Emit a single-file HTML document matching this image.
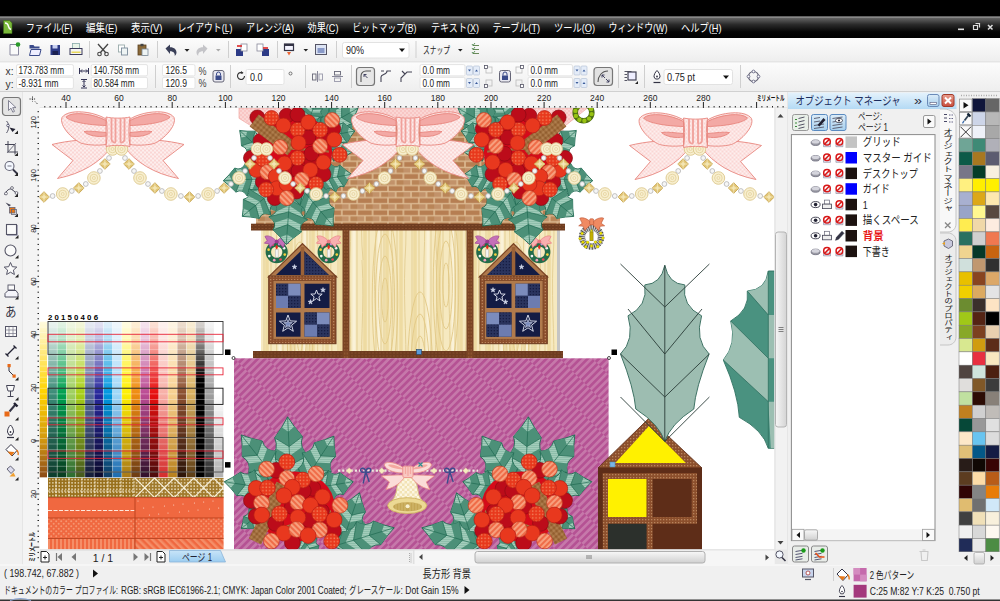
<!DOCTYPE html>
<html lang="ja">
<head>
<meta charset="utf-8">
<title>CorelDRAW - オブジェクト マネージャ</title>
<style>
html,body{margin:0;padding:0;background:#f0f0f0;overflow:hidden}
body{width:1000px;height:601px;position:relative;font-family:"Liberation Sans", "Noto Sans CJK JP", sans-serif}
svg{position:absolute;left:0;top:0;display:block}
text{font-family:"Liberation Sans", "Noto Sans CJK JP", sans-serif;white-space:pre}
</style>
</head>
<body>
<svg width="1000" height="601" viewBox="0 0 1000 601">
<defs>
<linearGradient id="gMenu" x1="0" y1="0" x2="0" y2="1"><stop offset="0" stop-color="#6a6a6a"/><stop offset="0.35" stop-color="#2a2a2a"/><stop offset="0.7" stop-color="#050505"/><stop offset="1" stop-color="#000"/></linearGradient>
<linearGradient id="gBar" x1="0" y1="0" x2="0" y2="1"><stop offset="0" stop-color="#fcfcfc"/><stop offset="1" stop-color="#eeeeee"/></linearGradient>
<linearGradient id="gHdr" x1="0" y1="0" x2="0" y2="1"><stop offset="0" stop-color="#e4f2fc"/><stop offset="1" stop-color="#b4daf4"/></linearGradient>
<linearGradient id="gTab" x1="0" y1="0" x2="0" y2="1"><stop offset="0" stop-color="#c8e4f8"/><stop offset="1" stop-color="#9ccdf0"/></linearGradient>
<linearGradient id="gThumbV" x1="0" y1="0" x2="1" y2="0"><stop offset="0" stop-color="#f6f6f6"/><stop offset="1" stop-color="#d4d4d4"/></linearGradient>
<linearGradient id="gThumbH" x1="0" y1="0" x2="0" y2="1"><stop offset="0" stop-color="#f8f8f8"/><stop offset="1" stop-color="#d0d0d0"/></linearGradient>
<linearGradient id="gBtnBlue" x1="0" y1="0" x2="0" y2="1"><stop offset="0" stop-color="#dcecf8"/><stop offset="1" stop-color="#a8d0ee"/></linearGradient>
<linearGradient id="gBtnRed" x1="0" y1="0" x2="0" y2="1"><stop offset="0" stop-color="#eaa090"/><stop offset="1" stop-color="#c84c3c"/></linearGradient>
<pattern id="pDots" width="4" height="4" patternUnits="userSpaceOnUse"><rect width="4" height="4" fill="#fad6d4"/><circle cx="1" cy="1" r="1.100" fill="#fef3f2"/><circle cx="3" cy="3" r="1.100" fill="#fef3f2"/></pattern>
<pattern id="pDots2" width="4" height="4" patternUnits="userSpaceOnUse"><rect width="4" height="4" fill="#f8c6c4"/><circle cx="1" cy="1" r="1" fill="#fbdcda"/><circle cx="3" cy="3" r="1" fill="#fbdcda"/></pattern>
<pattern id="pBell" width="5" height="5" patternUnits="userSpaceOnUse" x="2" y="1"><rect width="5" height="5" fill="#f2e3b4"/><rect width="2.500" height="2.500" fill="#fcf6e2"/><rect x="2.500" y="2.500" width="2.500" height="2.500" fill="#fcf6e2"/></pattern>
<pattern id="pLeafL" width="3" height="2" patternUnits="userSpaceOnUse"><rect width="3" height="2" fill="#8ebfab"/><rect width="3" height="0.900" fill="#a6cfbd"/></pattern>
<pattern id="pMag" width="46" height="5.300" patternUnits="userSpaceOnUse" patternTransform="translate(236 360) rotate(-45)"><rect width="46" height="5.300" fill="#b55294"/><rect x="0" y="0" width="23" height="2.650" fill="#c678aa"/><rect x="23" y="2.650" width="23" height="2.650" fill="#c678aa"/></pattern>
<pattern id="pBrick" width="15.400" height="12.100" patternUnits="userSpaceOnUse" x="3" y="4"><rect width="15.400" height="12.100" fill="#dcba92"/><rect x="0.800" y="0.700" width="13.800" height="4.700" fill="#b67e52"/><rect x="-6.900" y="6.750" width="13.800" height="4.700" fill="#c2926a"/><rect x="8.500" y="6.750" width="13.800" height="4.700" fill="#b98558"/></pattern>
<pattern id="pWood" width="74" height="130" patternUnits="userSpaceOnUse" x="261"><rect width="74" height="130" fill="#f6e9c0"/><path d="M6 0V130M30 0V130M52 0V130M66 0V130" stroke="#eedba2" stroke-width="3.500"/><path d="M19 0V130M44 0V130" stroke="#faf2d8" stroke-width="3"/><path d="M3 0V130M10 0V130M15 0C14 40 17 80 15 130M22 0V130M27 0C30 50 24 90 28 130M34 0V130M40 0C38 30 43 70 40 130M46 0V130M49 0V130M57 0C60 40 54 100 58 130M62 0V130M70 0C68 50 73 90 70 130" stroke="#e2cc90" stroke-width="0.900" fill="none"/></pattern>
<pattern id="pBrown" width="3.200" height="3.200" patternUnits="userSpaceOnUse" x="48" y="478"><rect width="3.200" height="3.200" fill="#98701c"/><rect x="1" y="1" width="1.300" height="1.300" fill="#fbf3dc"/></pattern>
<pattern id="pBrown2" width="3.200" height="3.200" patternUnits="userSpaceOnUse" x="135" y="478"><rect width="3.200" height="3.200" fill="#a07a2c"/><rect x="1" y="1" width="1.300" height="1.300" fill="#fbf3dc"/></pattern>
<pattern id="pFrame" width="3" height="3" patternUnits="userSpaceOnUse"><rect width="3" height="3" fill="#8c4f2c"/><rect x="0" y="0" width="1.3" height="1.3" fill="#b8845c"/></pattern>
<pattern id="pLeaf" width="3" height="3" patternUnits="userSpaceOnUse" patternTransform="rotate(20)"><rect width="3" height="3" fill="#5fa28e"/><rect width="3" height="1" fill="#79b3a1"/></pattern>
<pattern id="pBerryS" width="4" height="4" patternUnits="userSpaceOnUse" patternTransform="rotate(45)"><rect width="4" height="4" fill="#ef6c48"/><rect width="4" height="2" fill="#f7a07e"/></pattern>
<pattern id="pBerryD" width="3.4" height="3.4" patternUnits="userSpaceOnUse"><rect width="3.4" height="3.4" fill="#e8381c"/><rect x="0.400" y="0.400" width="1.400" height="1.400" fill="#f2805a"/></pattern>
<pattern id="pCinn" width="4" height="4" patternUnits="userSpaceOnUse" patternTransform="rotate(40)"><rect width="4" height="4" fill="#8a5628"/><path d="M0 2L2 0L4 2L2 4z" fill="#c09060"/></pattern>
<pattern id="pOrDot" width="5" height="5" patternUnits="userSpaceOnUse"><rect width="5" height="5" fill="#f06840"/><circle cx="1.2" cy="1.2" r="1" fill="#f59470"/><circle cx="3.7" cy="3.7" r="1" fill="#f59470"/></pattern>
<pattern id="pOrV" width="4" height="4" patternUnits="userSpaceOnUse"><rect width="4" height="4" fill="#f06840"/><rect width="2" height="4" fill="#f58e68"/></pattern>
<pattern id="pOrD" width="5" height="5" patternUnits="userSpaceOnUse" patternTransform="rotate(-45)"><rect width="5" height="5" fill="#f06840"/><rect width="2.5" height="5" fill="#f58e68"/></pattern>
<pattern id="pNavy" width="3" height="3" patternUnits="userSpaceOnUse"><rect width="3" height="3" fill="#2a345e"/><rect width="1.3" height="1.3" fill="#161d42"/></pattern>
<clipPath id="cCanvas"><rect x="39.5" y="108" width="735" height="441.5"/></clipPath>
</defs>
<g id="chrome">
<rect x="0.00" y="0.00" width="1000.00" height="601.00" fill="#f0f0f0" />
<rect x="0.00" y="0.00" width="1000.00" height="17.00" fill="#000" />
<rect x="0.00" y="16.30" width="1000.00" height="1.00" fill="#8a8a8a" />
<rect x="0.00" y="17.30" width="1000.00" height="20.70" fill="url(#gMenu)" />
<rect x="0.00" y="38.00" width="1000.00" height="23.50" fill="url(#gBar)" />
<rect x="0.00" y="61.50" width="1000.00" height="1.00" fill="#dcdcdc" />
<rect x="0.00" y="62.50" width="1000.00" height="28.50" fill="url(#gBar)" />
<rect x="0.00" y="91.00" width="1000.00" height="1.00" fill="#d0d0d0" />
<path d="M3.5 20.5h6l2.5 2.5v10.5h-8.5z" fill="#7ab83a" stroke="#3e6e18" stroke-width="0.6"/><path d="M5 23c1.5 0 3 1 3.5 3.5c.3 1.5 1.2 2.5 2.5 3" stroke="#fff" stroke-width="1.4" fill="none"/>
<g id="menubar">
<text x="26.0" y="31.5" font-size="11" fill="#fff" textLength="46.5" lengthAdjust="spacingAndGlyphs" >ファイル(F)</text>
<rect x="63.00" y="33.00" width="5.00" height="0.80" fill="#ddd" />
<text x="86.0" y="31.5" font-size="11" fill="#fff" textLength="31.5" lengthAdjust="spacingAndGlyphs" >編集(E)</text>
<rect x="108.00" y="33.00" width="5.00" height="0.80" fill="#ddd" />
<text x="131.0" y="31.5" font-size="11" fill="#fff" textLength="31.5" lengthAdjust="spacingAndGlyphs" >表示(V)</text>
<rect x="153.00" y="33.00" width="5.00" height="0.80" fill="#ddd" />
<text x="177.5" y="31.5" font-size="11" fill="#fff" textLength="55.0" lengthAdjust="spacingAndGlyphs" >レイアウト(L)</text>
<rect x="223.00" y="33.00" width="5.00" height="0.80" fill="#ddd" />
<text x="246.0" y="31.5" font-size="11" fill="#fff" textLength="48.0" lengthAdjust="spacingAndGlyphs" >アレンジ(A)</text>
<rect x="284.50" y="33.00" width="5.00" height="0.80" fill="#ddd" />
<text x="307.5" y="31.5" font-size="11" fill="#fff" textLength="31.0" lengthAdjust="spacingAndGlyphs" >効果(C)</text>
<rect x="329.00" y="33.00" width="5.00" height="0.80" fill="#ddd" />
<text x="352.5" y="31.5" font-size="11" fill="#fff" textLength="64.0" lengthAdjust="spacingAndGlyphs" >ビットマップ(B)</text>
<rect x="407.00" y="33.00" width="5.00" height="0.80" fill="#ddd" />
<text x="431.0" y="31.5" font-size="11" fill="#fff" textLength="48.0" lengthAdjust="spacingAndGlyphs" >テキスト(X)</text>
<rect x="469.50" y="33.00" width="5.00" height="0.80" fill="#ddd" />
<text x="492.5" y="31.5" font-size="11" fill="#fff" textLength="47.5" lengthAdjust="spacingAndGlyphs" >テーブル(T)</text>
<rect x="530.50" y="33.00" width="5.00" height="0.80" fill="#ddd" />
<text x="554.0" y="31.5" font-size="11" fill="#fff" textLength="41.0" lengthAdjust="spacingAndGlyphs" >ツール(O)</text>
<rect x="585.50" y="33.00" width="5.00" height="0.80" fill="#ddd" />
<text x="608.5" y="31.5" font-size="11" fill="#fff" textLength="59.0" lengthAdjust="spacingAndGlyphs" >ウィンドウ(W)</text>
<rect x="658.00" y="33.00" width="5.00" height="0.80" fill="#ddd" />
<text x="681.0" y="31.5" font-size="11" fill="#fff" textLength="40.5" lengthAdjust="spacingAndGlyphs" >ヘルプ(H)</text>
<rect x="712.00" y="33.00" width="5.00" height="0.80" fill="#ddd" />
</g>
<rect x="958.00" y="28.50" width="6.00" height="1.60" fill="#ddd" />
<path d="M973.5 25.5h4v4h-4z M975.5 23.5h4v4" fill="none" stroke="#ddd" stroke-width="1.2"/>
<path d="M988 25l4.5 4.5M992.5 25l-4.5 4.5" stroke="#ddd" stroke-width="1.5"/>
<g id="toolbar1">
<path d="M10 44.5h6l2.5 2.5v8h-8.5z" fill="#fafafa" stroke="#8a8aa0" stroke-width="1"/><circle cx="18" cy="44.5" r="2.3" fill="#2a9a2a"/>
<path d="M29.5 45h4l1 1.5h5v2h-10z" fill="#3a4a8a"/><path d="M29.5 55.500l1.5-6h10l-1.500 6z" fill="#eef" stroke="#3a4a8a" stroke-width="1"/>
<path d="M50.500 45h9.500v10h-9.500z" fill="#2c3a86"/><rect x="52.500" y="45" width="5" height="3.500" fill="#c8d0f0"/><rect x="52.500" y="51" width="5.500" height="4" fill="#1a2050"/>
<rect x="72.500" y="43.500" width="7" height="5" fill="#e8f4e8" stroke="#8aa" stroke-width="0.8"/><rect x="70" y="48.500" width="12" height="6" fill="#f4f4f4" stroke="#3a3a5a" stroke-width="1"/><rect x="71.500" y="51.500" width="9" height="1.500" fill="#e8d85a"/>
<rect x="89.00" y="41.00" width="1.00" height="17.00" fill="#cfcfcf" />
<path d="M98 44l8 9M108 44l-8 9" stroke="#444" stroke-width="1.3" fill="none"/><circle cx="99.500" cy="54" r="1.800" fill="none" stroke="#444" stroke-width="1.100"/><circle cx="106.500" cy="54" r="1.800" fill="none" stroke="#444" stroke-width="1.100"/>
<rect x="118.500" y="45" width="6" height="7" fill="#fff" stroke="#9aa" stroke-width="0.9"/><rect x="121.500" y="48" width="6" height="7" fill="#eef4f4" stroke="#7a8a9a" stroke-width="0.9"/>
<rect x="138" y="45" width="8" height="10" fill="#8a6a3a" stroke="#5a4020" stroke-width="0.8"/><rect x="140.500" y="43.800" width="3" height="2.400" fill="#444"/><rect x="142" y="49" width="6" height="6.500" fill="#eef4f4" stroke="#7a8a9a" stroke-width="0.8"/>
<rect x="157.00" y="41.00" width="1.00" height="17.00" fill="#cfcfcf" />
<path d="M165.500 48.500l4.500-4v2.700c4.500 0 6.500 2.500 6.500 5.300c0 1.500-.8 2.800-1.800 3.500c.5-2.500-1-4.800-4.700-4.800v2.800z" fill="#3a3f58"/>
<path d="M184.500 49l2.500 2.800l2.500-2.800z" fill="#222"/>
<path d="M207.500 48.500l-4.500-4v2.700c-4.500 0-6.500 2.500-6.500 5.300c0 1.500.8 2.800 1.800 3.500c-.5-2.500 1-4.800 4.700-4.800v2.800z" fill="#c4c4c8"/>
<path d="M216 49l2.300 2.600l2.300-2.600z" fill="#aaa"/>
<rect x="228.00" y="41.00" width="1.00" height="17.00" fill="#cfcfcf" />
<rect x="236" y="49" width="7" height="7" fill="#2c3a86"/><rect x="241" y="44" width="6" height="7" fill="#fff" stroke="#889" stroke-width="0.8"/><path d="M237 46h5" stroke="#d22" stroke-width="1.6"/>
<rect x="262" y="49" width="7" height="7" fill="#2c3a86"/><rect x="257" y="44" width="6" height="7" fill="#fff" stroke="#889" stroke-width="0.8"/><path d="M263 48h5" stroke="#d22" stroke-width="1.6"/>
<rect x="277.00" y="41.00" width="1.00" height="17.00" fill="#cfcfcf" />
<rect x="284.500" y="44" width="9" height="6.500" fill="#f4f4ff" stroke="#334" stroke-width="1.2"/><rect x="284.500" y="44" width="9" height="2" fill="#334"/><path d="M287 52l2 3.500l2-3.500z" fill="#e63"/>
<path d="M303.500 49l2.300 2.600l2.300-2.600z" fill="#222"/>
<rect x="315.500" y="44.500" width="11" height="10" fill="#dde4f4" stroke="#556" stroke-width="1"/><rect x="317.500" y="48" width="7" height="5" fill="#8a9ac8"/>
<rect x="336.00" y="41.00" width="1.00" height="17.00" fill="#cfcfcf" />
<rect x="342.50" y="42.50" width="66.50" height="15.50" fill="#fff" stroke="#e2e2e2" stroke-width="1" rx="2" />
<text x="346.0" y="54.0" font-size="11" fill="#222" textLength="18.0" lengthAdjust="spacingAndGlyphs" >90%</text>
<path d="M399 48.500l3 3.400l3-3.400z" fill="#111"/>
<rect x="415.50" y="41.00" width="1.00" height="17.00" fill="#cfcfcf" />
<text x="423.0" y="54.0" font-size="10.5" fill="#222" textLength="27.0" lengthAdjust="spacingAndGlyphs" >スナップ</text>
<path d="M458 49l2.300 2.600l2.300-2.600z" fill="#222"/>
<path d="M473 45.500h6M473 49.500h6M473 53.500h6" stroke="#6a8a5a" stroke-width="1.2"/><path d="M472 44l1 1.500l2-2.500M472 48l1 1.500l2-2.500M472 52l1 1.500l2-2.500" stroke="#3a7a3a" stroke-width="0.8" fill="none"/>
</g>
<g id="propbar">
<text x="5.5" y="75.0" font-size="11" fill="#333" textLength="8.0" lengthAdjust="spacingAndGlyphs" >x:</text>
<text x="5.5" y="87.5" font-size="11" fill="#333" textLength="8.0" lengthAdjust="spacingAndGlyphs" >y:</text>
<rect x="16.50" y="64.60" width="56.90" height="11.30" fill="#fff" stroke="#e4e4e4" stroke-width="1" rx="1.5" />
<rect x="16.50" y="77.40" width="56.90" height="11.20" fill="#fff" stroke="#e4e4e4" stroke-width="1" rx="1.5" />
<text x="18.5" y="74.3" font-size="11" fill="#222" textLength="45.5" lengthAdjust="spacingAndGlyphs" >173.783 mm</text>
<text x="18.5" y="86.8" font-size="11" fill="#222" textLength="40.0" lengthAdjust="spacingAndGlyphs" >-8.931 mm</text>
<path d="M79.500 68v6M88.500 68v6M80.500 71h7M82 69.500l-1.500 1.500l1.500 1.500M86 69.500l1.500 1.500l-1.500 1.500" stroke="#335" stroke-width="1" fill="none"/>
<path d="M81 79.500h6M81 88h6M84 80.500v6.500M82.500 82l1.500-1.500l1.500 1.500M82.500 85.500l1.500 1.500l1.500-1.500" stroke="#335" stroke-width="1" fill="none"/>
<rect x="91.20" y="64.60" width="56.30" height="11.30" fill="#fff" stroke="#e4e4e4" stroke-width="1" rx="1.5" />
<rect x="91.20" y="77.40" width="56.30" height="11.20" fill="#fff" stroke="#e4e4e4" stroke-width="1" rx="1.5" />
<text x="93.5" y="74.3" font-size="11" fill="#222" textLength="45.5" lengthAdjust="spacingAndGlyphs" >140.758 mm</text>
<text x="93.5" y="86.8" font-size="11" fill="#222" textLength="41.0" lengthAdjust="spacingAndGlyphs" >80.584 mm</text>
<rect x="155.00" y="65.00" width="1.00" height="23.00" fill="#cfcfcf" />
<rect x="162.50" y="64.60" width="32.50" height="11.30" fill="#fff" stroke="#e4e4e4" stroke-width="1" rx="1.5" />
<rect x="162.50" y="77.40" width="32.50" height="11.20" fill="#fff" stroke="#e4e4e4" stroke-width="1" rx="1.5" />
<text x="165.5" y="74.3" font-size="11" fill="#222" textLength="21.5" lengthAdjust="spacingAndGlyphs" >126.5</text>
<text x="165.5" y="86.8" font-size="11" fill="#222" textLength="21.5" lengthAdjust="spacingAndGlyphs" >120.9</text>
<text x="198.5" y="74.8" font-size="11" fill="#444" textLength="8.0" lengthAdjust="spacingAndGlyphs" >%</text>
<text x="198.5" y="87.0" font-size="11" fill="#444" textLength="8.0" lengthAdjust="spacingAndGlyphs" >%</text>
<rect x="213.00" y="70.50" width="11.00" height="11.50" fill="#e8e8f0" stroke="#667" stroke-width="1" rx="2" />
<rect x="215.500" y="75.500" width="6" height="4.500" fill="#3a4a8a"/><path d="M216.500 75.500v-1.500a2 2 0 0 1 4 0v1.500" stroke="#3a4a8a" stroke-width="1" fill="none"/>
<rect x="230.00" y="65.00" width="1.00" height="23.00" fill="#cfcfcf" />
<path d="M244.500 76a3.500 3.500 0 1 1-1.500-2.900" stroke="#333" stroke-width="1.100" fill="none"/><path d="M241 71l2.500 2l-2.800 1z" fill="#333"/>
<rect x="246.00" y="69.50" width="38.00" height="15.00" fill="#fff" stroke="#e4e4e4" stroke-width="1" rx="1.5" />
<text x="250.0" y="81.0" font-size="11" fill="#222" textLength="12.5" lengthAdjust="spacingAndGlyphs" >0.0</text>
<circle cx="290.500" cy="73.500" r="1.500" fill="none" stroke="#555" stroke-width="0.8"/>
<rect x="305.00" y="65.00" width="1.00" height="23.00" fill="#cfcfcf" />
<path d="M317.500 71v11" stroke="#889" stroke-width="1"/><rect x="312.500" y="74" width="3.500" height="6" fill="none" stroke="#667" stroke-width="0.9"/><rect x="319" y="74" width="3.500" height="6" fill="none" stroke="#99a" stroke-width="0.9"/>
<path d="M332 76.500h11" stroke="#889" stroke-width="1"/><rect x="334.500" y="71.500" width="6" height="3.500" fill="none" stroke="#667" stroke-width="0.9"/><rect x="334.500" y="78" width="6" height="3.500" fill="none" stroke="#99a" stroke-width="0.9"/>
<rect x="351.00" y="65.00" width="1.00" height="23.00" fill="#cfcfcf" />
<rect x="356.50" y="67.50" width="18.00" height="18.00" fill="#e6e6e6" stroke="#777" stroke-width="1.2" rx="3" />
<path d="M361 82v-6a5 5 0 0 1 5-5h5" stroke="#555" stroke-width="1.100" fill="none"/><path d="M364 74.500l3.500 3.500M364 74.500h2.500M364 74.500v2.500" stroke="#335" stroke-width="0.9" fill="none"/>
<path d="M381 82v-5c0-3 6-2 6-6h4M381 71h3" stroke="#445" stroke-width="1.100" fill="none"/>
<path d="M401 82v-4l6-6h5M402 71l3 3" stroke="#445" stroke-width="1.100" fill="none"/>
<rect x="420.00" y="64.60" width="45.00" height="11.30" fill="#fff" stroke="#e4e4e4" stroke-width="1" rx="1.5" />
<rect x="420.00" y="77.40" width="45.00" height="11.20" fill="#fff" stroke="#e4e4e4" stroke-width="1" rx="1.5" />
<text x="422.5" y="74.3" font-size="11" fill="#222" textLength="27.5" lengthAdjust="spacingAndGlyphs" >0.0 mm</text>
<text x="422.5" y="86.8" font-size="11" fill="#222" textLength="27.5" lengthAdjust="spacingAndGlyphs" >0.0 mm</text>
<rect x="466.50" y="66.00" width="6.00" height="9.00" fill="#e4ecf8" stroke="#b8c4d8" stroke-width="0.7" rx="1" />
<rect x="473.50" y="66.00" width="6.00" height="9.00" fill="#e4ecf8" stroke="#b8c4d8" stroke-width="0.7" rx="1" />
<path d="M468 69.5l1.500 2l1.500-2z M475 71.5l1.500-2l1.500 2z" fill="#3a5a9a"/>
<rect x="466.50" y="78.50" width="6.00" height="9.00" fill="#e4ecf8" stroke="#b8c4d8" stroke-width="0.7" rx="1" />
<rect x="473.50" y="78.50" width="6.00" height="9.00" fill="#e4ecf8" stroke="#b8c4d8" stroke-width="0.7" rx="1" />
<path d="M468 82.0l1.500 2l1.500-2z M475 84.0l1.500-2l1.500 2z" fill="#3a5a9a"/>
<rect x="486" y="67" width="6" height="6" fill="none" stroke="#bbb" stroke-width="0.8"/><rect x="484.500" y="65.500" width="3" height="3" fill="#fff" stroke="#556" stroke-width="0.8"/>
<rect x="486" y="80" width="6" height="6" fill="none" stroke="#bbb" stroke-width="0.8"/><rect x="484.500" y="84.500" width="3" height="3" fill="#fff" stroke="#556" stroke-width="0.8"/>
<rect x="499.50" y="70.50" width="11.00" height="11.50" fill="#e8e8f0" stroke="#667" stroke-width="1" rx="2" />
<rect x="502" y="75.500" width="6" height="4.500" fill="#3a4a8a"/><path d="M503 75.500v-1.500a2 2 0 0 1 4 0v1.500" stroke="#3a4a8a" stroke-width="1" fill="none"/>
<rect x="516" y="67" width="6" height="6" fill="none" stroke="#bbb" stroke-width="0.8"/><rect x="520.500" y="65.500" width="3" height="3" fill="#fff" stroke="#556" stroke-width="0.8"/>
<rect x="516" y="80" width="6" height="6" fill="none" stroke="#bbb" stroke-width="0.8"/><rect x="520.500" y="84.500" width="3" height="3" fill="#fff" stroke="#556" stroke-width="0.8"/>
<rect x="528.00" y="64.60" width="44.50" height="11.30" fill="#fff" stroke="#e4e4e4" stroke-width="1" rx="1.5" />
<rect x="528.00" y="77.40" width="44.50" height="11.20" fill="#fff" stroke="#e4e4e4" stroke-width="1" rx="1.5" />
<text x="530.5" y="74.3" font-size="11" fill="#222" textLength="27.5" lengthAdjust="spacingAndGlyphs" >0.0 mm</text>
<text x="530.5" y="86.8" font-size="11" fill="#222" textLength="27.5" lengthAdjust="spacingAndGlyphs" >0.0 mm</text>
<rect x="574.00" y="66.00" width="6.00" height="9.00" fill="#e4ecf8" stroke="#b8c4d8" stroke-width="0.7" rx="1" />
<rect x="581.00" y="66.00" width="6.00" height="9.00" fill="#e4ecf8" stroke="#b8c4d8" stroke-width="0.7" rx="1" />
<path d="M575.500 69.5l1.500 2l1.500-2z M582.500 71.5l1.500-2l1.500 2z" fill="#3a5a9a"/>
<rect x="574.00" y="78.50" width="6.00" height="9.00" fill="#e4ecf8" stroke="#b8c4d8" stroke-width="0.7" rx="1" />
<rect x="581.00" y="78.50" width="6.00" height="9.00" fill="#e4ecf8" stroke="#b8c4d8" stroke-width="0.7" rx="1" />
<path d="M575.500 82.0l1.500 2l1.500-2z M582.500 84.0l1.500-2l1.500 2z" fill="#3a5a9a"/>
<rect x="594.00" y="67.50" width="18.50" height="18.00" fill="#e2e2e2" stroke="#777" stroke-width="1.2" rx="3" />
<path d="M598 82c0-6 4-11 10-11" stroke="#555" stroke-width="1.100" fill="none"/><path d="M602 75l3 3M606 79l3 3M602 75h2.500M602 75v2.500M609 82h-2.500M609 82v-2.500" stroke="#335" stroke-width="0.9" fill="none"/>
<rect x="618.00" y="65.00" width="1.00" height="23.00" fill="#cfcfcf" />
<rect x="628" y="72" width="8" height="8" fill="#eef" stroke="#445" stroke-width="1.200"/><path d="M624.500 71.500h7M624.500 74.500h2.500M624.500 77.500h2.500M624.500 80.500h2.500" stroke="#445" stroke-width="0.9"/><path d="M635 84l3-3v3z" fill="#222"/>
<rect x="644.00" y="65.00" width="1.00" height="23.00" fill="#cfcfcf" />
<path d="M657 70.500c-2 2-3 4-3 6.500l1.500 2h3l1.500-2c0-2.500-1-4.500-3-6.500z" fill="#fff" stroke="#334" stroke-width="1"/><circle cx="657" cy="76.500" r="0.900" fill="#334"/><path d="M653.500 82.500h7" stroke="#334" stroke-width="1.200"/>
<rect x="664.00" y="69.50" width="68.50" height="15.00" fill="#fff" stroke="#e2e2e2" stroke-width="1" rx="2" />
<text x="667.0" y="81.0" font-size="11" fill="#222" textLength="28.0" lengthAdjust="spacingAndGlyphs" >0.75 pt</text>
<path d="M723 75.500l3 3.400l3-3.400z" fill="#111"/>
<rect x="740.00" y="65.00" width="1.00" height="23.00" fill="#cfcfcf" />
<circle cx="753.500" cy="76.500" r="5" fill="none" stroke="#667" stroke-width="1.100"/><circle cx="753.500" cy="71.500" r="1.400" fill="#fff" stroke="#446" stroke-width="0.700"/><circle cx="753.500" cy="81.500" r="1.400" fill="#fff" stroke="#446" stroke-width="0.700"/><circle cx="748.500" cy="76.500" r="1.400" fill="#fff" stroke="#446" stroke-width="0.700"/><circle cx="758.500" cy="76.500" r="1.400" fill="#fff" stroke="#446" stroke-width="0.700"/>
</g>
<g id="toolbox">
<rect x="0.00" y="92.00" width="23.00" height="473.00" fill="#f1f1f1" />
<rect x="22.50" y="92.00" width="1.00" height="473.00" fill="#dadada" />
<rect x="2.50" y="97.50" width="18.00" height="18.00" fill="#e4e4e4" stroke="#777" stroke-width="1.2" rx="3" />
<path d="M8.500 100.500v10l2.500-2.300l1.800 4l1.700-.8l-1.800-3.800h3.300z" fill="#f4f4fa" stroke="#778" stroke-width="0.9"/>
<path d="M6.500 121c3 3 3 8 0 12" stroke="#556" stroke-width="1" fill="none"/><circle cx="8" cy="125.500" r="1.300" fill="#fff" stroke="#335" stroke-width="0.700"/><path d="M9.500 127.500l6 1.500l-3 3z" fill="#223"/>
<path d="M14.5 134l3.500-3.500v3.500z" fill="#222"/>
<path d="M8 141v11h10M5 144.500h10v10" stroke="#445" stroke-width="1" fill="none"/><path d="M7 153l9-10" stroke="#556" stroke-width="0.800"/>
<path d="M14.5 156l3.500-3.500v3.500z" fill="#222"/>
<circle cx="9.500" cy="166" r="4.500" fill="#f4f8ff" stroke="#667" stroke-width="1.100"/><path d="M7.500 166h4" stroke="#667" stroke-width="0.900"/><path d="M13 169.500l4.500 4.500" stroke="#334" stroke-width="1.800"/>
<path d="M14.5 176l3.500-3.500v3.500z" fill="#222"/>
<path d="M4.500 194.500c3-6 7-7 9-3.500l4 2.500" stroke="#445" stroke-width="1" fill="none"/><circle cx="6" cy="193.500" r="1.400" fill="#fff" stroke="#445" stroke-width="0.700"/><circle cx="12" cy="188" r="1.400" fill="#fff" stroke="#445" stroke-width="0.700"/><circle cx="16.500" cy="193" r="1.400" fill="#fff" stroke="#445" stroke-width="0.700"/>
<path d="M14.5 197l3.500-3.500v3.500z" fill="#222"/>
<rect x="9.500" y="207.500" width="5.500" height="5.500" fill="#e87818" stroke="#667" stroke-width="0.800"/><rect x="11.500" y="209.500" width="5" height="5" fill="none" stroke="#667" stroke-width="0.800"/><path d="M5.500 202.500l3.500 4l2-1.500z" fill="#445"/>
<path d="M14.5 217l3.500-3.500v3.500z" fill="#222"/>
<rect x="6.500" y="224.500" width="10" height="10" fill="#fafafa" stroke="#556" stroke-width="1.100"/><path d="M7 235.500h10.500v-10.500" stroke="#aab" stroke-width="1" fill="none"/>
<path d="M15 238.5l3.500-3.500v3.500z" fill="#222"/>
<circle cx="10.500" cy="250.500" r="5.500" fill="#fafafa" stroke="#556" stroke-width="1.100"/>
<path d="M15 258.5l3.500-3.500v3.500z" fill="#222"/>
<path d="M10.500 262.500l1.800 4.200l4.500.4l-3.400 3l1 4.400l-3.900-2.300l-3.900 2.300l1-4.400l-3.400-3l4.500-.4z" fill="#fafafa" stroke="#556" stroke-width="1"/>
<path d="M15 277.5l3.500-3.500v3.500z" fill="#222"/>
<path d="M5 293.500l3-3h8l2 3v3.500h-13z" fill="#f4f4fa" stroke="#556" stroke-width="1"/><rect x="8" y="285" width="6.500" height="5" fill="#fafafa" stroke="#556" stroke-width="0.900"/>
<path d="M15 299.5l3.500-3.500v3.500z" fill="#222"/>
<text x="5.0" y="316.0" font-size="13" fill="#334" textLength="11.5" lengthAdjust="spacingAndGlyphs" >あ</text>
<rect x="5.500" y="326.500" width="11" height="10" fill="#fafafa" stroke="#556" stroke-width="1"/><path d="M5.500 330h11M5.500 333.500h11M9 326.500v10M13 326.500v10" stroke="#778" stroke-width="0.700"/>
<path d="M7 355l8-8M5.500 353.500l3 3M13.500 345.500l3 3" stroke="#223" stroke-width="1.300"/>
<path d="M15 359.5l3.500-3.500v3.500z" fill="#222"/>
<path d="M9 366v5l5 5" stroke="#334" stroke-width="1" fill="none"/><rect x="7.500" y="364" width="3.200" height="3.200" fill="#e86a18"/><rect x="12.500" y="374.500" width="3.200" height="3.200" fill="#e86a18"/>
<path d="M15 380.5l3.500-3.500v3.500z" fill="#222"/>
<path d="M6.500 385.500h8l-1.500 5.500h-5zM10.500 391v5M7.500 396.500h6" fill="#fafafa" stroke="#445" stroke-width="1"/>
<path d="M15 400.5l3.500-3.500v3.500z" fill="#222"/>
<path d="M15.500 404.500l-6 7" stroke="#334" stroke-width="2"/><path d="M14 403l3.500 3.500" stroke="#223" stroke-width="2.400"/><rect x="4.500" y="411.500" width="5" height="5" fill="#e86a18"/>
<path d="M15 420.5l3.500-3.500v3.500z" fill="#222"/>
<path d="M10.500 425c-2 2-3 4.500-3 7l1.500 3h3l1.500-3c0-2.500-1-5-3-7z" fill="#fff" stroke="#334" stroke-width="1"/><circle cx="10.500" cy="432" r="0.900" fill="#334"/><path d="M7 437.500h7" stroke="#334" stroke-width="1.200"/>
<path d="M15 440.5l3.500-3.500v3.500z" fill="#222"/>
<path d="M6 449.500l5-5l6 6l-5 5.500z" fill="#fff" stroke="#334" stroke-width="1"/><path d="M7.500 451.500l7 .5l-3 4z" fill="#e87818"/><path d="M16.500 450c1.500 1.500 2 3.500 1.500 5" stroke="#e87818" stroke-width="1.300" fill="none"/>
<path d="M15 460.5l3.500-3.500v3.500z" fill="#222"/>
<path d="M7 469l3.500-3l4 4l-3.500 3.500z" fill="#dde" stroke="#556" stroke-width="0.900"/><path d="M9.500 476.500l4-4l2 4z" fill="#f0a030"/>
<path d="M15 480.5l3.500-3.500v3.500z" fill="#222"/>
</g>
<g id="rulers">
<rect x="23.00" y="92.00" width="764.00" height="16.00" fill="#f4f4f4" />
<rect x="39.50" y="107.60" width="748.00" height="0.80" fill="#d4d4d4" />
<rect x="23.00" y="108.00" width="16.50" height="456.50" fill="#f4f4f4" />
<path d="M29.500 99h6M32.500 96.500v5M35 101.500l2.500 2.500" stroke="#333" stroke-width="1" stroke-dasharray="1.200 1"/>
<path d="M44.8 106V107.5 M50.1 106V107.5 M55.4 106V107.5 M60.7 106V107.5 M66.0 102V108 M71.3 106V107.5 M76.6 106V107.5 M81.9 106V107.5 M87.2 106V107.5 M92.6 106V107.5 M97.9 106V107.5 M103.2 106V107.5 M108.5 106V107.5 M113.8 106V107.5 M119.1 102V108 M124.4 106V107.5 M129.7 106V107.5 M135.1 106V107.5 M140.4 106V107.5 M145.7 106V107.5 M151.0 106V107.5 M156.3 106V107.5 M161.6 106V107.5 M166.9 106V107.5 M172.2 102V108 M177.6 106V107.5 M182.9 106V107.5 M188.2 106V107.5 M193.5 106V107.5 M198.8 106V107.5 M204.1 106V107.5 M209.4 106V107.5 M214.7 106V107.5 M220.0 106V107.5 M225.4 102V108 M230.7 106V107.5 M236.0 106V107.5 M241.3 106V107.5 M246.6 106V107.5 M251.9 106V107.5 M257.2 106V107.5 M262.5 106V107.5 M267.9 106V107.5 M273.2 106V107.5 M278.5 102V108 M283.8 106V107.5 M289.1 106V107.5 M294.4 106V107.5 M299.7 106V107.5 M305.0 106V107.5 M310.4 106V107.5 M315.7 106V107.5 M321.0 106V107.5 M326.3 106V107.5 M331.6 102V108 M336.9 106V107.5 M342.2 106V107.5 M347.5 106V107.5 M352.8 106V107.5 M358.2 106V107.5 M363.5 106V107.5 M368.8 106V107.5 M374.1 106V107.5 M379.4 106V107.5 M384.7 102V108 M390.0 106V107.5 M395.3 106V107.5 M400.7 106V107.5 M406.0 106V107.5 M411.3 106V107.5 M416.6 106V107.5 M421.9 106V107.5 M427.2 106V107.5 M432.5 106V107.5 M437.8 102V108 M443.2 106V107.5 M448.5 106V107.5 M453.8 106V107.5 M459.1 106V107.5 M464.4 106V107.5 M469.7 106V107.5 M475.0 106V107.5 M480.3 106V107.5 M485.6 106V107.5 M491.0 102V108 M496.3 106V107.5 M501.6 106V107.5 M506.9 106V107.5 M512.2 106V107.5 M517.5 106V107.5 M522.8 106V107.5 M528.1 106V107.5 M533.5 106V107.5 M538.8 106V107.5 M544.1 102V108 M549.4 106V107.5 M554.7 106V107.5 M560.0 106V107.5 M565.3 106V107.5 M570.6 106V107.5 M576.0 106V107.5 M581.3 106V107.5 M586.6 106V107.5 M591.9 106V107.5 M597.2 102V108 M602.5 106V107.5 M607.8 106V107.5 M613.1 106V107.5 M618.4 106V107.5 M623.8 106V107.5 M629.1 106V107.5 M634.4 106V107.5 M639.7 106V107.5 M645.0 106V107.5 M650.3 102V108 M655.6 106V107.5 M660.9 106V107.5 M666.3 106V107.5 M671.6 106V107.5 M676.9 106V107.5 M682.2 106V107.5 M687.5 106V107.5 M692.8 106V107.5 M698.1 106V107.5 M703.4 102V108 M708.8 106V107.5 M714.1 106V107.5 M719.4 106V107.5 M724.7 106V107.5 M730.0 106V107.5 M735.3 106V107.5 M740.6 106V107.5 M745.9 106V107.5 M751.2 106V107.5 M756.6 102V108 M761.9 106V107.5 M767.2 106V107.5 M772.5 106V107.5 M777.8 106V107.5 M783.1 106V107.5" stroke="#222" stroke-width="1"/>
<text x="66.0" y="100.5" font-size="8.5" fill="#222" text-anchor="middle" >40</text>
<text x="119.1" y="100.5" font-size="8.5" fill="#222" text-anchor="middle" >60</text>
<text x="172.2" y="100.5" font-size="8.5" fill="#222" text-anchor="middle" >80</text>
<text x="225.4" y="100.5" font-size="8.5" fill="#222" text-anchor="middle" >100</text>
<text x="278.5" y="100.5" font-size="8.5" fill="#222" text-anchor="middle" >120</text>
<text x="331.6" y="100.5" font-size="8.5" fill="#222" text-anchor="middle" >140</text>
<text x="384.7" y="100.5" font-size="8.5" fill="#222" text-anchor="middle" >160</text>
<text x="437.8" y="100.5" font-size="8.5" fill="#222" text-anchor="middle" >180</text>
<text x="491.0" y="100.5" font-size="8.5" fill="#222" text-anchor="middle" >200</text>
<text x="544.1" y="100.5" font-size="8.5" fill="#222" text-anchor="middle" >220</text>
<text x="597.2" y="100.5" font-size="8.5" fill="#222" text-anchor="middle" >240</text>
<text x="650.3" y="100.5" font-size="8.5" fill="#222" text-anchor="middle" >260</text>
<text x="703.4" y="100.5" font-size="8.5" fill="#222" text-anchor="middle" >280</text>
<text x="757.0" y="100.8" font-size="7.5" fill="#111" textLength="27.5" lengthAdjust="spacingAndGlyphs" font-weight="bold" >ミリメートル</text>
<path d="M37.500 111.7H39 M37.500 117.0H39 M33.500 122.3H39.500 M37.500 127.6H39 M37.500 132.9H39 M37.500 138.2H39 M37.500 143.5H39 M37.500 148.8H39 M37.500 154.2H39 M37.500 159.5H39 M37.500 164.8H39 M37.500 170.1H39 M33.500 175.4H39.500 M37.500 180.7H39 M37.500 186.0H39 M37.500 191.3H39 M37.500 196.6H39 M37.500 201.9H39 M37.500 207.3H39 M37.500 212.6H39 M37.500 217.9H39 M37.500 223.2H39 M33.500 228.5H39.500 M37.500 233.8H39 M37.500 239.1H39 M37.500 244.4H39 M37.500 249.7H39 M37.500 255.1H39 M37.500 260.4H39 M37.500 265.7H39 M37.500 271.0H39 M37.500 276.3H39 M33.500 281.6H39.500 M37.500 286.9H39 M37.500 292.2H39 M37.500 297.5H39 M37.500 302.8H39 M37.500 308.1H39 M37.500 313.5H39 M37.500 318.8H39 M37.500 324.1H39 M37.500 329.4H39 M33.500 334.7H39.500 M37.500 340.0H39 M37.500 345.3H39 M37.500 350.6H39 M37.500 355.9H39 M37.500 361.2H39 M37.500 366.6H39 M37.500 371.9H39 M37.500 377.2H39 M37.500 382.5H39 M33.500 387.8H39.500 M37.500 393.1H39 M37.500 398.4H39 M37.500 403.7H39 M37.500 409.0H39 M37.500 414.3H39 M37.500 419.7H39 M37.500 425.0H39 M37.500 430.3H39 M37.500 435.6H39 M33.500 440.9H39.500 M37.500 446.2H39 M37.500 451.5H39 M37.500 456.8H39 M37.500 462.1H39 M37.500 467.4H39 M37.500 472.8H39 M37.500 478.1H39 M37.500 483.4H39 M37.500 488.7H39 M33.500 494.0H39.500 M37.500 499.3H39 M37.500 504.6H39 M37.500 509.9H39 M37.500 515.2H39 M37.500 520.5H39 M37.500 525.9H39 M37.500 531.2H39 M37.500 536.5H39 M37.500 541.8H39 M33.500 547.1H39.500 M37.500 552.4H39 M37.500 557.7H39" stroke="#222" stroke-width="1"/>
<text transform="translate(35.500 122.3) rotate(-90)" font-size="7.500" fill="#222" text-anchor="middle">120</text>
<text transform="translate(35.500 175.4) rotate(-90)" font-size="7.500" fill="#222" text-anchor="middle">100</text>
<text transform="translate(35.500 228.5) rotate(-90)" font-size="7.500" fill="#222" text-anchor="middle">80</text>
<text transform="translate(35.500 281.6) rotate(-90)" font-size="7.500" fill="#222" text-anchor="middle">60</text>
<text transform="translate(35.500 334.7) rotate(-90)" font-size="7.500" fill="#222" text-anchor="middle">40</text>
<text transform="translate(35.500 387.8) rotate(-90)" font-size="7.500" fill="#222" text-anchor="middle">20</text>
<text transform="translate(35.500 440.9) rotate(-90)" font-size="7.500" fill="#222" text-anchor="middle">0</text>
<text transform="translate(35.500 494.0) rotate(-90)" font-size="7.500" fill="#222" text-anchor="middle">20</text>
<text transform="translate(35 547) rotate(-90)" font-size="7.500" font-weight="bold" fill="#222" text-anchor="middle" textLength="30" lengthAdjust="spacingAndGlyphs">ミリメートル</text>
</g>
<rect x="39.50" y="108.00" width="735.00" height="441.50" fill="#fff" />
<g id="canvas" clip-path="url(#cCanvas)">
<path d="M239 108H587.500L563 127.500V134H264L239 118.300z" fill="url(#pDots2)" stroke="#f0a8a2" stroke-width="0.700"/>
<path d="M256 224V172L302 124H514L560 172V224z" fill="url(#pBrick)"/>
<rect x="556.50" y="230.00" width="3.50" height="121.00" fill="#c4c4c4" />
<rect x="261.00" y="230.00" width="296.00" height="122.00" fill="url(#pWood)" />
<clipPath id="cWall"><rect x="261" y="230" width="296" height="122"/></clipPath><g clip-path="url(#cWall)" fill="none" stroke="#e2c886" stroke-width="0.900">
<ellipse cx="385" cy="300" rx="3.2" ry="22"/>
<ellipse cx="385" cy="300" rx="6.4" ry="44"/>
<ellipse cx="385" cy="300" rx="9.6" ry="66"/>
<ellipse cx="385" cy="300" rx="12.8" ry="88"/>
<ellipse cx="446" cy="285" rx="3.2" ry="22"/>
<ellipse cx="446" cy="285" rx="6.4" ry="44"/>
<ellipse cx="446" cy="285" rx="9.6" ry="66"/>
<ellipse cx="446" cy="285" rx="12.8" ry="88"/>
<ellipse cx="300" cy="330" rx="3.2" ry="22"/>
<ellipse cx="300" cy="330" rx="6.4" ry="44"/>
<ellipse cx="300" cy="330" rx="9.6" ry="66"/>
<ellipse cx="300" cy="330" rx="12.8" ry="88"/>
<ellipse cx="516" cy="330" rx="3.2" ry="22"/>
<ellipse cx="516" cy="330" rx="6.4" ry="44"/>
<ellipse cx="516" cy="330" rx="9.6" ry="66"/>
<ellipse cx="516" cy="330" rx="12.8" ry="88"/>
<ellipse cx="420" cy="380" rx="3.2" ry="22"/>
<ellipse cx="420" cy="380" rx="6.4" ry="44"/>
<ellipse cx="420" cy="380" rx="9.6" ry="66"/>
<ellipse cx="420" cy="380" rx="12.8" ry="88"/>
</g>
<rect x="251.00" y="223.70" width="314.00" height="6.80" fill="#6e3c20" />
<path d="M251 225.500h314M251 228.500h314" stroke="#8a5230" stroke-width="0.800" stroke-dasharray="2 1.500"/>
<rect x="253.00" y="351.00" width="310.00" height="7.30" fill="#6e3c20" />
<path d="M253 353h310M253 356h310" stroke="#8a5230" stroke-width="0.800" stroke-dasharray="2 1.500"/>
<rect x="342.50" y="230.00" width="7.00" height="128.00" fill="#7a4424" />
<path d="M344.8 230v128M347.2 230v128" stroke="#9a6238" stroke-width="0.800" stroke-dasharray="2 1.500"/>
<rect x="466.50" y="230.00" width="7.00" height="128.00" fill="#7a4424" />
<path d="M468.8 230v128M471.2 230v128" stroke="#9a6238" stroke-width="0.800" stroke-dasharray="2 1.500"/>
<g>
<path d="M302.500 243.700L336.500 277H268.500z" fill="#b07a4c" stroke="#7c4626" stroke-width="1.200"/>
<path d="M302.500 249.500L329 275H276z" fill="#141c44"/>
<path d="M304.500 252L328.500 275H304.500z" fill="url(#pNavy)"/>
<rect x="300.70" y="247.00" width="3.60" height="29.00" fill="#9a6238" />
<rect x="268.70" y="276.00" width="67.30" height="67.70" fill="url(#pFrame)" stroke="#6c3a1e" stroke-width="1" />
<rect x="273.00" y="280.50" width="58.50" height="58.80" fill="#b07a4c" stroke="#7c4626" stroke-width="0.8" />
<rect x="276.00" y="283.70" width="24.50" height="24.30" fill="#141c44" />
<rect x="304.50" y="283.70" width="25.00" height="24.30" fill="#141c44" />
<rect x="276.00" y="312.50" width="24.50" height="24.20" fill="#141c44" />
<rect x="304.50" y="312.50" width="25.00" height="24.20" fill="#141c44" />
<rect x="276.00" y="283.70" width="12.20" height="12.10" fill="url(#pNavy)" />
<rect x="288.20" y="283.70" width="12.30" height="12.10" fill="#7c8cbc" />
<rect x="276.00" y="295.80" width="12.20" height="12.20" fill="#6c7cb0" />
<rect x="288.20" y="295.80" width="12.30" height="12.20" fill="url(#pNavy)" />
<rect x="304.50" y="312.50" width="12.50" height="12.10" fill="url(#pNavy)" />
<rect x="317.00" y="312.50" width="12.50" height="12.10" fill="#7c8cbc" />
<rect x="304.50" y="324.60" width="12.50" height="12.10" fill="#6c7cb0" />
<rect x="317.00" y="324.60" width="12.50" height="12.10" fill="url(#pNavy)" />
<polygon points="288.0,315.0 290.2,320.9 296.6,321.2 291.6,325.2 293.3,331.3 288.0,327.8 282.7,331.3 284.4,325.2 279.4,321.2 285.8,320.9" fill="none" stroke="#e4e8f4" stroke-width="0.9"/>
<polygon points="288.0,319.5 289.1,322.5 292.3,322.6 289.8,324.6 290.6,327.6 288.0,325.9 285.4,327.6 286.2,324.6 283.7,322.6 286.9,322.5" fill="#7c8cbc" stroke="#e4e8f4" stroke-width="0.5"/>
<polygon points="316.5,290.0 318.0,294.0 322.2,294.1 318.9,296.8 320.0,300.9 316.5,298.5 313.0,300.9 314.1,296.8 310.8,294.1 315.0,294.0" fill="none" stroke="#e4e8f4" stroke-width="0.9"/>
<polygon points="310.5,299.5 311.1,301.2 312.9,301.2 311.5,302.3 312.0,304.0 310.5,303.1 309.0,304.0 309.5,302.3 308.1,301.2 309.9,301.2" fill="#c8d0e8" stroke="#e4e8f4" stroke-width="0.5"/>
<polygon points="323.0,287.5 323.6,289.2 325.4,289.2 324.0,290.3 324.5,292.0 323.0,291.1 321.5,292.0 322.0,290.3 320.6,289.2 322.4,289.2" fill="#c8d0e8" stroke="#e4e8f4" stroke-width="0.5"/>
<polygon points="294.5,264.5 295.1,266.2 296.9,266.2 295.5,267.3 296.0,269.0 294.5,268.1 293.0,269.0 293.5,267.3 292.1,266.2 293.9,266.2" fill="#c8d0e8" stroke="#e4e8f4" stroke-width="0.5"/>
</g>
<g transform="translate(816.0 0) scale(-1 1)">
<path d="M302.500 243.700L336.500 277H268.500z" fill="#b07a4c" stroke="#7c4626" stroke-width="1.200"/>
<path d="M302.500 249.500L329 275H276z" fill="#141c44"/>
<path d="M304.500 252L328.500 275H304.500z" fill="url(#pNavy)"/>
<rect x="300.70" y="247.00" width="3.60" height="29.00" fill="#9a6238" />
<rect x="268.70" y="276.00" width="67.30" height="67.70" fill="url(#pFrame)" stroke="#6c3a1e" stroke-width="1" />
<rect x="273.00" y="280.50" width="58.50" height="58.80" fill="#b07a4c" stroke="#7c4626" stroke-width="0.8" />
<rect x="276.00" y="283.70" width="24.50" height="24.30" fill="#141c44" />
<rect x="304.50" y="283.70" width="25.00" height="24.30" fill="#141c44" />
<rect x="276.00" y="312.50" width="24.50" height="24.20" fill="#141c44" />
<rect x="304.50" y="312.50" width="25.00" height="24.20" fill="#141c44" />
<rect x="276.00" y="283.70" width="12.20" height="12.10" fill="url(#pNavy)" />
<rect x="288.20" y="283.70" width="12.30" height="12.10" fill="#7c8cbc" />
<rect x="276.00" y="295.80" width="12.20" height="12.20" fill="#6c7cb0" />
<rect x="288.20" y="295.80" width="12.30" height="12.20" fill="url(#pNavy)" />
<rect x="304.50" y="312.50" width="12.50" height="12.10" fill="url(#pNavy)" />
<rect x="317.00" y="312.50" width="12.50" height="12.10" fill="#7c8cbc" />
<rect x="304.50" y="324.60" width="12.50" height="12.10" fill="#6c7cb0" />
<rect x="317.00" y="324.60" width="12.50" height="12.10" fill="url(#pNavy)" />
<polygon points="288.0,315.0 290.2,320.9 296.6,321.2 291.6,325.2 293.3,331.3 288.0,327.8 282.7,331.3 284.4,325.2 279.4,321.2 285.8,320.9" fill="none" stroke="#e4e8f4" stroke-width="0.9"/>
<polygon points="288.0,319.5 289.1,322.5 292.3,322.6 289.8,324.6 290.6,327.6 288.0,325.9 285.4,327.6 286.2,324.6 283.7,322.6 286.9,322.5" fill="#7c8cbc" stroke="#e4e8f4" stroke-width="0.5"/>
<polygon points="316.5,290.0 318.0,294.0 322.2,294.1 318.9,296.8 320.0,300.9 316.5,298.5 313.0,300.9 314.1,296.8 310.8,294.1 315.0,294.0" fill="none" stroke="#e4e8f4" stroke-width="0.9"/>
<polygon points="310.5,299.5 311.1,301.2 312.9,301.2 311.5,302.3 312.0,304.0 310.5,303.1 309.0,304.0 309.5,302.3 308.1,301.2 309.9,301.2" fill="#c8d0e8" stroke="#e4e8f4" stroke-width="0.5"/>
<polygon points="323.0,287.5 323.6,289.2 325.4,289.2 324.0,290.3 324.5,292.0 323.0,291.1 321.5,292.0 322.0,290.3 320.6,289.2 322.4,289.2" fill="#c8d0e8" stroke="#e4e8f4" stroke-width="0.5"/>
<polygon points="294.5,264.5 295.1,266.2 296.9,266.2 295.5,267.3 296.0,269.0 294.5,268.1 293.0,269.0 293.5,267.3 292.1,266.2 293.9,266.2" fill="#c8d0e8" stroke="#e4e8f4" stroke-width="0.5"/>
</g>
<g transform="translate(276.7 251) scale(1.120) translate(-276.7 -251)">
<circle cx="276.7" cy="252" r="7.500" fill="none" stroke="#246c4a" stroke-width="4.800"/>
<circle cx="283.9" cy="254.2" r="1.200" fill="#f4d040"/>
<circle cx="280.2" cy="258.6" r="1.200" fill="#e84a5a"/>
<circle cx="274.5" cy="259.2" r="1.200" fill="#f0a0c0"/>
<circle cx="270.1" cy="255.5" r="1.200" fill="#f4f4f4"/>
<circle cx="269.5" cy="249.8" r="1.200" fill="#f4d040"/>
<circle cx="273.2" cy="245.4" r="1.200" fill="#e84a5a"/>
<circle cx="278.9" cy="244.8" r="1.200" fill="#c890e0"/>
<circle cx="283.3" cy="248.5" r="1.200" fill="#f4f4f4"/>
<rect x="275.40" y="249.50" width="2.60" height="7.00" fill="#f4f4f4" stroke="#aaa" stroke-width="0.4" />
<path d="M276.7 245.5c1.500 1.500 1.500 3 0 4c-1.500-1-1.500-2.500 0-4z" fill="#e8281c"/>
<path d="M276.7 242.5c-3-4-8-6-10.500-4.500l2 3.500l-2.500 2.500l4 .5l1 3.500c2-2 4-4 6-5.500zM276.7 242.5c3-4 8-6 10.500-4.500l-2 3.500l2.500 2.500l-4 .5l-1 3.500c-2-2-4-4-6-5.500z" fill="#c470b8" stroke="#9a3c90" stroke-width="0.600"/><circle cx="276.7" cy="242.5" r="1.800" fill="#9a3c90"/>
</g>
<g transform="translate(328.7 251) scale(1.120) translate(-328.7 -251)">
<circle cx="328.7" cy="252" r="7.500" fill="none" stroke="#246c4a" stroke-width="4.800"/>
<circle cx="335.9" cy="254.2" r="1.200" fill="#f4d040"/>
<circle cx="332.2" cy="258.6" r="1.200" fill="#e84a5a"/>
<circle cx="326.5" cy="259.2" r="1.200" fill="#f0a0c0"/>
<circle cx="322.1" cy="255.5" r="1.200" fill="#f4f4f4"/>
<circle cx="321.5" cy="249.8" r="1.200" fill="#f4d040"/>
<circle cx="325.2" cy="245.4" r="1.200" fill="#e84a5a"/>
<circle cx="330.9" cy="244.8" r="1.200" fill="#c890e0"/>
<circle cx="335.3" cy="248.5" r="1.200" fill="#f4f4f4"/>
<rect x="327.40" y="249.50" width="2.60" height="7.00" fill="#f4f4f4" stroke="#aaa" stroke-width="0.4" />
<path d="M328.7 245.5c1.500 1.500 1.500 3 0 4c-1.500-1-1.500-2.500 0-4z" fill="#e8281c"/>
<path d="M328.7 242.5c-3-4-8-6-10.500-4.500l2 3.500l-2.500 2.500l4 .5l1 3.500c2-2 4-4 6-5.500zM328.7 242.5c3-4 8-6 10.500-4.500l-2 3.500l2.500 2.500l-4 .5l-1 3.500c-2-2-4-4-6-5.500z" fill="#f8b0b0" stroke="#e87880" stroke-width="0.600"/><circle cx="328.7" cy="242.5" r="1.800" fill="#e87880"/>
</g>
<g transform="translate(539.3 251) scale(1.120) translate(-539.3 -251)">
<circle cx="539.3" cy="252" r="7.500" fill="none" stroke="#246c4a" stroke-width="4.800"/>
<circle cx="546.5" cy="254.2" r="1.200" fill="#f4d040"/>
<circle cx="542.8" cy="258.6" r="1.200" fill="#e84a5a"/>
<circle cx="537.1" cy="259.2" r="1.200" fill="#f0a0c0"/>
<circle cx="532.7" cy="255.5" r="1.200" fill="#f4f4f4"/>
<circle cx="532.1" cy="249.8" r="1.200" fill="#f4d040"/>
<circle cx="535.8" cy="245.4" r="1.200" fill="#e84a5a"/>
<circle cx="541.5" cy="244.8" r="1.200" fill="#c890e0"/>
<circle cx="545.9" cy="248.5" r="1.200" fill="#f4f4f4"/>
<rect x="538.00" y="249.50" width="2.60" height="7.00" fill="#f4f4f4" stroke="#aaa" stroke-width="0.4" />
<path d="M539.3 245.5c1.500 1.500 1.500 3 0 4c-1.500-1-1.500-2.500 0-4z" fill="#e8281c"/>
<path d="M539.3 242.5c-3-4-8-6-10.500-4.500l2 3.500l-2.500 2.500l4 .5l1 3.500c2-2 4-4 6-5.500zM539.3 242.5c3-4 8-6 10.500-4.500l-2 3.500l2.500 2.500l-4 .5l-1 3.500c-2-2-4-4-6-5.500z" fill="#f8b0b0" stroke="#e87880" stroke-width="0.600"/><circle cx="539.3" cy="242.5" r="1.800" fill="#e87880"/>
</g>
<g transform="translate(487.3 251) scale(1.120) translate(-487.3 -251)">
<circle cx="487.3" cy="252" r="7.500" fill="none" stroke="#246c4a" stroke-width="4.800"/>
<circle cx="494.5" cy="254.2" r="1.200" fill="#f4d040"/>
<circle cx="490.8" cy="258.6" r="1.200" fill="#e84a5a"/>
<circle cx="485.1" cy="259.2" r="1.200" fill="#f0a0c0"/>
<circle cx="480.7" cy="255.5" r="1.200" fill="#f4f4f4"/>
<circle cx="480.1" cy="249.8" r="1.200" fill="#f4d040"/>
<circle cx="483.8" cy="245.4" r="1.200" fill="#e84a5a"/>
<circle cx="489.5" cy="244.8" r="1.200" fill="#c890e0"/>
<circle cx="493.9" cy="248.5" r="1.200" fill="#f4f4f4"/>
<rect x="486.00" y="249.50" width="2.60" height="7.00" fill="#f4f4f4" stroke="#aaa" stroke-width="0.4" />
<path d="M487.3 245.5c1.500 1.500 1.500 3 0 4c-1.500-1-1.500-2.500 0-4z" fill="#e8281c"/>
<path d="M487.3 242.5c-3-4-8-6-10.500-4.500l2 3.500l-2.500 2.500l4 .5l1 3.500c2-2 4-4 6-5.500zM487.3 242.5c3-4 8-6 10.500-4.500l-2 3.500l2.500 2.500l-4 .5l-1 3.500c-2-2-4-4-6-5.500z" fill="#c470b8" stroke="#9a3c90" stroke-width="0.600"/><circle cx="487.3" cy="242.5" r="1.800" fill="#9a3c90"/>
</g>
<rect x="234.00" y="358.30" width="374.60" height="200.00" fill="url(#pMag)" />
<g transform="">
<ellipse cx="290.0" cy="489.6" rx="45.8" ry="36.2" fill="#4c9078"/>
<ellipse cx="345.5" cy="530.7" rx="21.7" ry="16.9" fill="#4c9078"/>
<path d="M291.2 489.6 Q296.6 482.1 303.3 474.4 Q298.9 463.0 308.4 455.2 Q298.8 448.3 302.4 436.5 Q293.8 426.7 287.6 416.8 Q282.3 427.2 274.7 437.8 Q279.5 449.3 270.6 457.0 Q280.9 463.8 277.6 475.7 Q285.1 482.6 291.2 489.6Z" fill="url(#pLeafL)" stroke="#1f6a52" stroke-width="0.9" stroke-linejoin="round"/>
<path d="M290.9 484.5 L303.3 474.4 L301.9 468.9 L302.4 463.9 L290.5 475.1 Z M290.0 465.6 L308.4 455.2 L304.5 451.4 L302.1 447.1 L289.5 456.1 Z M289.1 446.6 L302.4 436.5 L298.3 431.6 L294.4 426.6 L288.3 431.7 Z M290.9 484.5 L277.6 475.7 L278.4 470.1 L277.5 465.1 L290.5 475.1 Z M290.0 465.6 L270.6 457.0 L274.2 452.9 L276.1 448.4 L289.5 456.1 Z M289.1 446.6 L274.7 437.8 L278.4 432.6 L281.7 427.3 L288.3 431.7 Z " fill="#4c9078"/>
<path d="M291.2 489.6 L287.6 416.8 M290.9 484.5 L303.3 474.4 M290.9 484.5 L277.6 475.7 M290.0 465.6 L308.4 455.2 M290.0 465.6 L270.6 457.0 M289.1 446.6 L302.4 436.5 M289.1 446.6 L274.7 437.8" fill="none" stroke="#1f6a52" stroke-width="0.700"/>
<path d="M280.3 484.8 Q280.6 476.6 281.8 467.6 Q272.7 461.8 276.0 451.2 Q265.4 451.4 262.2 441.0 Q250.8 438.6 241.2 434.9 Q242.6 445.1 242.2 456.6 Q251.5 462.3 248.7 472.5 Q259.8 471.9 263.3 482.1 Q272.3 483.0 280.3 484.8Z" fill="url(#pLeafL)" stroke="#1f6a52" stroke-width="0.9" stroke-linejoin="round"/>
<path d="M277.6 481.3 L281.8 467.6 L278.0 464.4 L275.8 460.6 L272.5 474.8 Z M267.4 468.3 L276.0 451.2 L271.1 450.6 L267.2 448.7 L262.3 461.8 Z M257.3 455.3 L262.2 441.0 L256.6 439.7 L251.3 438.3 L249.2 445.1 Z M277.6 481.3 L263.3 482.1 L261.1 477.6 L257.9 474.6 L272.5 474.8 Z M267.4 468.3 L248.7 472.5 L249.3 467.7 L248.5 463.4 L262.3 461.8 Z M257.3 455.3 L242.2 456.6 L242.3 450.9 L242.1 445.4 L249.2 445.1 Z " fill="#4c9078"/>
<path d="M280.3 484.8 L241.2 434.9 M277.6 481.3 L281.8 467.6 M277.6 481.3 L263.3 482.1 M267.4 468.3 L276.0 451.2 M267.4 468.3 L248.7 472.5 M257.3 455.3 L262.2 441.0 M257.3 455.3 L242.2 456.6" fill="none" stroke="#1f6a52" stroke-width="0.700"/>
<path d="M275.5 489.6 Q271.1 484.0 267.0 477.2 Q258.3 479.2 254.5 469.9 Q248.1 477.0 240.5 472.2 Q232.3 477.9 224.3 481.7 Q230.7 487.6 236.8 495.6 Q245.6 493.4 249.5 502.0 Q255.9 494.4 263.6 498.9 Q269.6 493.7 275.5 489.6Z" fill="url(#pLeafL)" stroke="#1f6a52" stroke-width="0.9" stroke-linejoin="round"/>
<path d="M271.9 489.1 L267.0 477.2 L262.9 477.5 L259.5 476.4 L265.3 488.0 Z M258.6 487.0 L254.5 469.9 L251.2 472.7 L247.8 474.0 L252.0 486.0 Z M245.3 484.9 L240.5 472.2 L236.4 474.9 L232.3 477.4 L234.8 483.3 Z M271.9 489.1 L263.6 498.9 L259.8 497.4 L256.2 497.4 L265.3 488.0 Z M258.6 487.0 L249.5 502.0 L247.2 498.4 L244.4 496.1 L252.0 486.0 Z M245.3 484.9 L236.8 495.6 L233.8 491.8 L230.7 488.1 L234.8 483.3 Z " fill="#4c9078"/>
<path d="M275.5 489.6 L224.3 481.7 M271.9 489.1 L267.0 477.2 M271.9 489.1 L263.6 498.9 M258.6 487.0 L254.5 469.9 M258.6 487.0 L249.5 502.0 M245.3 484.9 L240.5 472.2 M245.3 484.9 L236.8 495.6" fill="none" stroke="#1f6a52" stroke-width="0.700"/>
<path d="M268.3 506.5 Q263.5 506.2 258.2 505.3 Q255.3 510.5 249.0 508.4 Q249.6 514.7 243.8 516.4 Q242.9 523.1 241.2 528.7 Q247.1 528.2 253.8 528.6 Q256.6 523.2 262.7 525.1 Q261.8 518.5 267.5 516.6 Q267.6 511.3 268.3 506.5Z" fill="url(#pLeafL)" stroke="#1f6a52" stroke-width="0.9" stroke-linejoin="round"/>
<path d="M266.4 508.1 L258.2 505.3 L256.5 507.5 L254.4 508.7 L262.9 511.0 Z M259.3 513.9 L249.0 508.4 L248.9 511.2 L248.0 513.5 L255.8 516.7 Z M252.3 519.6 L243.8 516.4 L243.3 519.7 L242.7 522.8 L246.8 524.2 Z M266.4 508.1 L267.5 516.6 L265.1 517.9 L263.4 519.7 L262.9 511.0 Z M259.3 513.9 L262.7 525.1 L259.9 524.6 L257.5 525.0 L255.8 516.7 Z M252.3 519.6 L253.8 528.6 L250.5 528.5 L247.3 528.4 L246.8 524.2 Z " fill="#4c9078"/>
<path d="M268.3 506.5 L241.2 528.7 M266.4 508.1 L258.2 505.3 M266.4 508.1 L267.5 516.6 M259.3 513.9 L249.0 508.4 M259.3 513.9 L262.7 525.1 M252.3 519.6 L243.8 516.4 M252.3 519.6 L253.8 528.6" fill="none" stroke="#1f6a52" stroke-width="0.700"/>
<path d="M302.0 484.8 Q309.6 482.8 318.2 481.5 Q320.4 471.8 331.2 471.8 Q327.3 462.4 335.6 456.6 Q333.8 445.8 333.9 436.1 Q325.0 440.0 314.4 442.8 Q312.5 452.7 302.2 452.9 Q306.6 462.8 298.6 468.6 Q300.8 477.1 302.0 484.8Z" fill="url(#pLeafL)" stroke="#1f6a52" stroke-width="0.9" stroke-linejoin="round"/>
<path d="M304.3 481.4 L318.2 481.5 L319.9 477.2 L322.6 474.2 L308.4 475.1 Z M312.6 468.7 L331.2 471.8 L330.0 467.3 L330.3 463.3 L316.7 462.4 Z M320.8 456.0 L335.6 456.6 L334.8 451.3 L334.3 446.1 L327.4 446.1 Z M304.3 481.4 L298.6 468.6 L301.8 465.5 L303.5 461.8 L308.4 475.1 Z M312.6 468.7 L302.2 452.9 L306.8 452.2 L310.4 450.3 L316.7 462.4 Z M320.8 456.0 L314.4 442.8 L319.6 441.3 L324.6 439.7 L327.4 446.1 Z " fill="#4c9078"/>
<path d="M302.0 484.8 L333.9 436.1 M304.3 481.4 L318.2 481.5 M304.3 481.4 L298.6 468.6 M312.6 468.7 L331.2 471.8 M312.6 468.7 L302.2 452.9 M320.8 456.0 L335.6 456.6 M320.8 456.0 L314.4 442.8" fill="none" stroke="#1f6a52" stroke-width="0.700"/>
<path d="M311.7 488.4 Q316.6 492.3 321.7 497.2 Q327.8 493.1 333.2 500.3 Q336.2 492.3 343.4 494.5 Q348.1 487.2 353.2 481.7 Q346.7 478.1 339.8 472.6 Q333.7 477.0 328.4 470.4 Q325.5 478.9 318.3 476.9 Q315.1 483.2 311.7 488.4Z" fill="url(#pLeafL)" stroke="#1f6a52" stroke-width="0.9" stroke-linejoin="round"/>
<path d="M314.6 488.0 L321.7 497.2 L324.7 495.9 L327.6 495.9 L320.0 487.1 Z M325.4 486.2 L333.2 500.3 L335.0 496.9 L337.2 494.8 L330.8 485.3 Z M336.2 484.4 L343.4 494.5 L345.8 490.9 L348.2 487.6 L344.7 483.1 Z M314.6 488.0 L318.3 476.9 L321.7 477.3 L324.4 476.3 L320.0 487.1 Z M325.4 486.2 L328.4 470.4 L331.1 473.0 L333.9 474.2 L330.8 485.3 Z M336.2 484.4 L339.8 472.6 L343.2 475.2 L346.6 477.6 L344.7 483.1 Z " fill="#4c9078"/>
<path d="M311.7 488.4 L353.2 481.7 M314.6 488.0 L321.7 497.2 M314.6 488.0 L318.3 476.9 M325.4 486.2 L333.2 500.3 M325.4 486.2 L328.4 470.4 M336.2 484.4 L343.4 494.5 M336.2 484.4 L339.8 472.6" fill="none" stroke="#1f6a52" stroke-width="0.700"/>
<path d="M340.7 547.5 Q347.2 543.7 354.8 540.2 Q354.7 530.3 364.7 527.6 Q359.1 519.6 365.4 512.0 Q361.5 502.0 359.5 492.8 Q352.2 498.8 343.0 504.2 Q343.3 514.2 334.0 517.1 Q340.1 525.3 334.0 533.0 Q337.9 540.5 340.7 547.5Z" fill="url(#pLeafL)" stroke="#1f6a52" stroke-width="0.9" stroke-linejoin="round"/>
<path d="M342.0 543.7 L354.8 540.2 L355.4 535.7 L357.2 532.1 L344.4 536.6 Z M346.9 529.5 L364.7 527.6 L362.6 523.6 L362.1 519.7 L349.3 522.4 Z M351.8 515.2 L365.4 512.0 L363.6 507.0 L362.0 502.2 L355.6 504.0 Z M342.0 543.7 L334.0 533.0 L336.3 529.1 L337.1 525.2 L344.4 536.6 Z M346.9 529.5 L334.0 517.1 L338.1 515.2 L340.9 512.4 L349.3 522.4 Z M351.8 515.2 L343.0 504.2 L347.5 501.5 L351.7 498.7 L355.6 504.0 Z " fill="#4c9078"/>
<path d="M340.7 547.5 L359.5 492.8 M342.0 543.7 L354.8 540.2 M342.0 543.7 L334.0 533.0 M346.9 529.5 L364.7 527.6 M346.9 529.5 L334.0 517.1 M351.8 515.2 L365.4 512.0 M351.8 515.2 L343.0 504.2" fill="none" stroke="#1f6a52" stroke-width="0.700"/>
<path d="M333.4 546.3 Q341.0 549.3 348.9 553.5 Q357.6 547.3 366.3 553.8 Q370.0 544.1 380.8 544.7 Q387.2 535.2 394.2 527.8 Q384.2 525.5 373.6 521.2 Q365.0 527.7 356.5 521.8 Q353.0 532.0 342.3 531.8 Q338.0 539.6 333.4 546.3Z" fill="url(#pLeafL)" stroke="#1f6a52" stroke-width="0.9" stroke-linejoin="round"/>
<path d="M337.7 545.0 L348.9 553.5 L353.3 551.2 L357.6 550.5 L345.6 542.6 Z M353.5 540.2 L366.3 553.8 L368.6 549.6 L371.8 546.7 L361.4 537.8 Z M369.3 535.4 L380.8 544.7 L384.0 540.1 L387.4 535.7 L381.8 531.6 Z M337.7 545.0 L342.3 531.8 L347.2 531.2 L351.2 529.4 L345.6 542.6 Z M353.5 540.2 L356.5 521.8 L360.7 524.0 L365.0 524.6 L361.4 537.8 Z M369.3 535.4 L373.6 521.2 L378.9 523.2 L384.1 525.0 L381.8 531.6 Z " fill="#4c9078"/>
<path d="M333.4 546.3 L394.2 527.8 M337.7 545.0 L348.9 553.5 M337.7 545.0 L342.3 531.8 M353.5 540.2 L366.3 553.8 M353.5 540.2 L356.5 521.8 M369.3 535.4 L380.8 544.7 M369.3 535.4 L373.6 521.2" fill="none" stroke="#1f6a52" stroke-width="0.700"/>
<path d="M299.6 535.5 Q298.4 539.9 296.5 544.9 Q301.2 546.8 297.8 552.9 Q304.2 551.5 304.8 556.6 Q311.2 556.4 316.5 557.2 Q317.1 551.9 318.8 545.7 Q314.0 543.8 317.0 538.0 Q310.3 539.8 309.5 534.8 Q304.2 535.4 299.6 535.5Z" fill="url(#pLeafL)" stroke="#1f6a52" stroke-width="0.9" stroke-linejoin="round"/>
<path d="M300.8 537.0 L296.5 544.9 L298.3 546.1 L299.2 547.9 L303.0 539.8 Z M305.2 542.6 L297.8 552.9 L300.6 552.6 L302.7 553.1 L307.4 545.5 Z M309.6 548.3 L304.8 556.6 L307.9 556.6 L310.9 556.7 L313.1 552.7 Z M300.8 537.0 L309.5 534.8 L310.3 536.8 L311.8 538.1 L303.0 539.8 Z M305.2 542.6 L317.0 538.0 L316.0 540.7 L316.0 542.8 L307.4 545.5 Z M309.6 548.3 L318.8 545.7 L318.0 548.7 L317.4 551.7 L313.1 552.7 Z " fill="#4c9078"/>
<path d="M299.6 535.5 L316.5 557.2 M300.8 537.0 L296.5 544.9 M300.8 537.0 L309.5 534.8 M305.2 542.6 L297.8 552.9 M305.2 542.6 L317.0 538.0 M309.6 548.3 L304.8 556.6 M309.6 548.3 L318.8 545.7" fill="none" stroke="#1f6a52" stroke-width="0.700"/>
<ellipse cx="294.8" cy="506.5" rx="39.8" ry="35.0" fill="#d60a1a"/>
<path d="M255.0 541.5L282.7 484.8" stroke="url(#pCinn)" stroke-width="13.5"/>
<path d="M255.0 541.5L282.7 484.8" stroke="#9c6838" stroke-width="13.5" stroke-opacity="0.450"/>
<path d="M275.5 530.7L331.0 511.4" stroke="url(#pCinn)" stroke-width="2.5"/>
<path d="M275.5 530.7L331.0 511.4" stroke="#9c6838" stroke-width="2.5" stroke-opacity="0.450"/>
<circle cx="309.3" cy="519.8" r="7.9" fill="#bc0c1a" stroke="#8a0c14" stroke-width="0.700"/>
<circle cx="292.4" cy="506.5" r="7.9" fill="#bc0c1a" stroke="#8a0c14" stroke-width="0.700"/>
<circle cx="275.5" cy="523.4" r="7.9" fill="#bc0c1a" stroke="#8a0c14" stroke-width="0.700"/>
<circle cx="326.2" cy="523.4" r="7.9" fill="#bc0c1a" stroke="#8a0c14" stroke-width="0.700"/>
<circle cx="276.2" cy="470.3" r="7.9" fill="#bc0c1a" stroke="#8a0c14" stroke-width="0.700"/>
<circle cx="251.4" cy="500.5" r="7.9" fill="#bc0c1a" stroke="#8a0c14" stroke-width="0.700"/>
<circle cx="312.9" cy="488.4" r="7.9" fill="#bc0c1a" stroke="#8a0c14" stroke-width="0.700"/>
<circle cx="303.3" cy="490.8" r="7.9" fill="#bc0c1a" stroke="#8a0c14" stroke-width="0.700"/>
<circle cx="292.4" cy="542.7" r="7.9" fill="#bc0c1a" stroke="#8a0c14" stroke-width="0.700"/>
<circle cx="333.4" cy="530.7" r="7.9" fill="#bc0c1a" stroke="#8a0c14" stroke-width="0.700"/>
<circle cx="256.2" cy="516.2" r="7.9" fill="#bc0c1a" stroke="#8a0c14" stroke-width="0.700"/>
<circle cx="321.4" cy="511.4" r="7.9" fill="#bc0c1a" stroke="#8a0c14" stroke-width="0.700"/>
<circle cx="286.8" cy="461.9" r="7.9" fill="url(#pBerryD)" stroke="#b81c14" stroke-width="0.700"/>
<circle cx="266.6" cy="469.1" r="7.9" fill="url(#pBerryS)" stroke="#c23a20" stroke-width="0.700"/>
<circle cx="286.8" cy="478.3" r="7.9" fill="url(#pBerryS)" stroke="#c23a20" stroke-width="0.700"/>
<circle cx="302.8" cy="480.0" r="7.9" fill="url(#pBerryD)" stroke="#b81c14" stroke-width="0.700"/>
<circle cx="316.0" cy="473.9" r="7.9" fill="url(#pBerryS)" stroke="#c23a20" stroke-width="0.700"/>
<circle cx="256.2" cy="488.4" r="7.9" fill="#e8381e" stroke="#b81c14" stroke-width="0.700"/>
<circle cx="267.5" cy="487.9" r="7.9" fill="url(#pBerryD)" stroke="#b81c14" stroke-width="0.700"/>
<circle cx="292.4" cy="487.2" r="7.9" fill="#e8381e" stroke="#b81c14" stroke-width="0.700"/>
<circle cx="283.9" cy="495.7" r="7.9" fill="#e8381e" stroke="#b81c14" stroke-width="0.700"/>
<circle cx="297.9" cy="502.4" r="7.9" fill="url(#pBerryS)" stroke="#c23a20" stroke-width="0.700"/>
<circle cx="322.6" cy="496.9" r="7.9" fill="#e8381e" stroke="#b81c14" stroke-width="0.700"/>
<circle cx="310.5" cy="505.3" r="7.9" fill="#e8381e" stroke="#b81c14" stroke-width="0.700"/>
<circle cx="339.9" cy="505.3" r="7.9" fill="url(#pBerryS)" stroke="#c23a20" stroke-width="0.700"/>
<circle cx="261.5" cy="502.9" r="7.9" fill="url(#pBerryS)" stroke="#c23a20" stroke-width="0.700"/>
<circle cx="279.6" cy="513.8" r="7.9" fill="url(#pBerryD)" stroke="#b81c14" stroke-width="0.700"/>
<circle cx="261.7" cy="515.0" r="7.9" fill="#e8381e" stroke="#b81c14" stroke-width="0.700"/>
<circle cx="297.9" cy="517.4" r="7.9" fill="#e8381e" stroke="#b81c14" stroke-width="0.700"/>
<circle cx="319.7" cy="514.2" r="7.9" fill="url(#pBerryD)" stroke="#b81c14" stroke-width="0.700"/>
<circle cx="334.1" cy="519.8" r="7.9" fill="#e8381e" stroke="#b81c14" stroke-width="0.700"/>
<circle cx="283.9" cy="533.1" r="7.9" fill="#e8381e" stroke="#b81c14" stroke-width="0.700"/>
<circle cx="296.7" cy="529.4" r="7.9" fill="url(#pBerryS)" stroke="#c23a20" stroke-width="0.700"/>
<circle cx="319.7" cy="529.9" r="7.9" fill="url(#pBerryS)" stroke="#c23a20" stroke-width="0.700"/>
<circle cx="308.1" cy="535.5" r="7.9" fill="#e8381e" stroke="#b81c14" stroke-width="0.700"/>
<circle cx="271.4" cy="541.0" r="7.9" fill="url(#pBerryS)" stroke="#c23a20" stroke-width="0.700"/>
<circle cx="331.7" cy="541.0" r="7.9" fill="url(#pBerryD)" stroke="#b81c14" stroke-width="0.700"/>
</g>
<g transform="translate(816.0 0) scale(-1 1)">
<ellipse cx="290.0" cy="489.6" rx="45.8" ry="36.2" fill="#4c9078"/>
<ellipse cx="345.5" cy="530.7" rx="21.7" ry="16.9" fill="#4c9078"/>
<path d="M291.2 489.6 Q296.6 482.1 303.3 474.4 Q298.9 463.0 308.4 455.2 Q298.8 448.3 302.4 436.5 Q293.8 426.7 287.6 416.8 Q282.3 427.2 274.7 437.8 Q279.5 449.3 270.6 457.0 Q280.9 463.8 277.6 475.7 Q285.1 482.6 291.2 489.6Z" fill="url(#pLeafL)" stroke="#1f6a52" stroke-width="0.9" stroke-linejoin="round"/>
<path d="M290.9 484.5 L303.3 474.4 L301.9 468.9 L302.4 463.9 L290.5 475.1 Z M290.0 465.6 L308.4 455.2 L304.5 451.4 L302.1 447.1 L289.5 456.1 Z M289.1 446.6 L302.4 436.5 L298.3 431.6 L294.4 426.6 L288.3 431.7 Z M290.9 484.5 L277.6 475.7 L278.4 470.1 L277.5 465.1 L290.5 475.1 Z M290.0 465.6 L270.6 457.0 L274.2 452.9 L276.1 448.4 L289.5 456.1 Z M289.1 446.6 L274.7 437.8 L278.4 432.6 L281.7 427.3 L288.3 431.7 Z " fill="#4c9078"/>
<path d="M291.2 489.6 L287.6 416.8 M290.9 484.5 L303.3 474.4 M290.9 484.5 L277.6 475.7 M290.0 465.6 L308.4 455.2 M290.0 465.6 L270.6 457.0 M289.1 446.6 L302.4 436.5 M289.1 446.6 L274.7 437.8" fill="none" stroke="#1f6a52" stroke-width="0.700"/>
<path d="M280.3 484.8 Q280.6 476.6 281.8 467.6 Q272.7 461.8 276.0 451.2 Q265.4 451.4 262.2 441.0 Q250.8 438.6 241.2 434.9 Q242.6 445.1 242.2 456.6 Q251.5 462.3 248.7 472.5 Q259.8 471.9 263.3 482.1 Q272.3 483.0 280.3 484.8Z" fill="url(#pLeafL)" stroke="#1f6a52" stroke-width="0.9" stroke-linejoin="round"/>
<path d="M277.6 481.3 L281.8 467.6 L278.0 464.4 L275.8 460.6 L272.5 474.8 Z M267.4 468.3 L276.0 451.2 L271.1 450.6 L267.2 448.7 L262.3 461.8 Z M257.3 455.3 L262.2 441.0 L256.6 439.7 L251.3 438.3 L249.2 445.1 Z M277.6 481.3 L263.3 482.1 L261.1 477.6 L257.9 474.6 L272.5 474.8 Z M267.4 468.3 L248.7 472.5 L249.3 467.7 L248.5 463.4 L262.3 461.8 Z M257.3 455.3 L242.2 456.6 L242.3 450.9 L242.1 445.4 L249.2 445.1 Z " fill="#4c9078"/>
<path d="M280.3 484.8 L241.2 434.9 M277.6 481.3 L281.8 467.6 M277.6 481.3 L263.3 482.1 M267.4 468.3 L276.0 451.2 M267.4 468.3 L248.7 472.5 M257.3 455.3 L262.2 441.0 M257.3 455.3 L242.2 456.6" fill="none" stroke="#1f6a52" stroke-width="0.700"/>
<path d="M275.5 489.6 Q271.1 484.0 267.0 477.2 Q258.3 479.2 254.5 469.9 Q248.1 477.0 240.5 472.2 Q232.3 477.9 224.3 481.7 Q230.7 487.6 236.8 495.6 Q245.6 493.4 249.5 502.0 Q255.9 494.4 263.6 498.9 Q269.6 493.7 275.5 489.6Z" fill="url(#pLeafL)" stroke="#1f6a52" stroke-width="0.9" stroke-linejoin="round"/>
<path d="M271.9 489.1 L267.0 477.2 L262.9 477.5 L259.5 476.4 L265.3 488.0 Z M258.6 487.0 L254.5 469.9 L251.2 472.7 L247.8 474.0 L252.0 486.0 Z M245.3 484.9 L240.5 472.2 L236.4 474.9 L232.3 477.4 L234.8 483.3 Z M271.9 489.1 L263.6 498.9 L259.8 497.4 L256.2 497.4 L265.3 488.0 Z M258.6 487.0 L249.5 502.0 L247.2 498.4 L244.4 496.1 L252.0 486.0 Z M245.3 484.9 L236.8 495.6 L233.8 491.8 L230.7 488.1 L234.8 483.3 Z " fill="#4c9078"/>
<path d="M275.5 489.6 L224.3 481.7 M271.9 489.1 L267.0 477.2 M271.9 489.1 L263.6 498.9 M258.6 487.0 L254.5 469.9 M258.6 487.0 L249.5 502.0 M245.3 484.9 L240.5 472.2 M245.3 484.9 L236.8 495.6" fill="none" stroke="#1f6a52" stroke-width="0.700"/>
<path d="M268.3 506.5 Q263.5 506.2 258.2 505.3 Q255.3 510.5 249.0 508.4 Q249.6 514.7 243.8 516.4 Q242.9 523.1 241.2 528.7 Q247.1 528.2 253.8 528.6 Q256.6 523.2 262.7 525.1 Q261.8 518.5 267.5 516.6 Q267.6 511.3 268.3 506.5Z" fill="url(#pLeafL)" stroke="#1f6a52" stroke-width="0.9" stroke-linejoin="round"/>
<path d="M266.4 508.1 L258.2 505.3 L256.5 507.5 L254.4 508.7 L262.9 511.0 Z M259.3 513.9 L249.0 508.4 L248.9 511.2 L248.0 513.5 L255.8 516.7 Z M252.3 519.6 L243.8 516.4 L243.3 519.7 L242.7 522.8 L246.8 524.2 Z M266.4 508.1 L267.5 516.6 L265.1 517.9 L263.4 519.7 L262.9 511.0 Z M259.3 513.9 L262.7 525.1 L259.9 524.6 L257.5 525.0 L255.8 516.7 Z M252.3 519.6 L253.8 528.6 L250.5 528.5 L247.3 528.4 L246.8 524.2 Z " fill="#4c9078"/>
<path d="M268.3 506.5 L241.2 528.7 M266.4 508.1 L258.2 505.3 M266.4 508.1 L267.5 516.6 M259.3 513.9 L249.0 508.4 M259.3 513.9 L262.7 525.1 M252.3 519.6 L243.8 516.4 M252.3 519.6 L253.8 528.6" fill="none" stroke="#1f6a52" stroke-width="0.700"/>
<path d="M302.0 484.8 Q309.6 482.8 318.2 481.5 Q320.4 471.8 331.2 471.8 Q327.3 462.4 335.6 456.6 Q333.8 445.8 333.9 436.1 Q325.0 440.0 314.4 442.8 Q312.5 452.7 302.2 452.9 Q306.6 462.8 298.6 468.6 Q300.8 477.1 302.0 484.8Z" fill="url(#pLeafL)" stroke="#1f6a52" stroke-width="0.9" stroke-linejoin="round"/>
<path d="M304.3 481.4 L318.2 481.5 L319.9 477.2 L322.6 474.2 L308.4 475.1 Z M312.6 468.7 L331.2 471.8 L330.0 467.3 L330.3 463.3 L316.7 462.4 Z M320.8 456.0 L335.6 456.6 L334.8 451.3 L334.3 446.1 L327.4 446.1 Z M304.3 481.4 L298.6 468.6 L301.8 465.5 L303.5 461.8 L308.4 475.1 Z M312.6 468.7 L302.2 452.9 L306.8 452.2 L310.4 450.3 L316.7 462.4 Z M320.8 456.0 L314.4 442.8 L319.6 441.3 L324.6 439.7 L327.4 446.1 Z " fill="#4c9078"/>
<path d="M302.0 484.8 L333.9 436.1 M304.3 481.4 L318.2 481.5 M304.3 481.4 L298.6 468.6 M312.6 468.7 L331.2 471.8 M312.6 468.7 L302.2 452.9 M320.8 456.0 L335.6 456.6 M320.8 456.0 L314.4 442.8" fill="none" stroke="#1f6a52" stroke-width="0.700"/>
<path d="M311.7 488.4 Q316.6 492.3 321.7 497.2 Q327.8 493.1 333.2 500.3 Q336.2 492.3 343.4 494.5 Q348.1 487.2 353.2 481.7 Q346.7 478.1 339.8 472.6 Q333.7 477.0 328.4 470.4 Q325.5 478.9 318.3 476.9 Q315.1 483.2 311.7 488.4Z" fill="url(#pLeafL)" stroke="#1f6a52" stroke-width="0.9" stroke-linejoin="round"/>
<path d="M314.6 488.0 L321.7 497.2 L324.7 495.9 L327.6 495.9 L320.0 487.1 Z M325.4 486.2 L333.2 500.3 L335.0 496.9 L337.2 494.8 L330.8 485.3 Z M336.2 484.4 L343.4 494.5 L345.8 490.9 L348.2 487.6 L344.7 483.1 Z M314.6 488.0 L318.3 476.9 L321.7 477.3 L324.4 476.3 L320.0 487.1 Z M325.4 486.2 L328.4 470.4 L331.1 473.0 L333.9 474.2 L330.8 485.3 Z M336.2 484.4 L339.8 472.6 L343.2 475.2 L346.6 477.6 L344.7 483.1 Z " fill="#4c9078"/>
<path d="M311.7 488.4 L353.2 481.7 M314.6 488.0 L321.7 497.2 M314.6 488.0 L318.3 476.9 M325.4 486.2 L333.2 500.3 M325.4 486.2 L328.4 470.4 M336.2 484.4 L343.4 494.5 M336.2 484.4 L339.8 472.6" fill="none" stroke="#1f6a52" stroke-width="0.700"/>
<path d="M340.7 547.5 Q347.2 543.7 354.8 540.2 Q354.7 530.3 364.7 527.6 Q359.1 519.6 365.4 512.0 Q361.5 502.0 359.5 492.8 Q352.2 498.8 343.0 504.2 Q343.3 514.2 334.0 517.1 Q340.1 525.3 334.0 533.0 Q337.9 540.5 340.7 547.5Z" fill="url(#pLeafL)" stroke="#1f6a52" stroke-width="0.9" stroke-linejoin="round"/>
<path d="M342.0 543.7 L354.8 540.2 L355.4 535.7 L357.2 532.1 L344.4 536.6 Z M346.9 529.5 L364.7 527.6 L362.6 523.6 L362.1 519.7 L349.3 522.4 Z M351.8 515.2 L365.4 512.0 L363.6 507.0 L362.0 502.2 L355.6 504.0 Z M342.0 543.7 L334.0 533.0 L336.3 529.1 L337.1 525.2 L344.4 536.6 Z M346.9 529.5 L334.0 517.1 L338.1 515.2 L340.9 512.4 L349.3 522.4 Z M351.8 515.2 L343.0 504.2 L347.5 501.5 L351.7 498.7 L355.6 504.0 Z " fill="#4c9078"/>
<path d="M340.7 547.5 L359.5 492.8 M342.0 543.7 L354.8 540.2 M342.0 543.7 L334.0 533.0 M346.9 529.5 L364.7 527.6 M346.9 529.5 L334.0 517.1 M351.8 515.2 L365.4 512.0 M351.8 515.2 L343.0 504.2" fill="none" stroke="#1f6a52" stroke-width="0.700"/>
<path d="M333.4 546.3 Q341.0 549.3 348.9 553.5 Q357.6 547.3 366.3 553.8 Q370.0 544.1 380.8 544.7 Q387.2 535.2 394.2 527.8 Q384.2 525.5 373.6 521.2 Q365.0 527.7 356.5 521.8 Q353.0 532.0 342.3 531.8 Q338.0 539.6 333.4 546.3Z" fill="url(#pLeafL)" stroke="#1f6a52" stroke-width="0.9" stroke-linejoin="round"/>
<path d="M337.7 545.0 L348.9 553.5 L353.3 551.2 L357.6 550.5 L345.6 542.6 Z M353.5 540.2 L366.3 553.8 L368.6 549.6 L371.8 546.7 L361.4 537.8 Z M369.3 535.4 L380.8 544.7 L384.0 540.1 L387.4 535.7 L381.8 531.6 Z M337.7 545.0 L342.3 531.8 L347.2 531.2 L351.2 529.4 L345.6 542.6 Z M353.5 540.2 L356.5 521.8 L360.7 524.0 L365.0 524.6 L361.4 537.8 Z M369.3 535.4 L373.6 521.2 L378.9 523.2 L384.1 525.0 L381.8 531.6 Z " fill="#4c9078"/>
<path d="M333.4 546.3 L394.2 527.8 M337.7 545.0 L348.9 553.5 M337.7 545.0 L342.3 531.8 M353.5 540.2 L366.3 553.8 M353.5 540.2 L356.5 521.8 M369.3 535.4 L380.8 544.7 M369.3 535.4 L373.6 521.2" fill="none" stroke="#1f6a52" stroke-width="0.700"/>
<path d="M299.6 535.5 Q298.4 539.9 296.5 544.9 Q301.2 546.8 297.8 552.9 Q304.2 551.5 304.8 556.6 Q311.2 556.4 316.5 557.2 Q317.1 551.9 318.8 545.7 Q314.0 543.8 317.0 538.0 Q310.3 539.8 309.5 534.8 Q304.2 535.4 299.6 535.5Z" fill="url(#pLeafL)" stroke="#1f6a52" stroke-width="0.9" stroke-linejoin="round"/>
<path d="M300.8 537.0 L296.5 544.9 L298.3 546.1 L299.2 547.9 L303.0 539.8 Z M305.2 542.6 L297.8 552.9 L300.6 552.6 L302.7 553.1 L307.4 545.5 Z M309.6 548.3 L304.8 556.6 L307.9 556.6 L310.9 556.7 L313.1 552.7 Z M300.8 537.0 L309.5 534.8 L310.3 536.8 L311.8 538.1 L303.0 539.8 Z M305.2 542.6 L317.0 538.0 L316.0 540.7 L316.0 542.8 L307.4 545.5 Z M309.6 548.3 L318.8 545.7 L318.0 548.7 L317.4 551.7 L313.1 552.7 Z " fill="#4c9078"/>
<path d="M299.6 535.5 L316.5 557.2 M300.8 537.0 L296.5 544.9 M300.8 537.0 L309.5 534.8 M305.2 542.6 L297.8 552.9 M305.2 542.6 L317.0 538.0 M309.6 548.3 L304.8 556.6 M309.6 548.3 L318.8 545.7" fill="none" stroke="#1f6a52" stroke-width="0.700"/>
<ellipse cx="294.8" cy="506.5" rx="39.8" ry="35.0" fill="#d60a1a"/>
<path d="M255.0 541.5L282.7 484.8" stroke="url(#pCinn)" stroke-width="13.5"/>
<path d="M255.0 541.5L282.7 484.8" stroke="#9c6838" stroke-width="13.5" stroke-opacity="0.450"/>
<path d="M275.5 530.7L331.0 511.4" stroke="url(#pCinn)" stroke-width="2.5"/>
<path d="M275.5 530.7L331.0 511.4" stroke="#9c6838" stroke-width="2.5" stroke-opacity="0.450"/>
<circle cx="309.3" cy="519.8" r="7.9" fill="#bc0c1a" stroke="#8a0c14" stroke-width="0.700"/>
<circle cx="292.4" cy="506.5" r="7.9" fill="#bc0c1a" stroke="#8a0c14" stroke-width="0.700"/>
<circle cx="275.5" cy="523.4" r="7.9" fill="#bc0c1a" stroke="#8a0c14" stroke-width="0.700"/>
<circle cx="326.2" cy="523.4" r="7.9" fill="#bc0c1a" stroke="#8a0c14" stroke-width="0.700"/>
<circle cx="276.2" cy="470.3" r="7.9" fill="#bc0c1a" stroke="#8a0c14" stroke-width="0.700"/>
<circle cx="251.4" cy="500.5" r="7.9" fill="#bc0c1a" stroke="#8a0c14" stroke-width="0.700"/>
<circle cx="312.9" cy="488.4" r="7.9" fill="#bc0c1a" stroke="#8a0c14" stroke-width="0.700"/>
<circle cx="303.3" cy="490.8" r="7.9" fill="#bc0c1a" stroke="#8a0c14" stroke-width="0.700"/>
<circle cx="292.4" cy="542.7" r="7.9" fill="#bc0c1a" stroke="#8a0c14" stroke-width="0.700"/>
<circle cx="333.4" cy="530.7" r="7.9" fill="#bc0c1a" stroke="#8a0c14" stroke-width="0.700"/>
<circle cx="256.2" cy="516.2" r="7.9" fill="#bc0c1a" stroke="#8a0c14" stroke-width="0.700"/>
<circle cx="321.4" cy="511.4" r="7.9" fill="#bc0c1a" stroke="#8a0c14" stroke-width="0.700"/>
<circle cx="286.8" cy="461.9" r="7.9" fill="url(#pBerryD)" stroke="#b81c14" stroke-width="0.700"/>
<circle cx="266.6" cy="469.1" r="7.9" fill="url(#pBerryS)" stroke="#c23a20" stroke-width="0.700"/>
<circle cx="286.8" cy="478.3" r="7.9" fill="url(#pBerryS)" stroke="#c23a20" stroke-width="0.700"/>
<circle cx="302.8" cy="480.0" r="7.9" fill="url(#pBerryD)" stroke="#b81c14" stroke-width="0.700"/>
<circle cx="316.0" cy="473.9" r="7.9" fill="url(#pBerryS)" stroke="#c23a20" stroke-width="0.700"/>
<circle cx="256.2" cy="488.4" r="7.9" fill="#e8381e" stroke="#b81c14" stroke-width="0.700"/>
<circle cx="267.5" cy="487.9" r="7.9" fill="url(#pBerryD)" stroke="#b81c14" stroke-width="0.700"/>
<circle cx="292.4" cy="487.2" r="7.9" fill="#e8381e" stroke="#b81c14" stroke-width="0.700"/>
<circle cx="283.9" cy="495.7" r="7.9" fill="#e8381e" stroke="#b81c14" stroke-width="0.700"/>
<circle cx="297.9" cy="502.4" r="7.9" fill="url(#pBerryS)" stroke="#c23a20" stroke-width="0.700"/>
<circle cx="322.6" cy="496.9" r="7.9" fill="#e8381e" stroke="#b81c14" stroke-width="0.700"/>
<circle cx="310.5" cy="505.3" r="7.9" fill="#e8381e" stroke="#b81c14" stroke-width="0.700"/>
<circle cx="339.9" cy="505.3" r="7.9" fill="url(#pBerryS)" stroke="#c23a20" stroke-width="0.700"/>
<circle cx="261.5" cy="502.9" r="7.9" fill="url(#pBerryS)" stroke="#c23a20" stroke-width="0.700"/>
<circle cx="279.6" cy="513.8" r="7.9" fill="url(#pBerryD)" stroke="#b81c14" stroke-width="0.700"/>
<circle cx="261.7" cy="515.0" r="7.9" fill="#e8381e" stroke="#b81c14" stroke-width="0.700"/>
<circle cx="297.9" cy="517.4" r="7.9" fill="#e8381e" stroke="#b81c14" stroke-width="0.700"/>
<circle cx="319.7" cy="514.2" r="7.9" fill="url(#pBerryD)" stroke="#b81c14" stroke-width="0.700"/>
<circle cx="334.1" cy="519.8" r="7.9" fill="#e8381e" stroke="#b81c14" stroke-width="0.700"/>
<circle cx="283.9" cy="533.1" r="7.9" fill="#e8381e" stroke="#b81c14" stroke-width="0.700"/>
<circle cx="296.7" cy="529.4" r="7.9" fill="url(#pBerryS)" stroke="#c23a20" stroke-width="0.700"/>
<circle cx="319.7" cy="529.9" r="7.9" fill="url(#pBerryS)" stroke="#c23a20" stroke-width="0.700"/>
<circle cx="308.1" cy="535.5" r="7.9" fill="#e8381e" stroke="#b81c14" stroke-width="0.700"/>
<circle cx="271.4" cy="541.0" r="7.9" fill="url(#pBerryS)" stroke="#c23a20" stroke-width="0.700"/>
<circle cx="331.7" cy="541.0" r="7.9" fill="url(#pBerryD)" stroke="#b81c14" stroke-width="0.700"/>
</g>
<g transform="">
<ellipse cx="289.9" cy="176.4" rx="43.3" ry="36.8" fill="#4c9078"/>
<ellipse cx="326.7" cy="124.5" rx="26.0" ry="19.5" fill="#4c9078"/>
<path d="M318.0 131.0 Q324.2 132.5 330.9 135.0 Q335.8 128.8 343.6 133.2 Q344.1 124.7 352.1 123.9 Q354.6 115.3 358.0 108.2 Q350.2 107.6 341.6 105.3 Q336.7 111.8 329.2 107.9 Q329.0 116.8 321.1 117.8 Q319.8 124.8 318.0 131.0Z" fill="url(#pLeafL)" stroke="#1f6a52" stroke-width="0.9" stroke-linejoin="round"/>
<path d="M320.8 129.4 L330.9 135.0 L333.5 132.6 L336.5 131.4 L326.0 126.4 Z M331.2 123.5 L343.6 133.2 L344.3 129.4 L346.0 126.6 L336.4 120.5 Z M341.6 117.6 L352.1 123.9 L353.4 119.7 L354.8 115.7 L349.8 112.9 Z M320.8 129.4 L321.1 117.8 L324.6 116.8 L327.1 114.8 L326.0 126.4 Z M331.2 123.5 L329.2 107.9 L332.8 109.2 L336.1 109.2 L336.4 120.5 Z M341.6 117.6 L341.6 105.3 L345.9 106.4 L350.0 107.2 L349.8 112.9 Z " fill="#4c9078"/>
<path d="M318.0 131.0 L358.0 108.2 M320.8 129.4 L330.9 135.0 M320.8 129.4 L321.1 117.8 M331.2 123.5 L343.6 133.2 M331.2 123.5 L329.2 107.9 M341.6 117.6 L352.1 123.9 M341.6 117.6 L341.6 105.3" fill="none" stroke="#1f6a52" stroke-width="0.700"/>
<path d="M320.2 137.4 Q324.4 141.0 328.9 145.5 Q333.9 141.7 338.7 148.3 Q340.9 140.9 347.0 142.9 Q350.7 136.1 354.8 131.0 Q349.2 127.7 343.2 122.7 Q338.2 126.7 333.5 120.7 Q331.4 128.6 325.3 126.8 Q322.9 132.6 320.2 137.4Z" fill="url(#pLeafL)" stroke="#1f6a52" stroke-width="0.9" stroke-linejoin="round"/>
<path d="M322.6 137.0 L328.9 145.5 L331.3 144.2 L333.8 144.3 L327.1 136.1 Z M331.6 135.3 L338.7 148.3 L340.0 145.2 L341.9 143.2 L336.1 134.5 Z M340.6 133.6 L347.0 142.9 L348.9 139.6 L350.8 136.5 L347.7 132.3 Z M322.6 137.0 L325.3 126.8 L328.1 127.1 L330.4 126.1 L327.1 136.1 Z M331.6 135.3 L333.5 120.7 L335.9 123.1 L338.3 124.2 L336.1 134.5 Z M340.6 133.6 L343.2 122.7 L346.2 125.1 L349.1 127.2 L347.7 132.3 Z " fill="#4c9078"/>
<path d="M320.2 137.4 L354.8 131.0 M322.6 137.0 L328.9 145.5 M322.6 137.0 L325.3 126.8 M331.6 135.3 L338.7 148.3 M331.6 135.3 L333.5 120.7 M340.6 133.6 L347.0 142.9 M340.6 133.6 L343.2 122.7" fill="none" stroke="#1f6a52" stroke-width="0.700"/>
<path d="M320.2 148.3 Q323.1 152.1 325.9 156.8 Q331.3 154.9 333.9 161.3 Q337.8 156.0 342.7 159.1 Q347.7 154.6 352.6 151.5 Q348.4 147.5 344.4 142.1 Q338.9 144.1 336.3 138.2 Q332.4 143.9 327.5 141.1 Q323.8 145.1 320.2 148.3Z" fill="url(#pLeafL)" stroke="#1f6a52" stroke-width="0.9" stroke-linejoin="round"/>
<path d="M322.4 148.5 L325.9 156.8 L328.4 156.4 L330.6 157.0 L326.7 148.9 Z M330.9 149.3 L333.9 161.3 L335.9 159.2 L338.0 158.1 L335.1 149.8 Z M339.3 150.2 L342.7 159.1 L345.2 156.9 L347.7 154.9 L346.0 150.8 Z M322.4 148.5 L327.5 141.1 L329.9 142.0 L332.1 141.8 L326.7 148.9 Z M330.9 149.3 L336.3 138.2 L337.8 140.7 L339.6 142.2 L335.1 149.8 Z M339.3 150.2 L344.4 142.1 L346.4 144.7 L348.5 147.2 L346.0 150.8 Z " fill="#4c9078"/>
<path d="M320.2 148.3 L352.6 151.5 M322.4 148.5 L325.9 156.8 M322.4 148.5 L327.5 141.1 M330.9 149.3 L333.9 161.3 M330.9 149.3 L336.3 138.2 M339.3 150.2 L342.7 159.1 M339.3 150.2 L344.4 142.1" fill="none" stroke="#1f6a52" stroke-width="0.700"/>
<path d="M307.2 124.5 Q311.6 123.2 316.8 122.2 Q316.1 117.1 323.0 116.8 Q318.5 112.1 322.5 108.9 Q319.0 103.4 316.9 98.5 Q312.1 100.9 305.9 102.7 Q306.8 107.8 300.3 108.3 Q305.3 113.1 301.4 116.4 Q304.7 120.6 307.2 124.5Z" fill="url(#pLeafL)" stroke="#1f6a52" stroke-width="0.9" stroke-linejoin="round"/>
<path d="M307.9 122.7 L316.8 122.2 L316.9 119.9 L318.0 118.3 L309.1 119.3 Z M310.4 115.9 L323.0 116.8 L321.3 114.5 L320.6 112.5 L311.7 112.5 Z M312.9 109.2 L322.5 108.9 L320.8 106.2 L319.4 103.6 L314.9 103.8 Z M307.9 122.7 L301.4 116.4 L302.8 114.7 L303.1 112.7 L309.1 119.3 Z M310.4 115.9 L300.3 108.3 L303.1 107.7 L305.0 106.6 L311.7 112.5 Z M312.9 109.2 L305.9 102.7 L308.9 101.7 L311.8 100.7 L314.9 103.8 Z " fill="#4c9078"/>
<path d="M307.2 124.5 L316.9 98.5 M307.9 122.7 L316.8 122.2 M307.9 122.7 L301.4 116.4 M310.4 115.9 L323.0 116.8 M310.4 115.9 L300.3 108.3 M312.9 109.2 L322.5 108.9 M312.9 109.2 L305.9 102.7" fill="none" stroke="#1f6a52" stroke-width="0.700"/>
<path d="M270.4 159.1 Q270.2 153.2 270.5 146.6 Q263.8 144.1 265.5 136.0 Q258.0 138.0 255.1 131.2 Q246.8 131.5 239.7 130.5 Q241.2 137.5 241.5 145.8 Q248.5 148.2 247.1 155.9 Q255.0 153.5 258.0 160.1 Q264.5 159.2 270.4 159.1Z" fill="url(#pLeafL)" stroke="#1f6a52" stroke-width="0.9" stroke-linejoin="round"/>
<path d="M268.3 157.1 L270.5 146.6 L267.7 145.0 L265.9 142.7 L264.3 153.4 Z M260.3 149.7 L265.5 136.0 L262.0 136.5 L259.1 135.8 L256.3 145.9 Z M252.3 142.2 L255.1 131.2 L251.0 131.3 L247.1 131.2 L246.0 136.4 Z M268.3 157.1 L258.0 160.1 L256.2 157.4 L253.8 155.8 L264.3 153.4 Z M260.3 149.7 L247.1 155.9 L247.3 152.4 L246.4 149.5 L256.3 145.9 Z M252.3 142.2 L241.5 145.8 L241.3 141.7 L240.9 137.8 L246.0 136.4 Z " fill="#4c9078"/>
<path d="M270.4 159.1 L239.7 130.5 M268.3 157.1 L270.5 146.6 M268.3 157.1 L258.0 160.1 M260.3 149.7 L265.5 136.0 M260.3 149.7 L247.1 155.9 M252.3 142.2 L255.1 131.2 M252.3 142.2 L241.5 145.8" fill="none" stroke="#1f6a52" stroke-width="0.700"/>
<path d="M266.1 178.5 Q261.6 173.8 257.0 167.8 Q250.3 171.5 245.6 163.1 Q241.7 171.3 234.7 168.1 Q229.0 175.4 223.3 180.7 Q229.5 185.4 235.9 192.1 Q242.5 188.2 247.2 196.0 Q251.1 187.1 258.1 190.1 Q262.1 183.8 266.1 178.5Z" fill="url(#pLeafL)" stroke="#1f6a52" stroke-width="0.9" stroke-linejoin="round"/>
<path d="M263.1 178.7 L257.0 167.8 L253.8 168.9 L250.8 168.5 L257.5 179.0 Z M252.0 179.3 L245.6 163.1 L243.4 166.5 L240.9 168.4 L246.4 179.5 Z M240.8 179.8 L234.7 168.1 L231.8 171.6 L229.0 174.9 L232.0 180.3 Z M263.1 178.7 L258.1 190.1 L254.8 189.4 L251.9 190.1 L257.5 179.0 Z M252.0 179.3 L247.2 196.0 L244.8 192.8 L242.0 191.1 L246.4 179.5 Z M240.8 179.8 L235.9 192.1 L232.7 188.9 L229.5 185.9 L232.0 180.3 Z " fill="#4c9078"/>
<path d="M266.1 178.5 L223.3 180.7 M263.1 178.7 L257.0 167.8 M263.1 178.7 L258.1 190.1 M252.0 179.3 L245.6 163.1 M252.0 179.3 L247.2 196.0 M240.8 179.8 L234.7 168.1 M240.8 179.8 L235.9 192.1" fill="none" stroke="#1f6a52" stroke-width="0.700"/>
<path d="M274.8 189.4 Q268.2 188.1 260.9 185.9 Q257.9 192.9 249.0 188.8 Q251.0 197.8 243.4 199.3 Q243.6 208.7 242.3 216.4 Q250.1 216.6 259.3 218.4 Q262.1 211.2 270.7 214.8 Q268.2 205.3 275.6 203.6 Q274.8 196.0 274.8 189.4Z" fill="url(#pLeafL)" stroke="#1f6a52" stroke-width="0.9" stroke-linejoin="round"/>
<path d="M272.5 191.3 L260.9 185.9 L259.0 188.7 L256.4 190.1 L268.3 194.8 Z M264.0 198.3 L249.0 188.8 L249.4 192.8 L248.6 195.9 L259.8 201.8 Z M255.6 205.3 L243.4 199.3 L243.4 203.9 L243.2 208.3 L249.0 210.9 Z M272.5 191.3 L275.6 203.6 L272.5 204.9 L270.7 207.3 L268.3 194.8 Z M264.0 198.3 L270.7 214.8 L266.8 213.7 L263.6 213.9 L259.8 201.8 Z M255.6 205.3 L259.3 218.4 L254.8 217.6 L250.5 217.0 L249.0 210.9 Z " fill="#4c9078"/>
<path d="M274.8 189.4 L242.3 216.4 M272.5 191.3 L260.9 185.9 M272.5 191.3 L275.6 203.6 M264.0 198.3 L249.0 188.8 M264.0 198.3 L270.7 214.8 M255.6 205.3 L243.4 199.3 M255.6 205.3 L259.3 218.4" fill="none" stroke="#1f6a52" stroke-width="0.700"/>
<path d="M289.9 195.9 Q283.7 200.3 276.0 204.6 Q279.4 212.7 268.9 216.8 Q277.9 222.4 273.1 229.8 Q280.9 237.3 286.2 244.5 Q292.6 238.1 301.4 232.0 Q297.7 223.9 307.5 219.7 Q297.7 214.1 302.3 206.6 Q295.4 201.2 289.9 195.9Z" fill="url(#pLeafL)" stroke="#1f6a52" stroke-width="0.9" stroke-linejoin="round"/>
<path d="M289.6 199.3 L276.0 204.6 L276.8 208.4 L275.9 211.7 L289.2 205.6 Z M288.7 211.9 L268.9 216.8 L272.5 219.7 L274.5 222.8 L288.2 218.2 Z M287.7 224.6 L273.1 229.8 L276.8 233.5 L280.3 237.2 L287.0 234.5 Z M289.6 199.3 L302.3 206.6 L300.9 210.2 L301.3 213.6 L289.2 205.6 Z M288.7 211.9 L307.5 219.7 L303.5 222.0 L301.1 224.8 L288.2 218.2 Z M287.7 224.6 L301.4 232.0 L297.1 235.1 L293.2 238.2 L287.0 234.5 Z " fill="#4c9078"/>
<path d="M289.9 195.9 L286.2 244.5 M289.6 199.3 L276.0 204.6 M289.6 199.3 L302.3 206.6 M288.7 211.9 L268.9 216.8 M288.7 211.9 L307.5 219.7 M287.7 224.6 L273.1 229.8 M287.7 224.6 L301.4 232.0" fill="none" stroke="#1f6a52" stroke-width="0.700"/>
<path d="M302.9 190.4 Q302.0 197.3 300.2 205.0 Q307.6 208.5 303.9 217.8 Q313.2 216.1 315.2 224.2 Q325.0 224.5 333.2 226.1 Q332.8 217.8 334.1 208.1 Q326.5 204.8 329.7 195.9 Q319.9 198.1 317.7 190.1 Q309.8 190.7 302.9 190.4Z" fill="url(#pLeafL)" stroke="#1f6a52" stroke-width="0.9" stroke-linejoin="round"/>
<path d="M305.0 192.9 L300.2 205.0 L303.2 207.1 L304.8 210.0 L308.9 197.6 Z M312.9 202.2 L303.9 217.8 L308.1 217.6 L311.4 218.5 L316.8 206.9 Z M320.7 211.5 L315.2 224.2 L320.0 224.4 L324.6 224.8 L326.9 218.8 Z M305.0 192.9 L317.7 190.1 L319.3 193.5 L321.8 195.5 L308.9 197.6 Z M312.9 202.2 L329.7 195.9 L328.8 200.0 L329.2 203.4 L316.8 206.9 Z M320.7 211.5 L334.1 208.1 L333.6 212.9 L333.2 217.5 L326.9 218.8 Z " fill="#4c9078"/>
<path d="M302.9 190.4 L333.2 226.1 M305.0 192.9 L300.2 205.0 M305.0 192.9 L317.7 190.1 M312.9 202.2 L303.9 217.8 M312.9 202.2 L329.7 195.9 M320.7 211.5 L315.2 224.2 M320.7 211.5 L334.1 208.1" fill="none" stroke="#1f6a52" stroke-width="0.700"/>
<path d="M316.9 180.7 Q321.2 184.5 325.7 189.4 Q330.7 185.4 335.6 192.5 Q337.7 184.6 343.9 186.8 Q347.5 179.6 351.5 174.2 Q345.9 170.6 339.8 165.2 Q334.9 169.5 330.1 163.0 Q328.1 171.4 322.0 169.4 Q319.6 175.6 316.9 180.7Z" fill="url(#pLeafL)" stroke="#1f6a52" stroke-width="0.9" stroke-linejoin="round"/>
<path d="M319.4 180.3 L325.7 189.4 L328.2 188.1 L330.7 188.2 L323.9 179.4 Z M328.4 178.6 L335.6 192.5 L336.9 189.2 L338.7 187.2 L332.9 177.7 Z M337.4 176.9 L343.9 186.8 L345.7 183.3 L347.6 180.1 L344.4 175.5 Z M319.4 180.3 L322.0 169.4 L324.8 169.7 L327.1 168.8 L323.9 179.4 Z M328.4 178.6 L330.1 163.0 L332.5 165.6 L334.9 166.8 L332.9 177.7 Z M337.4 176.9 L339.8 165.2 L342.8 167.8 L345.8 170.2 L344.4 175.5 Z " fill="#4c9078"/>
<path d="M316.9 180.7 L351.5 174.2 M319.4 180.3 L325.7 189.4 M319.4 180.3 L322.0 169.4 M328.4 178.6 L335.6 192.5 M328.4 178.6 L330.1 163.0 M337.4 176.9 L343.9 186.8 M337.4 176.9 L339.8 165.2" fill="none" stroke="#1f6a52" stroke-width="0.700"/>
<ellipse cx="296.4" cy="152.6" rx="35.7" ry="37.9" fill="#d60a1a"/>
<circle cx="257.4" cy="117.5" r="7.5" fill="#bc0c1a" stroke="#8a0c14" stroke-width="0.700"/>
<circle cx="260.7" cy="140.7" r="7.5" fill="#bc0c1a" stroke="#8a0c14" stroke-width="0.700"/>
<path d="M254.2 120.6L292.1 149.3" stroke="url(#pCinn)" stroke-width="15"/>
<path d="M254.2 120.6L292.1 149.3" stroke="#9c6838" stroke-width="15" stroke-opacity="0.450"/>
<path d="M289.9 148.3L328.8 151.5" stroke="url(#pCinn)" stroke-width="2.2"/>
<path d="M289.9 148.3L328.8 151.5" stroke="#9c6838" stroke-width="2.2" stroke-opacity="0.450"/>
<circle cx="308.3" cy="137.4" r="7.5" fill="#bc0c1a" stroke="#8a0c14" stroke-width="0.700"/>
<circle cx="311.5" cy="163.4" r="7.5" fill="#bc0c1a" stroke="#8a0c14" stroke-width="0.700"/>
<circle cx="323.4" cy="174.2" r="7.5" fill="#bc0c1a" stroke="#8a0c14" stroke-width="0.700"/>
<circle cx="289.9" cy="169.9" r="7.5" fill="#bc0c1a" stroke="#8a0c14" stroke-width="0.700"/>
<circle cx="326.7" cy="137.4" r="7.5" fill="#bc0c1a" stroke="#8a0c14" stroke-width="0.700"/>
<circle cx="286.6" cy="115.8" r="7.5" fill="#bc0c1a" stroke="#8a0c14" stroke-width="0.700"/>
<circle cx="297.5" cy="114.7" r="7.5" fill="#bc0c1a" stroke="#8a0c14" stroke-width="0.700"/>
<circle cx="333.2" cy="128.8" r="7.5" fill="#bc0c1a" stroke="#8a0c14" stroke-width="0.700"/>
<circle cx="311.5" cy="153.7" r="7.5" fill="#bc0c1a" stroke="#8a0c14" stroke-width="0.700"/>
<circle cx="251.0" cy="158.0" r="7.5" fill="#bc0c1a" stroke="#8a0c14" stroke-width="0.700"/>
<circle cx="298.5" cy="171.0" r="7.5" fill="#bc0c1a" stroke="#8a0c14" stroke-width="0.700"/>
<circle cx="262.9" cy="181.8" r="7.5" fill="#bc0c1a" stroke="#8a0c14" stroke-width="0.700"/>
<circle cx="274.8" cy="198.0" r="7.5" fill="#bc0c1a" stroke="#8a0c14" stroke-width="0.700"/>
<circle cx="296.4" cy="191.5" r="7.5" fill="#bc0c1a" stroke="#8a0c14" stroke-width="0.700"/>
<circle cx="271.5" cy="118.0" r="7.5" fill="url(#pBerryD)" stroke="#b81c14" stroke-width="0.700"/>
<circle cx="283.4" cy="125.5" r="7.5" fill="#e8381e" stroke="#b81c14" stroke-width="0.700"/>
<circle cx="297.5" cy="129.9" r="7.5" fill="url(#pBerryD)" stroke="#b81c14" stroke-width="0.700"/>
<circle cx="308.3" cy="122.3" r="7.5" fill="#e8381e" stroke="#b81c14" stroke-width="0.700"/>
<circle cx="320.2" cy="129.9" r="7.5" fill="url(#pBerryD)" stroke="#b81c14" stroke-width="0.700"/>
<circle cx="332.1" cy="120.1" r="7.5" fill="url(#pBerryS)" stroke="#c23a20" stroke-width="0.700"/>
<circle cx="334.2" cy="139.6" r="7.5" fill="#e8381e" stroke="#b81c14" stroke-width="0.700"/>
<circle cx="320.2" cy="146.1" r="7.5" fill="url(#pBerryS)" stroke="#c23a20" stroke-width="0.700"/>
<circle cx="339.6" cy="154.8" r="7.5" fill="url(#pBerryD)" stroke="#b81c14" stroke-width="0.700"/>
<circle cx="323.4" cy="162.3" r="7.5" fill="#e8381e" stroke="#b81c14" stroke-width="0.700"/>
<circle cx="298.5" cy="142.9" r="7.5" fill="#e8381e" stroke="#b81c14" stroke-width="0.700"/>
<circle cx="280.2" cy="147.2" r="7.5" fill="url(#pBerryS)" stroke="#c23a20" stroke-width="0.700"/>
<circle cx="297.5" cy="158.0" r="7.5" fill="url(#pBerryD)" stroke="#b81c14" stroke-width="0.700"/>
<circle cx="284.5" cy="163.4" r="7.5" fill="#e8381e" stroke="#b81c14" stroke-width="0.700"/>
<circle cx="310.4" cy="169.9" r="7.5" fill="#e8381e" stroke="#b81c14" stroke-width="0.700"/>
<circle cx="256.4" cy="169.9" r="7.5" fill="#e8381e" stroke="#b81c14" stroke-width="0.700"/>
<circle cx="262.9" cy="159.1" r="7.5" fill="url(#pBerryD)" stroke="#b81c14" stroke-width="0.700"/>
<circle cx="267.2" cy="172.1" r="7.5" fill="url(#pBerryS)" stroke="#c23a20" stroke-width="0.700"/>
<circle cx="275.8" cy="176.4" r="7.5" fill="#e8381e" stroke="#b81c14" stroke-width="0.700"/>
<circle cx="301.8" cy="179.6" r="7.5" fill="url(#pBerryS)" stroke="#c23a20" stroke-width="0.700"/>
<circle cx="315.9" cy="184.0" r="7.5" fill="url(#pBerryD)" stroke="#b81c14" stroke-width="0.700"/>
<circle cx="276.9" cy="188.3" r="7.5" fill="#e8381e" stroke="#b81c14" stroke-width="0.700"/>
<circle cx="286.6" cy="184.0" r="7.5" fill="#e8381e" stroke="#b81c14" stroke-width="0.700"/>
<circle cx="266.1" cy="189.4" r="7.5" fill="url(#pBerryD)" stroke="#b81c14" stroke-width="0.700"/>
<circle cx="286.6" cy="198.0" r="7.5" fill="url(#pBerryS)" stroke="#c23a20" stroke-width="0.700"/>
</g>
<g transform="translate(816.0 0) scale(-1 1)">
<ellipse cx="289.9" cy="176.4" rx="43.3" ry="36.8" fill="#4c9078"/>
<ellipse cx="326.7" cy="124.5" rx="26.0" ry="19.5" fill="#4c9078"/>
<path d="M318.0 131.0 Q324.2 132.5 330.9 135.0 Q335.8 128.8 343.6 133.2 Q344.1 124.7 352.1 123.9 Q354.6 115.3 358.0 108.2 Q350.2 107.6 341.6 105.3 Q336.7 111.8 329.2 107.9 Q329.0 116.8 321.1 117.8 Q319.8 124.8 318.0 131.0Z" fill="url(#pLeafL)" stroke="#1f6a52" stroke-width="0.9" stroke-linejoin="round"/>
<path d="M320.8 129.4 L330.9 135.0 L333.5 132.6 L336.5 131.4 L326.0 126.4 Z M331.2 123.5 L343.6 133.2 L344.3 129.4 L346.0 126.6 L336.4 120.5 Z M341.6 117.6 L352.1 123.9 L353.4 119.7 L354.8 115.7 L349.8 112.9 Z M320.8 129.4 L321.1 117.8 L324.6 116.8 L327.1 114.8 L326.0 126.4 Z M331.2 123.5 L329.2 107.9 L332.8 109.2 L336.1 109.2 L336.4 120.5 Z M341.6 117.6 L341.6 105.3 L345.9 106.4 L350.0 107.2 L349.8 112.9 Z " fill="#4c9078"/>
<path d="M318.0 131.0 L358.0 108.2 M320.8 129.4 L330.9 135.0 M320.8 129.4 L321.1 117.8 M331.2 123.5 L343.6 133.2 M331.2 123.5 L329.2 107.9 M341.6 117.6 L352.1 123.9 M341.6 117.6 L341.6 105.3" fill="none" stroke="#1f6a52" stroke-width="0.700"/>
<path d="M320.2 137.4 Q324.4 141.0 328.9 145.5 Q333.9 141.7 338.7 148.3 Q340.9 140.9 347.0 142.9 Q350.7 136.1 354.8 131.0 Q349.2 127.7 343.2 122.7 Q338.2 126.7 333.5 120.7 Q331.4 128.6 325.3 126.8 Q322.9 132.6 320.2 137.4Z" fill="url(#pLeafL)" stroke="#1f6a52" stroke-width="0.9" stroke-linejoin="round"/>
<path d="M322.6 137.0 L328.9 145.5 L331.3 144.2 L333.8 144.3 L327.1 136.1 Z M331.6 135.3 L338.7 148.3 L340.0 145.2 L341.9 143.2 L336.1 134.5 Z M340.6 133.6 L347.0 142.9 L348.9 139.6 L350.8 136.5 L347.7 132.3 Z M322.6 137.0 L325.3 126.8 L328.1 127.1 L330.4 126.1 L327.1 136.1 Z M331.6 135.3 L333.5 120.7 L335.9 123.1 L338.3 124.2 L336.1 134.5 Z M340.6 133.6 L343.2 122.7 L346.2 125.1 L349.1 127.2 L347.7 132.3 Z " fill="#4c9078"/>
<path d="M320.2 137.4 L354.8 131.0 M322.6 137.0 L328.9 145.5 M322.6 137.0 L325.3 126.8 M331.6 135.3 L338.7 148.3 M331.6 135.3 L333.5 120.7 M340.6 133.6 L347.0 142.9 M340.6 133.6 L343.2 122.7" fill="none" stroke="#1f6a52" stroke-width="0.700"/>
<path d="M320.2 148.3 Q323.1 152.1 325.9 156.8 Q331.3 154.9 333.9 161.3 Q337.8 156.0 342.7 159.1 Q347.7 154.6 352.6 151.5 Q348.4 147.5 344.4 142.1 Q338.9 144.1 336.3 138.2 Q332.4 143.9 327.5 141.1 Q323.8 145.1 320.2 148.3Z" fill="url(#pLeafL)" stroke="#1f6a52" stroke-width="0.9" stroke-linejoin="round"/>
<path d="M322.4 148.5 L325.9 156.8 L328.4 156.4 L330.6 157.0 L326.7 148.9 Z M330.9 149.3 L333.9 161.3 L335.9 159.2 L338.0 158.1 L335.1 149.8 Z M339.3 150.2 L342.7 159.1 L345.2 156.9 L347.7 154.9 L346.0 150.8 Z M322.4 148.5 L327.5 141.1 L329.9 142.0 L332.1 141.8 L326.7 148.9 Z M330.9 149.3 L336.3 138.2 L337.8 140.7 L339.6 142.2 L335.1 149.8 Z M339.3 150.2 L344.4 142.1 L346.4 144.7 L348.5 147.2 L346.0 150.8 Z " fill="#4c9078"/>
<path d="M320.2 148.3 L352.6 151.5 M322.4 148.5 L325.9 156.8 M322.4 148.5 L327.5 141.1 M330.9 149.3 L333.9 161.3 M330.9 149.3 L336.3 138.2 M339.3 150.2 L342.7 159.1 M339.3 150.2 L344.4 142.1" fill="none" stroke="#1f6a52" stroke-width="0.700"/>
<path d="M307.2 124.5 Q311.6 123.2 316.8 122.2 Q316.1 117.1 323.0 116.8 Q318.5 112.1 322.5 108.9 Q319.0 103.4 316.9 98.5 Q312.1 100.9 305.9 102.7 Q306.8 107.8 300.3 108.3 Q305.3 113.1 301.4 116.4 Q304.7 120.6 307.2 124.5Z" fill="url(#pLeafL)" stroke="#1f6a52" stroke-width="0.9" stroke-linejoin="round"/>
<path d="M307.9 122.7 L316.8 122.2 L316.9 119.9 L318.0 118.3 L309.1 119.3 Z M310.4 115.9 L323.0 116.8 L321.3 114.5 L320.6 112.5 L311.7 112.5 Z M312.9 109.2 L322.5 108.9 L320.8 106.2 L319.4 103.6 L314.9 103.8 Z M307.9 122.7 L301.4 116.4 L302.8 114.7 L303.1 112.7 L309.1 119.3 Z M310.4 115.9 L300.3 108.3 L303.1 107.7 L305.0 106.6 L311.7 112.5 Z M312.9 109.2 L305.9 102.7 L308.9 101.7 L311.8 100.7 L314.9 103.8 Z " fill="#4c9078"/>
<path d="M307.2 124.5 L316.9 98.5 M307.9 122.7 L316.8 122.2 M307.9 122.7 L301.4 116.4 M310.4 115.9 L323.0 116.8 M310.4 115.9 L300.3 108.3 M312.9 109.2 L322.5 108.9 M312.9 109.2 L305.9 102.7" fill="none" stroke="#1f6a52" stroke-width="0.700"/>
<path d="M270.4 159.1 Q270.2 153.2 270.5 146.6 Q263.8 144.1 265.5 136.0 Q258.0 138.0 255.1 131.2 Q246.8 131.5 239.7 130.5 Q241.2 137.5 241.5 145.8 Q248.5 148.2 247.1 155.9 Q255.0 153.5 258.0 160.1 Q264.5 159.2 270.4 159.1Z" fill="url(#pLeafL)" stroke="#1f6a52" stroke-width="0.9" stroke-linejoin="round"/>
<path d="M268.3 157.1 L270.5 146.6 L267.7 145.0 L265.9 142.7 L264.3 153.4 Z M260.3 149.7 L265.5 136.0 L262.0 136.5 L259.1 135.8 L256.3 145.9 Z M252.3 142.2 L255.1 131.2 L251.0 131.3 L247.1 131.2 L246.0 136.4 Z M268.3 157.1 L258.0 160.1 L256.2 157.4 L253.8 155.8 L264.3 153.4 Z M260.3 149.7 L247.1 155.9 L247.3 152.4 L246.4 149.5 L256.3 145.9 Z M252.3 142.2 L241.5 145.8 L241.3 141.7 L240.9 137.8 L246.0 136.4 Z " fill="#4c9078"/>
<path d="M270.4 159.1 L239.7 130.5 M268.3 157.1 L270.5 146.6 M268.3 157.1 L258.0 160.1 M260.3 149.7 L265.5 136.0 M260.3 149.7 L247.1 155.9 M252.3 142.2 L255.1 131.2 M252.3 142.2 L241.5 145.8" fill="none" stroke="#1f6a52" stroke-width="0.700"/>
<path d="M266.1 178.5 Q261.6 173.8 257.0 167.8 Q250.3 171.5 245.6 163.1 Q241.7 171.3 234.7 168.1 Q229.0 175.4 223.3 180.7 Q229.5 185.4 235.9 192.1 Q242.5 188.2 247.2 196.0 Q251.1 187.1 258.1 190.1 Q262.1 183.8 266.1 178.5Z" fill="url(#pLeafL)" stroke="#1f6a52" stroke-width="0.9" stroke-linejoin="round"/>
<path d="M263.1 178.7 L257.0 167.8 L253.8 168.9 L250.8 168.5 L257.5 179.0 Z M252.0 179.3 L245.6 163.1 L243.4 166.5 L240.9 168.4 L246.4 179.5 Z M240.8 179.8 L234.7 168.1 L231.8 171.6 L229.0 174.9 L232.0 180.3 Z M263.1 178.7 L258.1 190.1 L254.8 189.4 L251.9 190.1 L257.5 179.0 Z M252.0 179.3 L247.2 196.0 L244.8 192.8 L242.0 191.1 L246.4 179.5 Z M240.8 179.8 L235.9 192.1 L232.7 188.9 L229.5 185.9 L232.0 180.3 Z " fill="#4c9078"/>
<path d="M266.1 178.5 L223.3 180.7 M263.1 178.7 L257.0 167.8 M263.1 178.7 L258.1 190.1 M252.0 179.3 L245.6 163.1 M252.0 179.3 L247.2 196.0 M240.8 179.8 L234.7 168.1 M240.8 179.8 L235.9 192.1" fill="none" stroke="#1f6a52" stroke-width="0.700"/>
<path d="M274.8 189.4 Q268.2 188.1 260.9 185.9 Q257.9 192.9 249.0 188.8 Q251.0 197.8 243.4 199.3 Q243.6 208.7 242.3 216.4 Q250.1 216.6 259.3 218.4 Q262.1 211.2 270.7 214.8 Q268.2 205.3 275.6 203.6 Q274.8 196.0 274.8 189.4Z" fill="url(#pLeafL)" stroke="#1f6a52" stroke-width="0.9" stroke-linejoin="round"/>
<path d="M272.5 191.3 L260.9 185.9 L259.0 188.7 L256.4 190.1 L268.3 194.8 Z M264.0 198.3 L249.0 188.8 L249.4 192.8 L248.6 195.9 L259.8 201.8 Z M255.6 205.3 L243.4 199.3 L243.4 203.9 L243.2 208.3 L249.0 210.9 Z M272.5 191.3 L275.6 203.6 L272.5 204.9 L270.7 207.3 L268.3 194.8 Z M264.0 198.3 L270.7 214.8 L266.8 213.7 L263.6 213.9 L259.8 201.8 Z M255.6 205.3 L259.3 218.4 L254.8 217.6 L250.5 217.0 L249.0 210.9 Z " fill="#4c9078"/>
<path d="M274.8 189.4 L242.3 216.4 M272.5 191.3 L260.9 185.9 M272.5 191.3 L275.6 203.6 M264.0 198.3 L249.0 188.8 M264.0 198.3 L270.7 214.8 M255.6 205.3 L243.4 199.3 M255.6 205.3 L259.3 218.4" fill="none" stroke="#1f6a52" stroke-width="0.700"/>
<path d="M289.9 195.9 Q283.7 200.3 276.0 204.6 Q279.4 212.7 268.9 216.8 Q277.9 222.4 273.1 229.8 Q280.9 237.3 286.2 244.5 Q292.6 238.1 301.4 232.0 Q297.7 223.9 307.5 219.7 Q297.7 214.1 302.3 206.6 Q295.4 201.2 289.9 195.9Z" fill="url(#pLeafL)" stroke="#1f6a52" stroke-width="0.9" stroke-linejoin="round"/>
<path d="M289.6 199.3 L276.0 204.6 L276.8 208.4 L275.9 211.7 L289.2 205.6 Z M288.7 211.9 L268.9 216.8 L272.5 219.7 L274.5 222.8 L288.2 218.2 Z M287.7 224.6 L273.1 229.8 L276.8 233.5 L280.3 237.2 L287.0 234.5 Z M289.6 199.3 L302.3 206.6 L300.9 210.2 L301.3 213.6 L289.2 205.6 Z M288.7 211.9 L307.5 219.7 L303.5 222.0 L301.1 224.8 L288.2 218.2 Z M287.7 224.6 L301.4 232.0 L297.1 235.1 L293.2 238.2 L287.0 234.5 Z " fill="#4c9078"/>
<path d="M289.9 195.9 L286.2 244.5 M289.6 199.3 L276.0 204.6 M289.6 199.3 L302.3 206.6 M288.7 211.9 L268.9 216.8 M288.7 211.9 L307.5 219.7 M287.7 224.6 L273.1 229.8 M287.7 224.6 L301.4 232.0" fill="none" stroke="#1f6a52" stroke-width="0.700"/>
<path d="M302.9 190.4 Q302.0 197.3 300.2 205.0 Q307.6 208.5 303.9 217.8 Q313.2 216.1 315.2 224.2 Q325.0 224.5 333.2 226.1 Q332.8 217.8 334.1 208.1 Q326.5 204.8 329.7 195.9 Q319.9 198.1 317.7 190.1 Q309.8 190.7 302.9 190.4Z" fill="url(#pLeafL)" stroke="#1f6a52" stroke-width="0.9" stroke-linejoin="round"/>
<path d="M305.0 192.9 L300.2 205.0 L303.2 207.1 L304.8 210.0 L308.9 197.6 Z M312.9 202.2 L303.9 217.8 L308.1 217.6 L311.4 218.5 L316.8 206.9 Z M320.7 211.5 L315.2 224.2 L320.0 224.4 L324.6 224.8 L326.9 218.8 Z M305.0 192.9 L317.7 190.1 L319.3 193.5 L321.8 195.5 L308.9 197.6 Z M312.9 202.2 L329.7 195.9 L328.8 200.0 L329.2 203.4 L316.8 206.9 Z M320.7 211.5 L334.1 208.1 L333.6 212.9 L333.2 217.5 L326.9 218.8 Z " fill="#4c9078"/>
<path d="M302.9 190.4 L333.2 226.1 M305.0 192.9 L300.2 205.0 M305.0 192.9 L317.7 190.1 M312.9 202.2 L303.9 217.8 M312.9 202.2 L329.7 195.9 M320.7 211.5 L315.2 224.2 M320.7 211.5 L334.1 208.1" fill="none" stroke="#1f6a52" stroke-width="0.700"/>
<path d="M316.9 180.7 Q321.2 184.5 325.7 189.4 Q330.7 185.4 335.6 192.5 Q337.7 184.6 343.9 186.8 Q347.5 179.6 351.5 174.2 Q345.9 170.6 339.8 165.2 Q334.9 169.5 330.1 163.0 Q328.1 171.4 322.0 169.4 Q319.6 175.6 316.9 180.7Z" fill="url(#pLeafL)" stroke="#1f6a52" stroke-width="0.9" stroke-linejoin="round"/>
<path d="M319.4 180.3 L325.7 189.4 L328.2 188.1 L330.7 188.2 L323.9 179.4 Z M328.4 178.6 L335.6 192.5 L336.9 189.2 L338.7 187.2 L332.9 177.7 Z M337.4 176.9 L343.9 186.8 L345.7 183.3 L347.6 180.1 L344.4 175.5 Z M319.4 180.3 L322.0 169.4 L324.8 169.7 L327.1 168.8 L323.9 179.4 Z M328.4 178.6 L330.1 163.0 L332.5 165.6 L334.9 166.8 L332.9 177.7 Z M337.4 176.9 L339.8 165.2 L342.8 167.8 L345.8 170.2 L344.4 175.5 Z " fill="#4c9078"/>
<path d="M316.9 180.7 L351.5 174.2 M319.4 180.3 L325.7 189.4 M319.4 180.3 L322.0 169.4 M328.4 178.6 L335.6 192.5 M328.4 178.6 L330.1 163.0 M337.4 176.9 L343.9 186.8 M337.4 176.9 L339.8 165.2" fill="none" stroke="#1f6a52" stroke-width="0.700"/>
<ellipse cx="296.4" cy="152.6" rx="35.7" ry="37.9" fill="#d60a1a"/>
<circle cx="257.4" cy="117.5" r="7.5" fill="#bc0c1a" stroke="#8a0c14" stroke-width="0.700"/>
<circle cx="260.7" cy="140.7" r="7.5" fill="#bc0c1a" stroke="#8a0c14" stroke-width="0.700"/>
<path d="M254.2 120.6L292.1 149.3" stroke="url(#pCinn)" stroke-width="15"/>
<path d="M254.2 120.6L292.1 149.3" stroke="#9c6838" stroke-width="15" stroke-opacity="0.450"/>
<path d="M289.9 148.3L328.8 151.5" stroke="url(#pCinn)" stroke-width="2.2"/>
<path d="M289.9 148.3L328.8 151.5" stroke="#9c6838" stroke-width="2.2" stroke-opacity="0.450"/>
<circle cx="308.3" cy="137.4" r="7.5" fill="#bc0c1a" stroke="#8a0c14" stroke-width="0.700"/>
<circle cx="311.5" cy="163.4" r="7.5" fill="#bc0c1a" stroke="#8a0c14" stroke-width="0.700"/>
<circle cx="323.4" cy="174.2" r="7.5" fill="#bc0c1a" stroke="#8a0c14" stroke-width="0.700"/>
<circle cx="289.9" cy="169.9" r="7.5" fill="#bc0c1a" stroke="#8a0c14" stroke-width="0.700"/>
<circle cx="326.7" cy="137.4" r="7.5" fill="#bc0c1a" stroke="#8a0c14" stroke-width="0.700"/>
<circle cx="286.6" cy="115.8" r="7.5" fill="#bc0c1a" stroke="#8a0c14" stroke-width="0.700"/>
<circle cx="297.5" cy="114.7" r="7.5" fill="#bc0c1a" stroke="#8a0c14" stroke-width="0.700"/>
<circle cx="333.2" cy="128.8" r="7.5" fill="#bc0c1a" stroke="#8a0c14" stroke-width="0.700"/>
<circle cx="311.5" cy="153.7" r="7.5" fill="#bc0c1a" stroke="#8a0c14" stroke-width="0.700"/>
<circle cx="251.0" cy="158.0" r="7.5" fill="#bc0c1a" stroke="#8a0c14" stroke-width="0.700"/>
<circle cx="298.5" cy="171.0" r="7.5" fill="#bc0c1a" stroke="#8a0c14" stroke-width="0.700"/>
<circle cx="262.9" cy="181.8" r="7.5" fill="#bc0c1a" stroke="#8a0c14" stroke-width="0.700"/>
<circle cx="274.8" cy="198.0" r="7.5" fill="#bc0c1a" stroke="#8a0c14" stroke-width="0.700"/>
<circle cx="296.4" cy="191.5" r="7.5" fill="#bc0c1a" stroke="#8a0c14" stroke-width="0.700"/>
<circle cx="271.5" cy="118.0" r="7.5" fill="url(#pBerryD)" stroke="#b81c14" stroke-width="0.700"/>
<circle cx="283.4" cy="125.5" r="7.5" fill="#e8381e" stroke="#b81c14" stroke-width="0.700"/>
<circle cx="297.5" cy="129.9" r="7.5" fill="url(#pBerryD)" stroke="#b81c14" stroke-width="0.700"/>
<circle cx="308.3" cy="122.3" r="7.5" fill="#e8381e" stroke="#b81c14" stroke-width="0.700"/>
<circle cx="320.2" cy="129.9" r="7.5" fill="url(#pBerryD)" stroke="#b81c14" stroke-width="0.700"/>
<circle cx="332.1" cy="120.1" r="7.5" fill="url(#pBerryS)" stroke="#c23a20" stroke-width="0.700"/>
<circle cx="334.2" cy="139.6" r="7.5" fill="#e8381e" stroke="#b81c14" stroke-width="0.700"/>
<circle cx="320.2" cy="146.1" r="7.5" fill="url(#pBerryS)" stroke="#c23a20" stroke-width="0.700"/>
<circle cx="339.6" cy="154.8" r="7.5" fill="url(#pBerryD)" stroke="#b81c14" stroke-width="0.700"/>
<circle cx="323.4" cy="162.3" r="7.5" fill="#e8381e" stroke="#b81c14" stroke-width="0.700"/>
<circle cx="298.5" cy="142.9" r="7.5" fill="#e8381e" stroke="#b81c14" stroke-width="0.700"/>
<circle cx="280.2" cy="147.2" r="7.5" fill="url(#pBerryS)" stroke="#c23a20" stroke-width="0.700"/>
<circle cx="297.5" cy="158.0" r="7.5" fill="url(#pBerryD)" stroke="#b81c14" stroke-width="0.700"/>
<circle cx="284.5" cy="163.4" r="7.5" fill="#e8381e" stroke="#b81c14" stroke-width="0.700"/>
<circle cx="310.4" cy="169.9" r="7.5" fill="#e8381e" stroke="#b81c14" stroke-width="0.700"/>
<circle cx="256.4" cy="169.9" r="7.5" fill="#e8381e" stroke="#b81c14" stroke-width="0.700"/>
<circle cx="262.9" cy="159.1" r="7.5" fill="url(#pBerryD)" stroke="#b81c14" stroke-width="0.700"/>
<circle cx="267.2" cy="172.1" r="7.5" fill="url(#pBerryS)" stroke="#c23a20" stroke-width="0.700"/>
<circle cx="275.8" cy="176.4" r="7.5" fill="#e8381e" stroke="#b81c14" stroke-width="0.700"/>
<circle cx="301.8" cy="179.6" r="7.5" fill="url(#pBerryS)" stroke="#c23a20" stroke-width="0.700"/>
<circle cx="315.9" cy="184.0" r="7.5" fill="url(#pBerryD)" stroke="#b81c14" stroke-width="0.700"/>
<circle cx="276.9" cy="188.3" r="7.5" fill="#e8381e" stroke="#b81c14" stroke-width="0.700"/>
<circle cx="286.6" cy="184.0" r="7.5" fill="#e8381e" stroke="#b81c14" stroke-width="0.700"/>
<circle cx="266.1" cy="189.4" r="7.5" fill="url(#pBerryD)" stroke="#b81c14" stroke-width="0.700"/>
<circle cx="286.6" cy="198.0" r="7.5" fill="url(#pBerryS)" stroke="#c23a20" stroke-width="0.700"/>
</g>
<g transform="translate(118 131.5)" stroke="#e8867e" stroke-width="0.900" stroke-linejoin="round">
<g transform="scale(1 1)">
<path d="M-10 9C-30 7 -50 9 -66 13L-45 29L-60.500 47C-36 42 -18 31 -6 15z" fill="url(#pDots)"/>
<path d="M-12 -12.500C-25 -20.500 -50 -23 -56 -14C-59 -6 -46 8 -36 12C-28 14 -18 14 -12 13z" fill="url(#pDots)"/>
<path d="M-12 -11C-25 -18 -46 -20.500 -52 -14.500C-48 -9.500 -30 -6.500 -12 -6z" fill="#f3a9a5"/>
<path d="M-12 4.500C-20 6 -30 4 -34 0C-28 -1 -20 0.500 -12 1z" fill="#f3a9a5"/>
</g>
<g transform="scale(-1 1)">
<path d="M-10 9C-30 7 -50 9 -66 13L-45 29L-60.500 47C-36 42 -18 31 -6 15z" fill="url(#pDots)"/>
<path d="M-12 -12.500C-25 -20.500 -50 -23 -56 -14C-59 -6 -46 8 -36 12C-28 14 -18 14 -12 13z" fill="url(#pDots)"/>
<path d="M-12 -11C-25 -18 -46 -20.500 -52 -14.500C-48 -9.500 -30 -6.500 -12 -6z" fill="#f3a9a5"/>
<path d="M-12 4.500C-20 6 -30 4 -34 0C-28 -1 -20 0.500 -12 1z" fill="#f3a9a5"/>
</g>
</g>
<g transform="translate(408 131.5)" stroke="#e8867e" stroke-width="0.900" stroke-linejoin="round">
<g transform="scale(1 1)">
<path d="M-10 9C-30 7 -50 9 -66 13L-45 29L-60.500 47C-36 42 -18 31 -6 15z" fill="url(#pDots)"/>
<path d="M-12 -12.500C-25 -20.500 -50 -23 -56 -14C-59 -6 -46 8 -36 12C-28 14 -18 14 -12 13z" fill="url(#pDots)"/>
<path d="M-12 -11C-25 -18 -46 -20.500 -52 -14.500C-48 -9.500 -30 -6.500 -12 -6z" fill="#f3a9a5"/>
<path d="M-12 4.500C-20 6 -30 4 -34 0C-28 -1 -20 0.500 -12 1z" fill="#f3a9a5"/>
</g>
<g transform="scale(-1 1)">
<path d="M-10 9C-30 7 -50 9 -66 13L-45 29L-60.500 47C-36 42 -18 31 -6 15z" fill="url(#pDots)"/>
<path d="M-12 -12.500C-25 -20.500 -50 -23 -56 -14C-59 -6 -46 8 -36 12C-28 14 -18 14 -12 13z" fill="url(#pDots)"/>
<path d="M-12 -11C-25 -18 -46 -20.500 -52 -14.500C-48 -9.500 -30 -6.500 -12 -6z" fill="#f3a9a5"/>
<path d="M-12 4.500C-20 6 -30 4 -34 0C-28 -1 -20 0.500 -12 1z" fill="#f3a9a5"/>
</g>
</g>
<g transform="translate(695.5 132.5)" stroke="#e8867e" stroke-width="0.900" stroke-linejoin="round">
<g transform="scale(1 1)">
<path d="M-10 9C-30 7 -50 9 -66 13L-45 29L-60.500 47C-36 42 -18 31 -6 15z" fill="url(#pDots)"/>
<path d="M-12 -12.500C-25 -20.500 -50 -23 -56 -14C-59 -6 -46 8 -36 12C-28 14 -18 14 -12 13z" fill="url(#pDots)"/>
<path d="M-12 -11C-25 -18 -46 -20.500 -52 -14.500C-48 -9.500 -30 -6.500 -12 -6z" fill="#f3a9a5"/>
<path d="M-12 4.500C-20 6 -30 4 -34 0C-28 -1 -20 0.500 -12 1z" fill="#f3a9a5"/>
</g>
<g transform="scale(-1 1)">
<path d="M-10 9C-30 7 -50 9 -66 13L-45 29L-60.500 47C-36 42 -18 31 -6 15z" fill="url(#pDots)"/>
<path d="M-12 -12.500C-25 -20.500 -50 -23 -56 -14C-59 -6 -46 8 -36 12C-28 14 -18 14 -12 13z" fill="url(#pDots)"/>
<path d="M-12 -11C-25 -18 -46 -20.500 -52 -14.500C-48 -9.500 -30 -6.500 -12 -6z" fill="#f3a9a5"/>
<path d="M-12 4.500C-20 6 -30 4 -34 0C-28 -1 -20 0.500 -12 1z" fill="#f3a9a5"/>
</g>
</g>
<circle cx="-21.0" cy="158.0" r="2.400" fill="#f6f6f6" stroke="#b4b4b4" stroke-width="0.800"/>
<path d="M-22.2 164.0L-16.9 158.7L-11.6 164.0L-16.9 169.3z" fill="#e2c678" stroke="#c29c3e" stroke-width="0.800"/><path d="M-19.5 164.0L-16.9 161.4L-14.3 164.0L-16.9 166.6z" fill="#f0dfa4"/><path d="M-22.2 164.0H-11.6M-16.9 158.7V169.3" stroke="#f6ecc4" stroke-width="0.600"/>
<circle cx="-11.9" cy="171.0" r="2.400" fill="#f6f6f6" stroke="#b4b4b4" stroke-width="0.800"/>
<circle cx="-5.9" cy="178.0" r="6.300" fill="#f8efcf" stroke="#dcc88e" stroke-width="0.900"/><circle cx="-5.9" cy="178.0" r="3.800" fill="none" stroke="#e2cf98" stroke-width="0.800"/><circle cx="-5.9" cy="178.0" r="1.500" fill="none" stroke="#e2cf98" stroke-width="0.700"/>
<circle cx="2.2" cy="184.0" r="2.400" fill="#f6f6f6" stroke="#b4b4b4" stroke-width="0.800"/>
<path d="M3.9 188.0L9.2 182.7L14.5 188.0L9.2 193.3z" fill="#e2c678" stroke="#c29c3e" stroke-width="0.800"/><path d="M6.6 188.0L9.2 185.4L11.8 188.0L9.2 190.6z" fill="#f0dfa4"/><path d="M3.9 188.0H14.5M9.2 182.7V193.3" stroke="#f6ecc4" stroke-width="0.600"/>
<circle cx="16.2" cy="191.0" r="2.400" fill="#f6f6f6" stroke="#b4b4b4" stroke-width="0.800"/>
<circle cx="25.3" cy="194.0" r="6.300" fill="#f8efcf" stroke="#dcc88e" stroke-width="0.900"/><circle cx="25.3" cy="194.0" r="3.800" fill="none" stroke="#e2cf98" stroke-width="0.800"/><circle cx="25.3" cy="194.0" r="1.500" fill="none" stroke="#e2cf98" stroke-width="0.700"/>
<circle cx="35.4" cy="196.0" r="2.400" fill="#f6f6f6" stroke="#b4b4b4" stroke-width="0.800"/>
<path d="M38.7 197.0L44.0 191.7L49.3 197.0L44.0 202.3z" fill="#e2c678" stroke="#c29c3e" stroke-width="0.800"/><path d="M41.4 197.0L44.0 194.4L46.6 197.0L44.0 199.6z" fill="#f0dfa4"/><path d="M38.7 197.0H49.3M44.0 191.7V202.3" stroke="#f6ecc4" stroke-width="0.600"/>
<circle cx="-33.5" cy="149.0" r="6.300" fill="#f8efcf" stroke="#dcc88e" stroke-width="0.900"/><circle cx="-33.5" cy="149.0" r="3.800" fill="none" stroke="#e2cf98" stroke-width="0.800"/><circle cx="-33.5" cy="149.0" r="1.500" fill="none" stroke="#e2cf98" stroke-width="0.700"/>
<circle cx="-24.5" cy="149.0" r="6.300" fill="#f8efcf" stroke="#dcc88e" stroke-width="0.900"/><circle cx="-24.5" cy="149.0" r="3.800" fill="none" stroke="#e2cf98" stroke-width="0.800"/><circle cx="-24.5" cy="149.0" r="1.500" fill="none" stroke="#e2cf98" stroke-width="0.700"/>
<circle cx="125.0" cy="158.0" r="2.400" fill="#f6f6f6" stroke="#b4b4b4" stroke-width="0.800"/>
<path d="M123.7 164.0L129.0 158.7L134.3 164.0L129.0 169.3z" fill="#e2c678" stroke="#c29c3e" stroke-width="0.800"/><path d="M126.4 164.0L129.0 161.4L131.6 164.0L129.0 166.6z" fill="#f0dfa4"/><path d="M123.7 164.0H134.3M129.0 158.7V169.3" stroke="#f6ecc4" stroke-width="0.600"/>
<circle cx="134.0" cy="171.0" r="2.400" fill="#f6f6f6" stroke="#b4b4b4" stroke-width="0.800"/>
<circle cx="140.0" cy="178.0" r="6.300" fill="#f8efcf" stroke="#dcc88e" stroke-width="0.900"/><circle cx="140.0" cy="178.0" r="3.800" fill="none" stroke="#e2cf98" stroke-width="0.800"/><circle cx="140.0" cy="178.0" r="1.500" fill="none" stroke="#e2cf98" stroke-width="0.700"/>
<circle cx="148.0" cy="184.0" r="2.400" fill="#f6f6f6" stroke="#b4b4b4" stroke-width="0.800"/>
<path d="M149.6 188.0L154.9 182.7L160.2 188.0L154.9 193.3z" fill="#e2c678" stroke="#c29c3e" stroke-width="0.800"/><path d="M152.3 188.0L154.9 185.4L157.5 188.0L154.9 190.6z" fill="#f0dfa4"/><path d="M149.6 188.0H160.2M154.9 182.7V193.3" stroke="#f6ecc4" stroke-width="0.600"/>
<circle cx="161.9" cy="191.0" r="2.400" fill="#f6f6f6" stroke="#b4b4b4" stroke-width="0.800"/>
<circle cx="170.9" cy="194.0" r="6.300" fill="#f8efcf" stroke="#dcc88e" stroke-width="0.900"/><circle cx="170.9" cy="194.0" r="3.800" fill="none" stroke="#e2cf98" stroke-width="0.800"/><circle cx="170.9" cy="194.0" r="1.500" fill="none" stroke="#e2cf98" stroke-width="0.700"/>
<circle cx="180.9" cy="196.0" r="2.400" fill="#f6f6f6" stroke="#b4b4b4" stroke-width="0.800"/>
<path d="M184.2 197.0L189.5 191.7L194.8 197.0L189.5 202.3z" fill="#e2c678" stroke="#c29c3e" stroke-width="0.800"/><path d="M186.9 197.0L189.5 194.4L192.1 197.0L189.5 199.6z" fill="#f0dfa4"/><path d="M184.2 197.0H194.8M189.5 191.7V202.3" stroke="#f6ecc4" stroke-width="0.600"/>
<circle cx="109.0" cy="158.0" r="2.400" fill="#f6f6f6" stroke="#b4b4b4" stroke-width="0.800"/>
<path d="M99.6 164.0L104.9 158.7L110.2 164.0L104.9 169.3z" fill="#e2c678" stroke="#c29c3e" stroke-width="0.800"/><path d="M102.3 164.0L104.9 161.4L107.5 164.0L104.9 166.6z" fill="#f0dfa4"/><path d="M99.6 164.0H110.2M104.9 158.7V169.3" stroke="#f6ecc4" stroke-width="0.600"/>
<circle cx="99.9" cy="171.0" r="2.400" fill="#f6f6f6" stroke="#b4b4b4" stroke-width="0.800"/>
<circle cx="93.9" cy="178.0" r="6.300" fill="#f8efcf" stroke="#dcc88e" stroke-width="0.900"/><circle cx="93.9" cy="178.0" r="3.800" fill="none" stroke="#e2cf98" stroke-width="0.800"/><circle cx="93.9" cy="178.0" r="1.500" fill="none" stroke="#e2cf98" stroke-width="0.700"/>
<circle cx="85.8" cy="184.0" r="2.400" fill="#f6f6f6" stroke="#b4b4b4" stroke-width="0.800"/>
<path d="M73.5 188.0L78.8 182.7L84.1 188.0L78.8 193.3z" fill="#e2c678" stroke="#c29c3e" stroke-width="0.800"/><path d="M76.2 188.0L78.8 185.4L81.4 188.0L78.8 190.6z" fill="#f0dfa4"/><path d="M73.5 188.0H84.1M78.8 182.7V193.3" stroke="#f6ecc4" stroke-width="0.600"/>
<circle cx="71.8" cy="191.0" r="2.400" fill="#f6f6f6" stroke="#b4b4b4" stroke-width="0.800"/>
<circle cx="62.7" cy="194.0" r="6.300" fill="#f8efcf" stroke="#dcc88e" stroke-width="0.900"/><circle cx="62.7" cy="194.0" r="3.800" fill="none" stroke="#e2cf98" stroke-width="0.800"/><circle cx="62.7" cy="194.0" r="1.500" fill="none" stroke="#e2cf98" stroke-width="0.700"/>
<circle cx="52.6" cy="196.0" r="2.400" fill="#f6f6f6" stroke="#b4b4b4" stroke-width="0.800"/>
<circle cx="112.5" cy="149.0" r="6.300" fill="#f8efcf" stroke="#dcc88e" stroke-width="0.900"/><circle cx="112.5" cy="149.0" r="3.800" fill="none" stroke="#e2cf98" stroke-width="0.800"/><circle cx="112.5" cy="149.0" r="1.500" fill="none" stroke="#e2cf98" stroke-width="0.700"/>
<circle cx="121.5" cy="149.0" r="6.300" fill="#f8efcf" stroke="#dcc88e" stroke-width="0.900"/><circle cx="121.5" cy="149.0" r="3.800" fill="none" stroke="#e2cf98" stroke-width="0.800"/><circle cx="121.5" cy="149.0" r="1.500" fill="none" stroke="#e2cf98" stroke-width="0.700"/>
<circle cx="270.0" cy="158.0" r="2.400" fill="#f6f6f6" stroke="#b4b4b4" stroke-width="0.800"/>
<path d="M268.7 164.0L274.0 158.7L279.3 164.0L274.0 169.3z" fill="#e2c678" stroke="#c29c3e" stroke-width="0.800"/><path d="M271.4 164.0L274.0 161.4L276.6 164.0L274.0 166.6z" fill="#f0dfa4"/><path d="M268.7 164.0H279.3M274.0 158.7V169.3" stroke="#f6ecc4" stroke-width="0.600"/>
<circle cx="279.0" cy="171.0" r="2.400" fill="#f6f6f6" stroke="#b4b4b4" stroke-width="0.800"/>
<circle cx="285.0" cy="178.0" r="6.300" fill="#f8efcf" stroke="#dcc88e" stroke-width="0.900"/><circle cx="285.0" cy="178.0" r="3.800" fill="none" stroke="#e2cf98" stroke-width="0.800"/><circle cx="285.0" cy="178.0" r="1.500" fill="none" stroke="#e2cf98" stroke-width="0.700"/>
<circle cx="293.1" cy="184.0" r="2.400" fill="#f6f6f6" stroke="#b4b4b4" stroke-width="0.800"/>
<path d="M294.8 188.0L300.1 182.7L305.4 188.0L300.1 193.3z" fill="#e2c678" stroke="#c29c3e" stroke-width="0.800"/><path d="M297.5 188.0L300.1 185.4L302.7 188.0L300.1 190.6z" fill="#f0dfa4"/><path d="M294.8 188.0H305.4M300.1 182.7V193.3" stroke="#f6ecc4" stroke-width="0.600"/>
<circle cx="307.1" cy="191.0" r="2.400" fill="#f6f6f6" stroke="#b4b4b4" stroke-width="0.800"/>
<circle cx="316.1" cy="194.0" r="6.300" fill="#f8efcf" stroke="#dcc88e" stroke-width="0.900"/><circle cx="316.1" cy="194.0" r="3.800" fill="none" stroke="#e2cf98" stroke-width="0.800"/><circle cx="316.1" cy="194.0" r="1.500" fill="none" stroke="#e2cf98" stroke-width="0.700"/>
<circle cx="326.1" cy="196.0" r="2.400" fill="#f6f6f6" stroke="#b4b4b4" stroke-width="0.800"/>
<path d="M329.4 197.0L334.8 191.7L340.1 197.0L334.8 202.3z" fill="#e2c678" stroke="#c29c3e" stroke-width="0.800"/><path d="M332.1 197.0L334.8 194.4L337.4 197.0L334.8 199.6z" fill="#f0dfa4"/><path d="M329.4 197.0H340.1M334.8 191.7V202.3" stroke="#f6ecc4" stroke-width="0.600"/>
<circle cx="254.0" cy="158.0" r="2.400" fill="#f6f6f6" stroke="#b4b4b4" stroke-width="0.800"/>
<path d="M244.7 164.0L250.0 158.7L255.3 164.0L250.0 169.3z" fill="#e2c678" stroke="#c29c3e" stroke-width="0.800"/><path d="M247.4 164.0L250.0 161.4L252.6 164.0L250.0 166.6z" fill="#f0dfa4"/><path d="M244.7 164.0H255.3M250.0 158.7V169.3" stroke="#f6ecc4" stroke-width="0.600"/>
<circle cx="245.0" cy="171.0" r="2.400" fill="#f6f6f6" stroke="#b4b4b4" stroke-width="0.800"/>
<circle cx="239.0" cy="178.0" r="6.300" fill="#f8efcf" stroke="#dcc88e" stroke-width="0.900"/><circle cx="239.0" cy="178.0" r="3.800" fill="none" stroke="#e2cf98" stroke-width="0.800"/><circle cx="239.0" cy="178.0" r="1.500" fill="none" stroke="#e2cf98" stroke-width="0.700"/>
<circle cx="231.0" cy="184.0" r="2.400" fill="#f6f6f6" stroke="#b4b4b4" stroke-width="0.800"/>
<path d="M218.8 188.0L224.1 182.7L229.4 188.0L224.1 193.3z" fill="#e2c678" stroke="#c29c3e" stroke-width="0.800"/><path d="M221.5 188.0L224.1 185.4L226.7 188.0L224.1 190.6z" fill="#f0dfa4"/><path d="M218.8 188.0H229.4M224.1 182.7V193.3" stroke="#f6ecc4" stroke-width="0.600"/>
<circle cx="217.1" cy="191.0" r="2.400" fill="#f6f6f6" stroke="#b4b4b4" stroke-width="0.800"/>
<circle cx="208.1" cy="194.0" r="6.300" fill="#f8efcf" stroke="#dcc88e" stroke-width="0.900"/><circle cx="208.1" cy="194.0" r="3.800" fill="none" stroke="#e2cf98" stroke-width="0.800"/><circle cx="208.1" cy="194.0" r="1.500" fill="none" stroke="#e2cf98" stroke-width="0.700"/>
<circle cx="198.1" cy="196.0" r="2.400" fill="#f6f6f6" stroke="#b4b4b4" stroke-width="0.800"/>
<circle cx="257.5" cy="149.0" r="6.300" fill="#f8efcf" stroke="#dcc88e" stroke-width="0.900"/><circle cx="257.5" cy="149.0" r="3.800" fill="none" stroke="#e2cf98" stroke-width="0.800"/><circle cx="257.5" cy="149.0" r="1.500" fill="none" stroke="#e2cf98" stroke-width="0.700"/>
<circle cx="266.5" cy="149.0" r="6.300" fill="#f8efcf" stroke="#dcc88e" stroke-width="0.900"/><circle cx="266.5" cy="149.0" r="3.800" fill="none" stroke="#e2cf98" stroke-width="0.800"/><circle cx="266.5" cy="149.0" r="1.500" fill="none" stroke="#e2cf98" stroke-width="0.700"/>
<circle cx="415.4" cy="158.0" r="2.400" fill="#f6f6f6" stroke="#b4b4b4" stroke-width="0.800"/>
<path d="M414.1 164.0L419.4 158.7L424.7 164.0L419.4 169.3z" fill="#e2c678" stroke="#c29c3e" stroke-width="0.800"/><path d="M416.8 164.0L419.4 161.4L422.0 164.0L419.4 166.6z" fill="#f0dfa4"/><path d="M414.1 164.0H424.7M419.4 158.7V169.3" stroke="#f6ecc4" stroke-width="0.600"/>
<circle cx="424.4" cy="171.0" r="2.400" fill="#f6f6f6" stroke="#b4b4b4" stroke-width="0.800"/>
<circle cx="430.3" cy="178.0" r="6.300" fill="#f8efcf" stroke="#dcc88e" stroke-width="0.900"/><circle cx="430.3" cy="178.0" r="3.800" fill="none" stroke="#e2cf98" stroke-width="0.800"/><circle cx="430.3" cy="178.0" r="1.500" fill="none" stroke="#e2cf98" stroke-width="0.700"/>
<circle cx="438.3" cy="184.0" r="2.400" fill="#f6f6f6" stroke="#b4b4b4" stroke-width="0.800"/>
<path d="M439.9 188.0L445.2 182.7L450.5 188.0L445.2 193.3z" fill="#e2c678" stroke="#c29c3e" stroke-width="0.800"/><path d="M442.6 188.0L445.2 185.4L447.8 188.0L445.2 190.6z" fill="#f0dfa4"/><path d="M439.9 188.0H450.5M445.2 182.7V193.3" stroke="#f6ecc4" stroke-width="0.600"/>
<circle cx="452.2" cy="191.0" r="2.400" fill="#f6f6f6" stroke="#b4b4b4" stroke-width="0.800"/>
<circle cx="461.1" cy="194.0" r="6.300" fill="#f8efcf" stroke="#dcc88e" stroke-width="0.900"/><circle cx="461.1" cy="194.0" r="3.800" fill="none" stroke="#e2cf98" stroke-width="0.800"/><circle cx="461.1" cy="194.0" r="1.500" fill="none" stroke="#e2cf98" stroke-width="0.700"/>
<circle cx="471.0" cy="196.0" r="2.400" fill="#f6f6f6" stroke="#b4b4b4" stroke-width="0.800"/>
<path d="M474.2 197.0L479.6 191.7L484.9 197.0L479.6 202.3z" fill="#e2c678" stroke="#c29c3e" stroke-width="0.800"/><path d="M476.9 197.0L479.6 194.4L482.2 197.0L479.6 199.6z" fill="#f0dfa4"/><path d="M474.2 197.0H484.9M479.6 191.7V202.3" stroke="#f6ecc4" stroke-width="0.600"/>
<circle cx="399.5" cy="158.0" r="2.400" fill="#f6f6f6" stroke="#b4b4b4" stroke-width="0.800"/>
<path d="M390.2 164.0L395.5 158.7L400.8 164.0L395.5 169.3z" fill="#e2c678" stroke="#c29c3e" stroke-width="0.800"/><path d="M392.9 164.0L395.5 161.4L398.1 164.0L395.5 166.6z" fill="#f0dfa4"/><path d="M390.2 164.0H400.8M395.5 158.7V169.3" stroke="#f6ecc4" stroke-width="0.600"/>
<circle cx="390.5" cy="171.0" r="2.400" fill="#f6f6f6" stroke="#b4b4b4" stroke-width="0.800"/>
<circle cx="384.5" cy="178.0" r="6.300" fill="#f8efcf" stroke="#dcc88e" stroke-width="0.900"/><circle cx="384.5" cy="178.0" r="3.800" fill="none" stroke="#e2cf98" stroke-width="0.800"/><circle cx="384.5" cy="178.0" r="1.500" fill="none" stroke="#e2cf98" stroke-width="0.700"/>
<circle cx="376.4" cy="184.0" r="2.400" fill="#f6f6f6" stroke="#b4b4b4" stroke-width="0.800"/>
<path d="M364.1 188.0L369.4 182.7L374.7 188.0L369.4 193.3z" fill="#e2c678" stroke="#c29c3e" stroke-width="0.800"/><path d="M366.8 188.0L369.4 185.4L372.0 188.0L369.4 190.6z" fill="#f0dfa4"/><path d="M364.1 188.0H374.7M369.4 182.7V193.3" stroke="#f6ecc4" stroke-width="0.600"/>
<circle cx="362.4" cy="191.0" r="2.400" fill="#f6f6f6" stroke="#b4b4b4" stroke-width="0.800"/>
<circle cx="353.4" cy="194.0" r="6.300" fill="#f8efcf" stroke="#dcc88e" stroke-width="0.900"/><circle cx="353.4" cy="194.0" r="3.800" fill="none" stroke="#e2cf98" stroke-width="0.800"/><circle cx="353.4" cy="194.0" r="1.500" fill="none" stroke="#e2cf98" stroke-width="0.700"/>
<circle cx="343.4" cy="196.0" r="2.400" fill="#f6f6f6" stroke="#b4b4b4" stroke-width="0.800"/>
<circle cx="403.0" cy="149.0" r="6.300" fill="#f8efcf" stroke="#dcc88e" stroke-width="0.900"/><circle cx="403.0" cy="149.0" r="3.800" fill="none" stroke="#e2cf98" stroke-width="0.800"/><circle cx="403.0" cy="149.0" r="1.500" fill="none" stroke="#e2cf98" stroke-width="0.700"/>
<circle cx="412.0" cy="149.0" r="6.300" fill="#f8efcf" stroke="#dcc88e" stroke-width="0.900"/><circle cx="412.0" cy="149.0" r="3.800" fill="none" stroke="#e2cf98" stroke-width="0.800"/><circle cx="412.0" cy="149.0" r="1.500" fill="none" stroke="#e2cf98" stroke-width="0.700"/>
<circle cx="559.5" cy="158.0" r="2.400" fill="#f6f6f6" stroke="#b4b4b4" stroke-width="0.800"/>
<path d="M558.2 164.0L563.5 158.7L568.8 164.0L563.5 169.3z" fill="#e2c678" stroke="#c29c3e" stroke-width="0.800"/><path d="M560.9 164.0L563.5 161.4L566.1 164.0L563.5 166.6z" fill="#f0dfa4"/><path d="M558.2 164.0H568.8M563.5 158.7V169.3" stroke="#f6ecc4" stroke-width="0.600"/>
<circle cx="568.4" cy="171.0" r="2.400" fill="#f6f6f6" stroke="#b4b4b4" stroke-width="0.800"/>
<circle cx="574.3" cy="178.0" r="6.300" fill="#f8efcf" stroke="#dcc88e" stroke-width="0.900"/><circle cx="574.3" cy="178.0" r="3.800" fill="none" stroke="#e2cf98" stroke-width="0.800"/><circle cx="574.3" cy="178.0" r="1.500" fill="none" stroke="#e2cf98" stroke-width="0.700"/>
<circle cx="582.2" cy="184.0" r="2.400" fill="#f6f6f6" stroke="#b4b4b4" stroke-width="0.800"/>
<path d="M583.8 188.0L589.1 182.7L594.4 188.0L589.1 193.3z" fill="#e2c678" stroke="#c29c3e" stroke-width="0.800"/><path d="M586.5 188.0L589.1 185.4L591.7 188.0L589.1 190.6z" fill="#f0dfa4"/><path d="M583.8 188.0H594.4M589.1 182.7V193.3" stroke="#f6ecc4" stroke-width="0.600"/>
<circle cx="596.0" cy="191.0" r="2.400" fill="#f6f6f6" stroke="#b4b4b4" stroke-width="0.800"/>
<circle cx="604.9" cy="194.0" r="6.300" fill="#f8efcf" stroke="#dcc88e" stroke-width="0.900"/><circle cx="604.9" cy="194.0" r="3.800" fill="none" stroke="#e2cf98" stroke-width="0.800"/><circle cx="604.9" cy="194.0" r="1.500" fill="none" stroke="#e2cf98" stroke-width="0.700"/>
<circle cx="614.8" cy="196.0" r="2.400" fill="#f6f6f6" stroke="#b4b4b4" stroke-width="0.800"/>
<path d="M618.0 197.0L623.3 191.7L628.6 197.0L623.3 202.3z" fill="#e2c678" stroke="#c29c3e" stroke-width="0.800"/><path d="M620.7 197.0L623.3 194.4L625.9 197.0L623.3 199.6z" fill="#f0dfa4"/><path d="M618.0 197.0H628.6M623.3 191.7V202.3" stroke="#f6ecc4" stroke-width="0.600"/>
<circle cx="543.7" cy="158.0" r="2.400" fill="#f6f6f6" stroke="#b4b4b4" stroke-width="0.800"/>
<path d="M534.4 164.0L539.7 158.7L545.0 164.0L539.7 169.3z" fill="#e2c678" stroke="#c29c3e" stroke-width="0.800"/><path d="M537.1 164.0L539.7 161.4L542.3 164.0L539.7 166.6z" fill="#f0dfa4"/><path d="M534.4 164.0H545.0M539.7 158.7V169.3" stroke="#f6ecc4" stroke-width="0.600"/>
<circle cx="534.7" cy="171.0" r="2.400" fill="#f6f6f6" stroke="#b4b4b4" stroke-width="0.800"/>
<circle cx="528.8" cy="178.0" r="6.300" fill="#f8efcf" stroke="#dcc88e" stroke-width="0.900"/><circle cx="528.8" cy="178.0" r="3.800" fill="none" stroke="#e2cf98" stroke-width="0.800"/><circle cx="528.8" cy="178.0" r="1.500" fill="none" stroke="#e2cf98" stroke-width="0.700"/>
<circle cx="520.8" cy="184.0" r="2.400" fill="#f6f6f6" stroke="#b4b4b4" stroke-width="0.800"/>
<path d="M508.6 188.0L513.9 182.7L519.2 188.0L513.9 193.3z" fill="#e2c678" stroke="#c29c3e" stroke-width="0.800"/><path d="M511.3 188.0L513.9 185.4L516.5 188.0L513.9 190.6z" fill="#f0dfa4"/><path d="M508.6 188.0H519.2M513.9 182.7V193.3" stroke="#f6ecc4" stroke-width="0.600"/>
<circle cx="506.9" cy="191.0" r="2.400" fill="#f6f6f6" stroke="#b4b4b4" stroke-width="0.800"/>
<circle cx="498.0" cy="194.0" r="6.300" fill="#f8efcf" stroke="#dcc88e" stroke-width="0.900"/><circle cx="498.0" cy="194.0" r="3.800" fill="none" stroke="#e2cf98" stroke-width="0.800"/><circle cx="498.0" cy="194.0" r="1.500" fill="none" stroke="#e2cf98" stroke-width="0.700"/>
<circle cx="488.1" cy="196.0" r="2.400" fill="#f6f6f6" stroke="#b4b4b4" stroke-width="0.800"/>
<circle cx="547.1" cy="149.0" r="6.300" fill="#f8efcf" stroke="#dcc88e" stroke-width="0.900"/><circle cx="547.1" cy="149.0" r="3.800" fill="none" stroke="#e2cf98" stroke-width="0.800"/><circle cx="547.1" cy="149.0" r="1.500" fill="none" stroke="#e2cf98" stroke-width="0.700"/>
<circle cx="556.1" cy="149.0" r="6.300" fill="#f8efcf" stroke="#dcc88e" stroke-width="0.900"/><circle cx="556.1" cy="149.0" r="3.800" fill="none" stroke="#e2cf98" stroke-width="0.800"/><circle cx="556.1" cy="149.0" r="1.500" fill="none" stroke="#e2cf98" stroke-width="0.700"/>
<circle cx="703.2" cy="158.0" r="2.400" fill="#f6f6f6" stroke="#b4b4b4" stroke-width="0.800"/>
<path d="M701.9 164.0L707.2 158.7L712.5 164.0L707.2 169.3z" fill="#e2c678" stroke="#c29c3e" stroke-width="0.800"/><path d="M704.6 164.0L707.2 161.4L709.8 164.0L707.2 166.6z" fill="#f0dfa4"/><path d="M701.9 164.0H712.5M707.2 158.7V169.3" stroke="#f6ecc4" stroke-width="0.600"/>
<circle cx="712.3" cy="171.0" r="2.400" fill="#f6f6f6" stroke="#b4b4b4" stroke-width="0.800"/>
<circle cx="718.4" cy="178.0" r="6.300" fill="#f8efcf" stroke="#dcc88e" stroke-width="0.900"/><circle cx="718.4" cy="178.0" r="3.800" fill="none" stroke="#e2cf98" stroke-width="0.800"/><circle cx="718.4" cy="178.0" r="1.500" fill="none" stroke="#e2cf98" stroke-width="0.700"/>
<circle cx="726.6" cy="184.0" r="2.400" fill="#f6f6f6" stroke="#b4b4b4" stroke-width="0.800"/>
<path d="M728.4 188.0L733.7 182.7L739.0 188.0L733.7 193.3z" fill="#e2c678" stroke="#c29c3e" stroke-width="0.800"/><path d="M731.1 188.0L733.7 185.4L736.3 188.0L733.7 190.6z" fill="#f0dfa4"/><path d="M728.4 188.0H739.0M733.7 182.7V193.3" stroke="#f6ecc4" stroke-width="0.600"/>
<circle cx="740.9" cy="191.0" r="2.400" fill="#f6f6f6" stroke="#b4b4b4" stroke-width="0.800"/>
<circle cx="750.0" cy="194.0" r="6.300" fill="#f8efcf" stroke="#dcc88e" stroke-width="0.900"/><circle cx="750.0" cy="194.0" r="3.800" fill="none" stroke="#e2cf98" stroke-width="0.800"/><circle cx="750.0" cy="194.0" r="1.500" fill="none" stroke="#e2cf98" stroke-width="0.700"/>
<circle cx="760.2" cy="196.0" r="2.400" fill="#f6f6f6" stroke="#b4b4b4" stroke-width="0.800"/>
<path d="M763.7 197.0L769.0 191.7L774.3 197.0L769.0 202.3z" fill="#e2c678" stroke="#c29c3e" stroke-width="0.800"/><path d="M766.4 197.0L769.0 194.4L771.6 197.0L769.0 199.6z" fill="#f0dfa4"/><path d="M763.7 197.0H774.3M769.0 191.7V202.3" stroke="#f6ecc4" stroke-width="0.600"/>
<circle cx="687.1" cy="158.0" r="2.400" fill="#f6f6f6" stroke="#b4b4b4" stroke-width="0.800"/>
<path d="M677.8 164.0L683.1 158.7L688.4 164.0L683.1 169.3z" fill="#e2c678" stroke="#c29c3e" stroke-width="0.800"/><path d="M680.5 164.0L683.1 161.4L685.7 164.0L683.1 166.6z" fill="#f0dfa4"/><path d="M677.8 164.0H688.4M683.1 158.7V169.3" stroke="#f6ecc4" stroke-width="0.600"/>
<circle cx="678.2" cy="171.0" r="2.400" fill="#f6f6f6" stroke="#b4b4b4" stroke-width="0.800"/>
<circle cx="672.3" cy="178.0" r="6.300" fill="#f8efcf" stroke="#dcc88e" stroke-width="0.900"/><circle cx="672.3" cy="178.0" r="3.800" fill="none" stroke="#e2cf98" stroke-width="0.800"/><circle cx="672.3" cy="178.0" r="1.500" fill="none" stroke="#e2cf98" stroke-width="0.700"/>
<circle cx="664.4" cy="184.0" r="2.400" fill="#f6f6f6" stroke="#b4b4b4" stroke-width="0.800"/>
<path d="M652.2 188.0L657.5 182.7L662.8 188.0L657.5 193.3z" fill="#e2c678" stroke="#c29c3e" stroke-width="0.800"/><path d="M654.9 188.0L657.5 185.4L660.1 188.0L657.5 190.6z" fill="#f0dfa4"/><path d="M652.2 188.0H662.8M657.5 182.7V193.3" stroke="#f6ecc4" stroke-width="0.600"/>
<circle cx="650.6" cy="191.0" r="2.400" fill="#f6f6f6" stroke="#b4b4b4" stroke-width="0.800"/>
<circle cx="641.7" cy="194.0" r="6.300" fill="#f8efcf" stroke="#dcc88e" stroke-width="0.900"/><circle cx="641.7" cy="194.0" r="3.800" fill="none" stroke="#e2cf98" stroke-width="0.800"/><circle cx="641.7" cy="194.0" r="1.500" fill="none" stroke="#e2cf98" stroke-width="0.700"/>
<circle cx="631.8" cy="196.0" r="2.400" fill="#f6f6f6" stroke="#b4b4b4" stroke-width="0.800"/>
<circle cx="690.5" cy="149.0" r="6.300" fill="#f8efcf" stroke="#dcc88e" stroke-width="0.900"/><circle cx="690.5" cy="149.0" r="3.800" fill="none" stroke="#e2cf98" stroke-width="0.800"/><circle cx="690.5" cy="149.0" r="1.500" fill="none" stroke="#e2cf98" stroke-width="0.700"/>
<circle cx="699.5" cy="149.0" r="6.300" fill="#f8efcf" stroke="#dcc88e" stroke-width="0.900"/><circle cx="699.5" cy="149.0" r="3.800" fill="none" stroke="#e2cf98" stroke-width="0.800"/><circle cx="699.5" cy="149.0" r="1.500" fill="none" stroke="#e2cf98" stroke-width="0.700"/>
<circle cx="834.8" cy="158.0" r="2.400" fill="#f6f6f6" stroke="#b4b4b4" stroke-width="0.800"/>
<path d="M825.5 164.0L830.8 158.7L836.1 164.0L830.8 169.3z" fill="#e2c678" stroke="#c29c3e" stroke-width="0.800"/><path d="M828.2 164.0L830.8 161.4L833.4 164.0L830.8 166.6z" fill="#f0dfa4"/><path d="M825.5 164.0H836.1M830.8 158.7V169.3" stroke="#f6ecc4" stroke-width="0.600"/>
<circle cx="825.7" cy="171.0" r="2.400" fill="#f6f6f6" stroke="#b4b4b4" stroke-width="0.800"/>
<circle cx="819.6" cy="178.0" r="6.300" fill="#f8efcf" stroke="#dcc88e" stroke-width="0.900"/><circle cx="819.6" cy="178.0" r="3.800" fill="none" stroke="#e2cf98" stroke-width="0.800"/><circle cx="819.6" cy="178.0" r="1.500" fill="none" stroke="#e2cf98" stroke-width="0.700"/>
<circle cx="811.4" cy="184.0" r="2.400" fill="#f6f6f6" stroke="#b4b4b4" stroke-width="0.800"/>
<path d="M799.0 188.0L804.3 182.7L809.6 188.0L804.3 193.3z" fill="#e2c678" stroke="#c29c3e" stroke-width="0.800"/><path d="M801.7 188.0L804.3 185.4L806.9 188.0L804.3 190.6z" fill="#f0dfa4"/><path d="M799.0 188.0H809.6M804.3 182.7V193.3" stroke="#f6ecc4" stroke-width="0.600"/>
<circle cx="797.1" cy="191.0" r="2.400" fill="#f6f6f6" stroke="#b4b4b4" stroke-width="0.800"/>
<circle cx="788.0" cy="194.0" r="6.300" fill="#f8efcf" stroke="#dcc88e" stroke-width="0.900"/><circle cx="788.0" cy="194.0" r="3.800" fill="none" stroke="#e2cf98" stroke-width="0.800"/><circle cx="788.0" cy="194.0" r="1.500" fill="none" stroke="#e2cf98" stroke-width="0.700"/>
<circle cx="777.8" cy="196.0" r="2.400" fill="#f6f6f6" stroke="#b4b4b4" stroke-width="0.800"/>
<circle cx="838.5" cy="149.0" r="6.300" fill="#f8efcf" stroke="#dcc88e" stroke-width="0.900"/><circle cx="838.5" cy="149.0" r="3.800" fill="none" stroke="#e2cf98" stroke-width="0.800"/><circle cx="838.5" cy="149.0" r="1.500" fill="none" stroke="#e2cf98" stroke-width="0.700"/>
<circle cx="847.5" cy="149.0" r="6.300" fill="#f8efcf" stroke="#dcc88e" stroke-width="0.900"/><circle cx="847.5" cy="149.0" r="3.800" fill="none" stroke="#e2cf98" stroke-width="0.800"/><circle cx="847.5" cy="149.0" r="1.500" fill="none" stroke="#e2cf98" stroke-width="0.700"/>
<g transform="translate(118 131.5)" stroke="#e8867e" stroke-width="0.900" stroke-linejoin="round">
<path d="M-12 -14.500C-6 -13 6 -13 12 -14.500C10.500 -5 10.500 5 12 15C6 13.500 -6 13.500 -12 15C-10.500 5 -10.500 -5 -12 -14.500z" fill="url(#pDots)"/>
<path d="M-6.500 -13.500V8M-2.500 -13.500V10.500M-6.500 8C-6 11 -3 11.500 -2.500 10.500M2.500 -13.500V10.500M6.500 -13.500V8M6.500 8C6 11 3 11.500 2.500 10.500" stroke="#f0a09a" stroke-width="1.800" fill="none"/>
</g>
<g transform="translate(408 131.5)" stroke="#e8867e" stroke-width="0.900" stroke-linejoin="round">
<path d="M-12 -14.500C-6 -13 6 -13 12 -14.500C10.500 -5 10.500 5 12 15C6 13.500 -6 13.500 -12 15C-10.500 5 -10.500 -5 -12 -14.500z" fill="url(#pDots)"/>
<path d="M-6.500 -13.500V8M-2.500 -13.500V10.500M-6.500 8C-6 11 -3 11.500 -2.500 10.500M2.500 -13.500V10.500M6.500 -13.500V8M6.500 8C6 11 3 11.500 2.500 10.500" stroke="#f0a09a" stroke-width="1.800" fill="none"/>
</g>
<g transform="translate(695.5 132.5)" stroke="#e8867e" stroke-width="0.900" stroke-linejoin="round">
<path d="M-12 -14.500C-6 -13 6 -13 12 -14.500C10.500 -5 10.500 5 12 15C6 13.500 -6 13.500 -12 15C-10.500 5 -10.500 -5 -12 -14.500z" fill="url(#pDots)"/>
<path d="M-6.500 -13.500V8M-2.500 -13.500V10.500M-6.500 8C-6 11 -3 11.500 -2.500 10.500M2.500 -13.500V10.500M6.500 -13.500V8M6.500 8C6 11 3 11.500 2.500 10.500" stroke="#f0a09a" stroke-width="1.800" fill="none"/>
</g>
<path d="M338 470.700H478" stroke="#ece8e0" stroke-width="2.200" stroke-dasharray="2.200 2"/>
<path d="M346.2 470.700l3-3l3 3l-3 3z" fill="#f6ecc0" stroke="#d8c890" stroke-width="0.400"/>
<path d="M378.8 470.700l3-3l3 3l-3 3z" fill="#f6ecc0" stroke="#d8c890" stroke-width="0.400"/>
<path d="M431 470.700l3-3l3 3l-3 3z" fill="#f6ecc0" stroke="#d8c890" stroke-width="0.400"/>
<path d="M462.8 470.700l3-3l3 3l-3 3z" fill="#f6ecc0" stroke="#d8c890" stroke-width="0.400"/>
<path d="M365.7 471.500c-1-4.500-5.500-4-5-1c.5 2.500 3.500 2 5 1c1-4.500 5.500-4 5-1c-.5 2.500-3.500 2-5 1l-2.500 12M365.7 471.500l3.500 10.500" stroke="#3c4c8c" stroke-width="1.400" fill="none"/>
<path d="M449.7 471.500c-1-4.500-5.500-4-5-1c.5 2.500 3.500 2 5 1c1-4.500 5.500-4 5-1c-.5 2.500-3.500 2-5 1l-2.500 12M449.7 471.500l3.500 10.500" stroke="#3c4c8c" stroke-width="1.400" fill="none"/>
<path d="M407.200 477c-6.500 0-9.500 5-10.500 12c-.6 5-1.800 8.500-4.500 11.500c4 4 26 4 30 0c-2.700-3-3.900-6.500-4.500-11.500c-1-7-4-12-10.500-12z" fill="url(#pBell)" stroke="#d8c080" stroke-width="0.900"/>
<ellipse cx="407.200" cy="505.600" rx="19.600" ry="7.900" fill="#ecd994" stroke="#cfb260" stroke-width="0.900"/><ellipse cx="407.600" cy="506.700" rx="14.400" ry="4.500" fill="#c4a654"/><path d="M396 503.500v6.500M399 502.800v7.700M402 502.400v8.500M405 502.200v9M410 502.200v9M413 502.400v8.500M416 502.800v7.700M419 503.500v6.500" stroke="#d8c078" stroke-width="0.800"/><circle cx="407.600" cy="506.200" r="2" fill="#f8f0d0"/>
<g stroke="#ec9088" stroke-width="0.800" stroke-linejoin="round">
<g transform="translate(407.900 0) scale(1 1) translate(-407.900 0)">
<path d="M404 475c-8 0-16 0-22.500 1l8 6l-3.500 7.500c9-2 15-7 19-13z" fill="#fbdcd8"/>
<path d="M403 467.500c-6-4.500-16-7-18.500-3.500c-1 4 7 9 18.500 9z" fill="#fbdcd8"/>
<path d="M403 468.500c-5-3-12-5-15-3.500c2 2.500 8 4 15 4.500z" fill="#f4a8a0" stroke="none"/>
</g>
<g transform="translate(407.900 0) scale(-1 1) translate(-407.900 0)">
<path d="M404 475c-8 0-16 0-22.500 1l8 6l-3.500 7.500c9-2 15-7 19-13z" fill="#fbdcd8"/>
<path d="M403 467.500c-6-4.500-16-7-18.500-3.500c-1 4 7 9 18.500 9z" fill="#fbdcd8"/>
<path d="M403 468.500c-5-3-12-5-15-3.500c2 2.500 8 4 15 4.500z" fill="#f4a8a0" stroke="none"/>
</g>
<rect x="402.800" y="466.200" width="10.200" height="11.300" rx="1.500" fill="#f9c8c2"/><path d="M405.500 467v7M408 467v9M410.500 467v7" stroke="#f4a8a0" stroke-width="1.200" fill="none"/>
</g>
<path d="M418.500 462.500l4 4M422.500 462.500l-4 4" stroke="#2c8c90" stroke-width="1.200"/>
<g id="chart">
<linearGradient id="cg0" x1="0" y1="0" x2="0" y2="1"><stop offset="0.020" stop-color="#e8f2ee"/><stop offset="0.46" stop-color="#3c8c78"/><stop offset="1" stop-color="#0c3c2c"/></linearGradient>
<rect x="48.00" y="321.50" width="9.23" height="156.00" fill="url(#cg0)" />
<linearGradient id="cg1" x1="0" y1="0" x2="0" y2="1"><stop offset="0.020" stop-color="#e0f2e2"/><stop offset="0.46" stop-color="#00a050"/><stop offset="1" stop-color="#083c20"/></linearGradient>
<rect x="57.23" y="321.50" width="9.23" height="156.00" fill="url(#cg1)" />
<linearGradient id="cg2" x1="0" y1="0" x2="0" y2="1"><stop offset="0.020" stop-color="#eef6e0"/><stop offset="0.46" stop-color="#a0d060"/><stop offset="1" stop-color="#2c6c30"/></linearGradient>
<rect x="66.46" y="321.50" width="9.23" height="156.00" fill="url(#cg2)" />
<linearGradient id="cg3" x1="0" y1="0" x2="0" y2="1"><stop offset="0.020" stop-color="#f2f6d8"/><stop offset="0.46" stop-color="#a8d018"/><stop offset="1" stop-color="#44581c"/></linearGradient>
<rect x="75.69" y="321.50" width="9.23" height="156.00" fill="url(#cg3)" />
<linearGradient id="cg4" x1="0" y1="0" x2="0" y2="1"><stop offset="0.020" stop-color="#e4e8f2"/><stop offset="0.46" stop-color="#586c9c"/><stop offset="1" stop-color="#141c38"/></linearGradient>
<rect x="84.92" y="321.50" width="9.23" height="156.00" fill="url(#cg4)" />
<linearGradient id="cg5" x1="0" y1="0" x2="0" y2="1"><stop offset="0.020" stop-color="#e0e0f2"/><stop offset="0.46" stop-color="#28289c"/><stop offset="1" stop-color="#0a0a2c"/></linearGradient>
<rect x="94.15" y="321.50" width="9.23" height="156.00" fill="url(#cg5)" />
<linearGradient id="cg6" x1="0" y1="0" x2="0" y2="1"><stop offset="0.020" stop-color="#dceefa"/><stop offset="0.46" stop-color="#0098e0"/><stop offset="1" stop-color="#103c64"/></linearGradient>
<rect x="103.38" y="321.50" width="9.23" height="156.00" fill="url(#cg6)" />
<linearGradient id="cg7" x1="0" y1="0" x2="0" y2="1"><stop offset="0.020" stop-color="#eef6fc"/><stop offset="0.46" stop-color="#a0d8f8"/><stop offset="1" stop-color="#1c6cb0"/></linearGradient>
<rect x="112.61" y="321.50" width="9.23" height="156.00" fill="url(#cg7)" />
<linearGradient id="cg8" x1="0" y1="0" x2="0" y2="1"><stop offset="0.020" stop-color="#fffce0"/><stop offset="0.46" stop-color="#fff000"/><stop offset="1" stop-color="#a87818"/></linearGradient>
<rect x="121.84" y="321.50" width="9.23" height="156.00" fill="url(#cg8)" />
<linearGradient id="cg9" x1="0" y1="0" x2="0" y2="1"><stop offset="0.020" stop-color="#feeed4"/><stop offset="0.46" stop-color="#f08c10"/><stop offset="1" stop-color="#6c3c14"/></linearGradient>
<rect x="131.07" y="321.50" width="9.23" height="156.00" fill="url(#cg9)" />
<linearGradient id="cg10" x1="0" y1="0" x2="0" y2="1"><stop offset="0.020" stop-color="#f4e2ee"/><stop offset="0.46" stop-color="#bc4c94"/><stop offset="1" stop-color="#30102a"/></linearGradient>
<rect x="140.30" y="321.50" width="9.23" height="156.00" fill="url(#cg10)" />
<linearGradient id="cg11" x1="0" y1="0" x2="0" y2="1"><stop offset="0.020" stop-color="#fce0d4"/><stop offset="0.46" stop-color="#e81010"/><stop offset="1" stop-color="#4c0c0c"/></linearGradient>
<rect x="149.53" y="321.50" width="9.23" height="156.00" fill="url(#cg11)" />
<linearGradient id="cg12" x1="0" y1="0" x2="0" y2="1"><stop offset="0.020" stop-color="#fdf0ee"/><stop offset="0.46" stop-color="#f8b0a8"/><stop offset="1" stop-color="#d42c2c"/></linearGradient>
<rect x="158.76" y="321.50" width="9.23" height="156.00" fill="url(#cg12)" />
<linearGradient id="cg13" x1="0" y1="0" x2="0" y2="1"><stop offset="0.020" stop-color="#fef4e2"/><stop offset="0.46" stop-color="#f8d090"/><stop offset="1" stop-color="#b8801c"/></linearGradient>
<rect x="167.99" y="321.50" width="9.23" height="156.00" fill="url(#cg13)" />
<linearGradient id="cg14" x1="0" y1="0" x2="0" y2="1"><stop offset="0.020" stop-color="#ecdccc"/><stop offset="0.46" stop-color="#8c5030"/><stop offset="1" stop-color="#2c1408"/></linearGradient>
<rect x="177.22" y="321.50" width="9.23" height="156.00" fill="url(#cg14)" />
<linearGradient id="cg15" x1="0" y1="0" x2="0" y2="1"><stop offset="0.020" stop-color="#f8ecd2"/><stop offset="0.46" stop-color="#d8b060"/><stop offset="1" stop-color="#5c3c14"/></linearGradient>
<rect x="186.45" y="321.50" width="9.23" height="156.00" fill="url(#cg15)" />
<linearGradient id="cg16" x1="0" y1="0" x2="0" y2="1"><stop offset="0.020" stop-color="#d4d0cc"/><stop offset="0.36" stop-color="#000000"/><stop offset="1" stop-color="#000000"/></linearGradient>
<rect x="195.68" y="321.50" width="9.23" height="156.00" fill="url(#cg16)" />
<linearGradient id="cg17" x1="0" y1="0" x2="0" y2="1"><stop offset="0.020" stop-color="#f4f4f4"/><stop offset="0.46" stop-color="#a0a0a0"/><stop offset="1" stop-color="#282828"/></linearGradient>
<rect x="204.91" y="321.50" width="9.23" height="156.00" fill="url(#cg17)" />
<linearGradient id="cg18" x1="0" y1="0" x2="0" y2="1"><stop offset="0.020" stop-color="#ffffff"/><stop offset="0.46" stop-color="#ffffff"/><stop offset="1" stop-color="#b0b0b0"/></linearGradient>
<rect x="214.14" y="321.50" width="9.23" height="156.00" fill="url(#cg18)" />
<linearGradient id="cgL" x1="0" y1="0" x2="0" y2="1"><stop offset="0" stop-color="#fffbe0"/><stop offset="0.450" stop-color="#ffd400"/><stop offset="0.750" stop-color="#d49a10"/><stop offset="1" stop-color="#8c4a18"/></linearGradient>
<rect x="39.50" y="321.50" width="7.50" height="156.00" fill="url(#cgL)" />
<path d="M48.0 321.5V477.5 M57.2 321.5V477.5 M66.5 321.5V477.5 M75.7 321.5V477.5 M84.9 321.5V477.5 M94.2 321.5V477.5 M103.4 321.5V477.5 M112.6 321.5V477.5 M121.8 321.5V477.5 M131.1 321.5V477.5 M140.3 321.5V477.5 M149.5 321.5V477.5 M158.8 321.5V477.5 M168.0 321.5V477.5 M177.2 321.5V477.5 M186.5 321.5V477.5 M195.7 321.5V477.5 M204.9 321.5V477.5 M214.1 321.5V477.5 M223.4 321.5V477.5 M39.500 321.5H223.4 M39.500 327.1H223.4 M39.500 332.6H223.4 M39.500 338.2H223.4 M39.500 343.8H223.4 M39.500 349.4H223.4 M39.500 354.9H223.4 M39.500 360.5H223.4 M39.500 366.1H223.4 M39.500 371.6H223.4 M39.500 377.2H223.4 M39.500 382.8H223.4 M39.500 388.3H223.4 M39.500 393.9H223.4 M39.500 399.5H223.4 M39.500 405.1H223.4 M39.500 410.6H223.4 M39.500 416.2H223.4 M39.500 421.8H223.4 M39.500 427.3H223.4 M39.500 432.9H223.4 M39.500 438.5H223.4 M39.500 444.0H223.4 M39.500 449.6H223.4 M39.500 455.2H223.4 M39.500 460.8H223.4 M39.500 466.3H223.4 M39.500 471.9H223.4 M39.500 477.5H223.4" stroke="#fff" stroke-width="0.700" stroke-opacity="0.450"/>
<rect x="47.00" y="321.50" width="1.00" height="156.00" fill="#fff" />
<rect x="48.00" y="321.50" width="175.00" height="32.90" fill="none" stroke="#333" stroke-width="0.9" />
<rect x="48.00" y="388.20" width="175.00" height="16.20" fill="none" stroke="#111" stroke-width="0.9" />
<rect x="48.00" y="437.60" width="175.00" height="34.40" fill="none" stroke="#444" stroke-width="0.9" />
<rect x="48.00" y="334.30" width="175.00" height="7.50" fill="none" stroke="#e8283c" stroke-width="0.9" />
<rect x="48.00" y="367.90" width="175.00" height="6.90" fill="none" stroke="#e8283c" stroke-width="0.9" />
<rect x="48.00" y="417.90" width="175.00" height="6.90" fill="none" stroke="#e8283c" stroke-width="0.9" />
<rect x="48.00" y="451.00" width="175.00" height="7.30" fill="none" stroke="#e8283c" stroke-width="0.9" />
<text x="48.0" y="320.3" font-size="7.5" fill="#000" textLength="50.0" lengthAdjust="spacingAndGlyphs" font-weight="bold" >2 0 1 5 0 4 0 6</text>
</g>
<rect x="48.00" y="478.00" width="87.00" height="19.60" fill="url(#pBrown)" />
<rect x="135.00" y="478.00" width="88.60" height="19.60" fill="url(#pBrown2)" />
<path d="M56 478v19.600M69 478v19.600M82 478v19.600M95 478v19.600M108 478v19.600M121 478v19.600M134 478v19.600M48 491h87" stroke="#fbf3dc" stroke-width="0.900" stroke-dasharray="2.200 1"/>
<path d="M135 478l19.600 19.600M154.600 478l19.600 19.600M174.200 478l19.600 19.600M193.800 478l19.600 19.600M213.400 478l10 10M154.600 478l-19.600 19.600M174.200 478l-19.600 19.600M193.800 478l-19.600 19.600M213.400 478l-19.600 19.600M223.600 487.500l-10 10" stroke="#f6efd8" stroke-width="1.100"/>
<rect x="48.00" y="497.60" width="175.60" height="20.40" fill="#f06840" />
<rect x="135.00" y="518.00" width="88.60" height="20.50" fill="url(#pOrDot)" />
<rect x="48.00" y="518.00" width="87.00" height="20.50" fill="url(#pOrDot)" />
<rect x="48.00" y="538.50" width="87.00" height="12.00" fill="url(#pOrV)" />
<rect x="135.00" y="538.50" width="88.60" height="12.00" fill="url(#pOrD)" />
<path d="M48 510.500H135" stroke="#fde8dc" stroke-width="1" stroke-dasharray="4 1.500"/>
<circle cx="138.0" cy="501.0" r="0.500" fill="#fde8dc"/>
<circle cx="143.7" cy="508.0" r="0.500" fill="#fde8dc"/>
<circle cx="149.4" cy="515.0" r="0.500" fill="#fde8dc"/>
<circle cx="153.0" cy="507.0" r="0.500" fill="#fde8dc"/>
<circle cx="158.7" cy="514.0" r="0.500" fill="#fde8dc"/>
<circle cx="164.4" cy="506.0" r="0.500" fill="#fde8dc"/>
<circle cx="168.0" cy="513.0" r="0.500" fill="#fde8dc"/>
<circle cx="173.7" cy="505.0" r="0.500" fill="#fde8dc"/>
<circle cx="179.4" cy="512.0" r="0.500" fill="#fde8dc"/>
<circle cx="183.0" cy="504.0" r="0.500" fill="#fde8dc"/>
<circle cx="188.7" cy="511.0" r="0.500" fill="#fde8dc"/>
<circle cx="194.4" cy="503.0" r="0.500" fill="#fde8dc"/>
<circle cx="198.0" cy="510.0" r="0.500" fill="#fde8dc"/>
<circle cx="203.7" cy="502.0" r="0.500" fill="#fde8dc"/>
<circle cx="209.4" cy="509.0" r="0.500" fill="#fde8dc"/>
<circle cx="213.0" cy="501.0" r="0.500" fill="#fde8dc"/>
<circle cx="218.7" cy="508.0" r="0.500" fill="#fde8dc"/>
<circle cx="224.4" cy="515.0" r="0.500" fill="#fde8dc"/>
<path d="M48 497.600H223.600M48 518H223.600M48 538.500H223.600M135 497.600V550" stroke="#b8401c" stroke-width="0.900"/>
<path d="M649.100 418.100L702 468H598z" fill="url(#pFrame)" stroke="#5c2c18" stroke-width="0.800"/>
<path d="M649 426L685.900 463H615.300z" fill="#fff100"/>
<rect x="598.00" y="467.90" width="104.00" height="90.00" fill="#5e2d18" />
<rect x="602.80" y="473.20" width="94.20" height="5.80" fill="url(#pFrame)" />
<rect x="602.80" y="473.20" width="5.20" height="80.00" fill="url(#pFrame)" />
<rect x="691.70" y="473.20" width="5.30" height="50.00" fill="url(#pFrame)" />
<rect x="646.50" y="473.20" width="6.10" height="80.00" fill="url(#pFrame)" />
<rect x="602.80" y="517.00" width="94.20" height="6.80" fill="url(#pFrame)" />
<rect x="608.00" y="479.00" width="38.50" height="38.00" fill="#fff100" />
<rect x="608.00" y="523.80" width="38.50" height="30.00" fill="#2c302c" />
<path d="M664.8 265.3 Q661.0 284.0 644.8 284.9 Q648.0 306.0 628.0 315.8 Q635.0 340.0 620.5 354.0 Q634.0 388.0 635.8 409.0 Q659.0 424.0 664.8 441.4 Q670.6 424.0 693.8 409.0 Q695.6 388.0 709.1 354.0 Q694.6 340.0 701.6 315.8 Q681.6 306.0 684.8 284.9 Q668.6 284.0 664.8 265.3z" fill="#9dbdb1" stroke="#3e7264" stroke-width="1"/>
<path d="M664.800 265.300V441.400M664.800 307L620.500 264M664.800 307L709.400 264M664.800 354L628 309M664.800 354L702 309M664.800 397L620.500 354M664.800 397L709.400 354M664.800 441.400L620.500 397M664.800 441.400L709.400 397" stroke="#2a3c38" stroke-width="0.900" fill="none"/>
<path d="M768.300 271Q766 290 747.300 291Q750 310 730.700 321Q737 344 723.300 360Q738 393 739.300 417.300Q763 430 768.300 448.300H775V271z" fill="#4a9280" stroke="#2e7060" stroke-width="0.900"/>
<path d="M768.300 271Q766 290 747.300 291L768.300 315z" fill="#9cbfb2"/>
<path d="M730.700 321Q737 344 723.300 360L768.300 401.700V358.300z" fill="#9cbfb2"/>
<path d="M768.300 315h6.500v43.300h-6.500zM768.300 401.700h6.500v46.600h-4z" fill="#9cbfb2"/>
<path d="M768.300 271V448.300M768.300 315L747.300 291M768.300 358.300L730.700 321M768.300 401.700L723.300 360" stroke="#2e7060" stroke-width="0.800" fill="none"/>
<circle cx="583.500" cy="112.500" r="8.300" fill="none" stroke="#4e6e12" stroke-width="5.600"/>
<circle cx="591.6" cy="114.1" r="2.200" fill="#98c212"/>
<circle cx="589.1" cy="118.6" r="2.200" fill="#98c212"/>
<circle cx="584.4" cy="120.7" r="2.200" fill="#98c212"/>
<circle cx="579.4" cy="119.7" r="2.200" fill="#98c212"/>
<circle cx="575.9" cy="115.9" r="2.200" fill="#98c212"/>
<circle cx="575.4" cy="110.9" r="2.200" fill="#98c212"/>
<circle cx="577.9" cy="106.4" r="2.200" fill="#98c212"/>
<circle cx="582.6" cy="104.3" r="2.200" fill="#98c212"/>
<circle cx="587.6" cy="105.3" r="2.200" fill="#98c212"/>
<circle cx="591.1" cy="109.1" r="2.200" fill="#98c212"/>
<g transform="translate(0.200 -2.700)">
<circle cx="591.300" cy="239.700" r="9.500" fill="none" stroke="#c4c4c4" stroke-width="6.300"/><circle cx="591.300" cy="239.700" r="9.500" fill="none" stroke="#333" stroke-width="6.300" stroke-dasharray="0.700 1.600"/>
<circle cx="602.7" cy="240.8" r="1.400" fill="#f4e800" stroke="#7a7400" stroke-width="0.300"/>
<circle cx="600.1" cy="244.5" r="1.400" fill="#f4e800" stroke="#7a7400" stroke-width="0.300"/>
<circle cx="597.5" cy="249.4" r="1.400" fill="#f4e800" stroke="#7a7400" stroke-width="0.300"/>
<circle cx="591.3" cy="248.7" r="1.400" fill="#f4e800" stroke="#7a7400" stroke-width="0.300"/>
<circle cx="585.5" cy="249.6" r="1.400" fill="#f4e800" stroke="#7a7400" stroke-width="0.300"/>
<circle cx="582.7" cy="244.9" r="1.400" fill="#f4e800" stroke="#7a7400" stroke-width="0.300"/>
<circle cx="579.9" cy="241.3" r="1.400" fill="#f4e800" stroke="#7a7400" stroke-width="0.300"/>
<circle cx="581.9" cy="236.2" r="1.400" fill="#f4e800" stroke="#7a7400" stroke-width="0.300"/>
<circle cx="600.6" cy="236.0" r="1.400" fill="#f4e800" stroke="#7a7400" stroke-width="0.300"/>
<circle cx="595.3" cy="244.8" r="1.400" fill="#f4e800" stroke="#7a7400" stroke-width="0.300"/>
<circle cx="587.5" cy="245.0" r="1.400" fill="#f4e800" stroke="#7a7400" stroke-width="0.300"/>
<rect x="589.700" y="234.500" width="3.200" height="9" fill="#c4b000" stroke="#665c00" stroke-width="0.400"/><path d="M591.300 231.500l1.600 3h-3.200z" fill="#f4e800" stroke="#333" stroke-width="0.300"/>
<path d="M591.500 226.500c-3-5-9-7-12-5.500l2.500 5l-3.500 2.500l4.500.5l1.500 4.500c2-3 5-5 7-7zM591.500 226.500c3-5 9-7 12-5.500l-2.500 5l3.500 2.500l-4.500.500l-1.500 4.500c-2-3-5-5-7-7z" fill="#f08a62" stroke="#b85030" stroke-width="0.600"/><rect x="589.500" y="221.500" width="4" height="6" rx="1" fill="#f08a62" stroke="#b85030" stroke-width="0.600"/>
</g>
</g>
<g id="handles">
<rect x="225.00" y="349.50" width="5.50" height="5.50" fill="#000" />
<rect x="611.50" y="349.50" width="5.50" height="5.50" fill="#000" />
<rect x="225.00" y="462.10" width="5.50" height="5.50" fill="#000" />
<rect x="416.50" y="349.50" width="5.00" height="5.00" fill="#5a9ad8" stroke="#246" stroke-width="0.6" />
<rect x="610.00" y="462.00" width="5.00" height="5.00" fill="#7ab4e8" stroke="#48a" stroke-width="0.5" />
<circle cx="233.500" cy="358" r="1.500" fill="#fff" stroke="#000" stroke-width="0.700"/><circle cx="609" cy="358" r="1.500" fill="#fff" stroke="#000" stroke-width="0.700"/>
</g>
<g id="scroll">
<rect x="774.50" y="108.00" width="13.00" height="442.00" fill="#f2f2f2" />
<rect x="787.50" y="92.00" width="0.80" height="473.00" fill="#dcdcdc" />
<rect x="774.50" y="108.00" width="1.00" height="442.00" fill="#e0e0e0" />
<path d="M777.500 117.500l3-3.500l3 3.500z" fill="#444"/>
<rect x="775.50" y="232.00" width="11.00" height="195.00" fill="url(#gThumbV)" stroke="#b4b4b4" stroke-width="1" rx="2.5" />
<path d="M778.500 327.500h5M778.500 329.500h5M778.500 331.500h5" stroke="#666" stroke-width="0.800"/>
<path d="M777.500 541l3 3.500l3-3.500z" fill="#444"/>
<rect x="774.50" y="549.50" width="15.50" height="15.00" fill="#e8e8e8" />
<circle cx="779.500" cy="554.500" r="3.600" fill="#f4f8ff" stroke="#556" stroke-width="1"/><path d="M782 557.500l3.500 3.500" stroke="#334" stroke-width="1.600"/>
<rect x="40.00" y="549.50" width="734.50" height="15.00" fill="#f0f0f0" />
<rect x="40.00" y="549.50" width="734.50" height="1.00" fill="#d8d8d8" />
<path d="M41 551.500h5.500l2.500 2.500v8h-8z" fill="#fff" stroke="#222" stroke-width="1"/><path d="M43 557.500h4M45 555.500v4" stroke="#222" stroke-width="1"/>
<path d="M56.500 553v8" stroke="#777" stroke-width="1.200"/><path d="M62 553l-4.500 4l4.500 4z" fill="#777"/>
<path d="M76 553l-4.500 4l4.500 4z" fill="#777"/>
<text x="103.0" y="562.0" font-size="10.5" fill="#222" text-anchor="middle" >1 / 1</text>
<path d="M133.500 553l4.500 4l-4.500 4z" fill="#777"/>
<path d="M144.500 553l4.500 4l-4.500 4z" fill="#777"/><path d="M150.500 553v8" stroke="#777" stroke-width="1.200"/>
<path d="M157 551.500h5.500l2.500 2.500v8h-8z" fill="#fff" stroke="#222" stroke-width="1"/><path d="M159 557.500h4M161 555.500v4" stroke="#222" stroke-width="1"/>
<path d="M169.500 550.500h51l5 11.500h-56z" fill="url(#gTab)" stroke="#8ab4d8" stroke-width="0.800"/>
<text x="182.0" y="561.0" font-size="10.5" fill="#223" textLength="30.0" lengthAdjust="spacingAndGlyphs" >ページ 1</text>
<path d="M409.500 553v9M411 553.500v9" stroke="#999" stroke-width="0.800" stroke-dasharray="1 1"/>
<rect x="413.50" y="550.50" width="1.00" height="13.50" fill="#cfcfcf" />
<rect x="414.50" y="550.50" width="360.00" height="13.50" fill="#f6f6f6" />
<path d="M419 557l3.500-3v6z" fill="#444"/>
<rect x="475.00" y="551.50" width="230.00" height="11.50" fill="url(#gThumbH)" stroke="#b0b0b0" stroke-width="1" rx="2.5" />
<path d="M587 555v4M589 555v4M591 555v4" stroke="#666" stroke-width="0.800"/>
<path d="M769 557.500l-3.500-3v6z" fill="#444"/>
</g>
<g id="status">
<rect x="0.00" y="564.50" width="1000.00" height="36.50" fill="#f0f0f0" />
<rect x="0.00" y="564.50" width="1000.00" height="1.00" fill="#fbfbfb" />
<rect x="0.00" y="599.50" width="1000.00" height="1.50" fill="#333" />
<text x="4.0" y="577.3" font-size="10.5" fill="#222" textLength="75.0" lengthAdjust="spacingAndGlyphs" >( 198.742, 67.882 )</text>
<path d="M93 569.500l5 4l-5 4z" fill="#111"/>
<text x="422.5" y="578.0" font-size="11" fill="#222" textLength="48.5" lengthAdjust="spacingAndGlyphs" >長方形 背景</text>
<text x="4.0" y="594.2" font-size="10.5" fill="#222" textLength="114.0" lengthAdjust="spacingAndGlyphs" >ドキュメントのカラー プロファイル:</text>
<text x="121.0" y="594.2" font-size="10.5" fill="#222" textLength="225.5" lengthAdjust="spacingAndGlyphs" >RGB: sRGB IEC61966-2.1; CMYK: Japan Color 2001 Coated;</text>
<text x="349.0" y="594.2" font-size="10.5" fill="#222" textLength="51.5" lengthAdjust="spacingAndGlyphs" >グレースケール</text>
<text x="400.5" y="594.2" font-size="10.5" fill="#222" textLength="58.0" lengthAdjust="spacingAndGlyphs" >: Dot Gain 15%</text>
<path d="M464.500 586l5 4l-5 4z" fill="#111"/>
<path d="M10 600.500q10.500 -4 21 0" fill="none" stroke="#8aa4d0" stroke-width="1.200"/>
<rect x="802.500" y="569" width="11" height="8" fill="#c8d4ec" stroke="#556" stroke-width="1"/><circle cx="808" cy="573" r="2" fill="#fff" stroke="#a33" stroke-width="0.800"/><path d="M805 579.500h6" stroke="#556" stroke-width="1.200"/>
<rect x="833.00" y="568.00" width="1.00" height="13.00" fill="#cfcfcf" />
<path d="M837 574l5-5l6 6l-5 5.500z" fill="#fff" stroke="#334" stroke-width="1"/><path d="M838.500 576l7 .5l-3 4z" fill="#e87818"/><path d="M847.500 574.500c1.500 1.500 2 3.500 1.500 5" stroke="#e87818" stroke-width="1.300" fill="none"/>
<rect x="853.60" y="568.00" width="13.00" height="13.30" fill="#c56aac" />
<rect x="853.60" y="568.00" width="6.50" height="6.60" fill="#d48cc0" />
<rect x="860.10" y="574.60" width="6.50" height="6.70" fill="#d48cc0" />
<text x="869.7" y="578.5" font-size="10.5" fill="#222" textLength="44.5" lengthAdjust="spacingAndGlyphs" >2 色パターン</text>
<path d="M842 585.500c-1.800 1.800-2.600 3.800-2.600 6l1.300 2.300h2.600l1.300-2.300c0-2.200-.8-4.200-2.600-6z" fill="#fff" stroke="#334" stroke-width="0.900"/><circle cx="842" cy="591.500" r="0.800" fill="#334"/><path d="M839 596.500h6" stroke="#334" stroke-width="1.100"/>
<rect x="853.60" y="584.80" width="13.00" height="12.80" fill="#a3387c" />
<text x="869.7" y="595.0" font-size="10.5" fill="#222" textLength="110.0" lengthAdjust="spacingAndGlyphs" >C:25 M:82 Y:7 K:25  0.750 pt</text>
</g>
<g id="docker">
<rect x="788.00" y="92.00" width="170.00" height="473.00" fill="#f0f0f0" />
<rect x="788.00" y="92.70" width="168.50" height="16.30" fill="url(#gHdr)" />
<text x="795.5" y="105.0" font-size="11.5" fill="#1c2c5c" textLength="105.0" lengthAdjust="spacingAndGlyphs" >オブジェクト マネージャ</text>
<text x="914.0" y="105.0" font-size="12" fill="#334" textLength="8.0" lengthAdjust="spacingAndGlyphs" >»</text>
<rect x="927.50" y="94.50" width="11.50" height="12.00" fill="url(#gBtnBlue)" stroke="#6a8ab8" stroke-width="1" rx="2" />
<rect x="930.00" y="102.50" width="6.50" height="2.00" fill="#fff" stroke="#557" stroke-width="0.6" />
<rect x="942.00" y="94.50" width="12.00" height="12.00" fill="url(#gBtnRed)" stroke="#a03828" stroke-width="1" rx="2" />
<path d="M945 97.500l6 6M951 97.500l-6 6" stroke="#fff" stroke-width="2"/>
<rect x="792.50" y="114.50" width="16.00" height="16.00" fill="#e8efe8" stroke="#999" stroke-width="1" rx="2" />
<path d="M795 119.500h2M795 123h2M795 126.500h2" stroke="#3a8a3a" stroke-width="1.200"/><path d="M798.500 118.500l6-1.500M798.500 122l6-1.500M798.500 125.500l6-1.500M798.500 128.500l6-1.500" stroke="#556" stroke-width="1"/>
<rect x="811.50" y="114.50" width="16.00" height="16.00" fill="url(#gBtnBlue)" stroke="#5a8ac0" stroke-width="1" rx="2" />
<path d="M814 118.500l6-1M814 122l6-1M814 125.500l10-1.500M814 128.500l10-1.500" stroke="#556" stroke-width="0.900"/><path d="M817.500 125l6-7l2 2l-6 6.500z" fill="#223"/>
<rect x="830.00" y="114.50" width="16.00" height="16.00" fill="url(#gBtnBlue)" stroke="#5a8ac0" stroke-width="1" rx="2" />
<path d="M832.500 118.500l10-1.500M832.500 122l10-1.500M832.500 125.500l10-1.500M832.500 128.500l10-1.500" stroke="#556" stroke-width="0.900"/><ellipse cx="839" cy="120.500" rx="3.500" ry="2.200" fill="#fff" stroke="#334" stroke-width="0.800"/><circle cx="839" cy="120.500" r="1.100" fill="#223"/>
<text x="858.0" y="119.5" font-size="10" fill="#222" textLength="24.0" lengthAdjust="spacingAndGlyphs" >ページ:</text>
<text x="858.0" y="130.5" font-size="10" fill="#222" textLength="30.0" lengthAdjust="spacingAndGlyphs" >ページ 1</text>
<rect x="923.50" y="115.50" width="11.50" height="12.00" fill="#fafafa" stroke="#999" stroke-width="1" rx="1.5" />
<path d="M927.500 118.500l4 3l-4 3z" fill="#111"/>
<rect x="791.40" y="134.60" width="143.60" height="406.00" fill="#fff" stroke="#8a8a8a" stroke-width="1" />
<ellipse cx="815.600" cy="142.7" rx="4.500" ry="2.800" fill="#9a9aa4" stroke="#667" stroke-width="0.700"/><ellipse cx="815.600" cy="141.7" rx="4" ry="1.800" fill="#d4d4dc"/>
<path d="M823.5 143.2h7v3.500h-7z" fill="#dde" stroke="#889" stroke-width="0.600"/><circle cx="827" cy="141.7" r="3.300" fill="#fff" fill-opacity="0.500" stroke="#d81818" stroke-width="1.500"/><path d="M824.7 144.0l4.600-4.600" stroke="#d81818" stroke-width="1.500"/>
<path d="M835.9 143.2h7v3.500h-7z" fill="#dde" stroke="#889" stroke-width="0.600"/><circle cx="839.4" cy="141.7" r="3.300" fill="#fff" fill-opacity="0.500" stroke="#d81818" stroke-width="1.500"/><path d="M837.1 144.0l4.600-4.600" stroke="#d81818" stroke-width="1.500"/>
<rect x="845.50" y="136.40" width="11.50" height="11.50" fill="#c4c4c4" />
<text x="862.8" y="146.4" font-size="11.5" fill="#222" textLength="38.0" lengthAdjust="spacingAndGlyphs" >グリッド</text>
<ellipse cx="815.600" cy="158.29999999999998" rx="4.500" ry="2.800" fill="#9a9aa4" stroke="#667" stroke-width="0.700"/><ellipse cx="815.600" cy="157.29999999999998" rx="4" ry="1.800" fill="#d4d4dc"/>
<path d="M823.5 158.79999999999998h7v3.500h-7z" fill="#dde" stroke="#889" stroke-width="0.600"/><circle cx="827" cy="157.29999999999998" r="3.300" fill="#fff" fill-opacity="0.500" stroke="#d81818" stroke-width="1.500"/><path d="M824.7 159.6l4.600-4.600" stroke="#d81818" stroke-width="1.500"/>
<path d="M835.9 158.79999999999998h7v3.500h-7z" fill="#dde" stroke="#889" stroke-width="0.600"/><circle cx="839.4" cy="157.29999999999998" r="3.300" fill="#fff" fill-opacity="0.500" stroke="#d81818" stroke-width="1.500"/><path d="M837.1 159.6l4.600-4.600" stroke="#d81818" stroke-width="1.500"/>
<rect x="845.50" y="152.00" width="11.50" height="11.50" fill="#0000ff" />
<text x="862.8" y="162.0" font-size="11.5" fill="#222" textLength="69.0" lengthAdjust="spacingAndGlyphs" >マスター ガイド</text>
<ellipse cx="815.600" cy="173.89999999999998" rx="4.500" ry="2.800" fill="#9a9aa4" stroke="#667" stroke-width="0.700"/><ellipse cx="815.600" cy="172.89999999999998" rx="4" ry="1.800" fill="#d4d4dc"/>
<path d="M823.5 174.39999999999998h7v3.500h-7z" fill="#dde" stroke="#889" stroke-width="0.600"/><circle cx="827" cy="172.89999999999998" r="3.300" fill="#fff" fill-opacity="0.500" stroke="#d81818" stroke-width="1.500"/><path d="M824.7 175.2l4.600-4.600" stroke="#d81818" stroke-width="1.500"/>
<path d="M835.9 174.39999999999998h7v3.500h-7z" fill="#dde" stroke="#889" stroke-width="0.600"/><circle cx="839.4" cy="172.89999999999998" r="3.300" fill="#fff" fill-opacity="0.500" stroke="#d81818" stroke-width="1.500"/><path d="M837.1 175.2l4.600-4.600" stroke="#d81818" stroke-width="1.500"/>
<rect x="845.50" y="167.60" width="11.50" height="11.50" fill="#1c1210" />
<text x="862.8" y="177.6" font-size="11.5" fill="#222" textLength="55.0" lengthAdjust="spacingAndGlyphs" >デスクトップ</text>
<ellipse cx="815.600" cy="189.5" rx="4.500" ry="2.800" fill="#9a9aa4" stroke="#667" stroke-width="0.700"/><ellipse cx="815.600" cy="188.5" rx="4" ry="1.800" fill="#d4d4dc"/>
<path d="M823.5 190.0h7v3.500h-7z" fill="#dde" stroke="#889" stroke-width="0.600"/><circle cx="827" cy="188.5" r="3.300" fill="#fff" fill-opacity="0.500" stroke="#d81818" stroke-width="1.500"/><path d="M824.7 190.8l4.600-4.600" stroke="#d81818" stroke-width="1.500"/>
<path d="M835.9 190.0h7v3.500h-7z" fill="#dde" stroke="#889" stroke-width="0.600"/><circle cx="839.4" cy="188.5" r="3.300" fill="#fff" fill-opacity="0.500" stroke="#d81818" stroke-width="1.500"/><path d="M837.1 190.8l4.600-4.600" stroke="#d81818" stroke-width="1.500"/>
<rect x="845.50" y="183.20" width="11.50" height="11.50" fill="#0000ff" />
<text x="862.8" y="193.2" font-size="11.5" fill="#222" textLength="27.0" lengthAdjust="spacingAndGlyphs" >ガイド</text>
<ellipse cx="815.600" cy="204.6" rx="4.500" ry="3" fill="#fff" stroke="#334" stroke-width="0.900"/><circle cx="815.600" cy="204.6" r="1.800" fill="#223"/>
<rect x="824.500" y="200.1" width="5" height="4" fill="#fff" stroke="#667" stroke-width="0.700"/><rect x="822.500" y="204.1" width="9" height="4.500" fill="#eee" stroke="#445" stroke-width="0.800"/>
<path d="M835.9 205.6h7v3.500h-7z" fill="#dde" stroke="#889" stroke-width="0.600"/><circle cx="839.4" cy="204.1" r="3.300" fill="#fff" fill-opacity="0.500" stroke="#d81818" stroke-width="1.500"/><path d="M837.1 206.4l4.600-4.600" stroke="#d81818" stroke-width="1.500"/>
<rect x="845.50" y="198.80" width="11.50" height="11.50" fill="#1c1210" />
<text x="862.8" y="208.8" font-size="11.5" fill="#222" textLength="5.0" lengthAdjust="spacingAndGlyphs" >1</text>
<ellipse cx="815.600" cy="220.2" rx="4.500" ry="3" fill="#fff" stroke="#334" stroke-width="0.900"/><circle cx="815.600" cy="220.2" r="1.800" fill="#223"/>
<path d="M823.5 221.2h7v3.500h-7z" fill="#dde" stroke="#889" stroke-width="0.600"/><circle cx="827" cy="219.7" r="3.300" fill="#fff" fill-opacity="0.500" stroke="#d81818" stroke-width="1.500"/><path d="M824.7 222.0l4.600-4.600" stroke="#d81818" stroke-width="1.500"/>
<path d="M835.9 221.2h7v3.500h-7z" fill="#dde" stroke="#889" stroke-width="0.600"/><circle cx="839.4" cy="219.7" r="3.300" fill="#fff" fill-opacity="0.500" stroke="#d81818" stroke-width="1.500"/><path d="M837.1 222.0l4.600-4.600" stroke="#d81818" stroke-width="1.500"/>
<rect x="845.50" y="214.40" width="11.50" height="11.50" fill="#1c1210" />
<text x="862.8" y="224.4" font-size="11.5" fill="#222" textLength="56.0" lengthAdjust="spacingAndGlyphs" >描くスペース</text>
<ellipse cx="815.600" cy="235.79999999999998" rx="4.500" ry="3" fill="#fff" stroke="#334" stroke-width="0.900"/><circle cx="815.600" cy="235.79999999999998" r="1.800" fill="#223"/>
<rect x="824.500" y="231.29999999999998" width="5" height="4" fill="#fff" stroke="#667" stroke-width="0.700"/><rect x="822.500" y="235.29999999999998" width="9" height="4.500" fill="#eee" stroke="#445" stroke-width="0.800"/>
<path d="M835.5 240.29999999999998l1-3l5.500-6l2 2l-5.500 6z" fill="#334" stroke="#223" stroke-width="0.500"/>
<rect x="845.50" y="230.00" width="11.50" height="11.50" fill="#1c1210" />
<text x="862.8" y="240.0" font-size="11.5" fill="#e81818" textLength="21.0" lengthAdjust="spacingAndGlyphs" font-weight="bold" >背景</text>
<ellipse cx="815.600" cy="251.89999999999998" rx="4.500" ry="2.800" fill="#9a9aa4" stroke="#667" stroke-width="0.700"/><ellipse cx="815.600" cy="250.89999999999998" rx="4" ry="1.800" fill="#d4d4dc"/>
<path d="M823.5 252.39999999999998h7v3.500h-7z" fill="#dde" stroke="#889" stroke-width="0.600"/><circle cx="827" cy="250.89999999999998" r="3.300" fill="#fff" fill-opacity="0.500" stroke="#d81818" stroke-width="1.500"/><path d="M824.7 253.2l4.600-4.600" stroke="#d81818" stroke-width="1.500"/>
<path d="M835.9 252.39999999999998h7v3.500h-7z" fill="#dde" stroke="#889" stroke-width="0.600"/><circle cx="839.4" cy="250.89999999999998" r="3.300" fill="#fff" fill-opacity="0.500" stroke="#d81818" stroke-width="1.500"/><path d="M837.1 253.2l4.600-4.600" stroke="#d81818" stroke-width="1.500"/>
<rect x="845.50" y="245.60" width="11.50" height="11.50" fill="#1c1210" />
<text x="862.8" y="255.6" font-size="11.5" fill="#222" textLength="27.0" lengthAdjust="spacingAndGlyphs" >下書き</text>
<rect x="792.00" y="529.30" width="142.50" height="11.20" fill="#f4f4f4" />
<rect x="792.00" y="529.30" width="12.00" height="11.20" fill="#fafafa" stroke="#999" stroke-width="0.8" />
<path d="M800 532l-3.500 3l3.500 3z" fill="#111"/>
<rect x="804.50" y="529.80" width="13.00" height="10.40" fill="url(#gThumbH)" stroke="#999" stroke-width="0.8" rx="1.5" />
<rect x="922.50" y="529.30" width="12.00" height="11.20" fill="#fafafa" stroke="#999" stroke-width="0.8" />
<path d="M926.500 532l3.500 3l-3.500 3z" fill="#111"/>
<rect x="792.50" y="546.00" width="16.00" height="16.00" fill="#e8ece8" stroke="#888" stroke-width="1" rx="2" />
<path d="M795.5 551.5l7-1.200M795.5 554.500l7-1.200M795.5 557.500l7-1.200M795.5 560l7-1.200" stroke="#446" stroke-width="0.900"/><circle cx="803.5" cy="550.500" r="2.200" fill="#1a9a1a"/>
<rect x="811.50" y="546.00" width="16.00" height="16.00" fill="#e8ece8" stroke="#888" stroke-width="1" rx="2" />
<path d="M814.5 551.5l7-1.200M814.5 554.500l7-1.200M814.5 557.500l7-1.200M814.5 560l7-1.200" stroke="#446" stroke-width="0.900"/><circle cx="822.5" cy="550.500" r="2.200" fill="#1a9a1a"/>
<path d="M815.500 553l4 4h5" stroke="#e8501a" stroke-width="1.600" fill="none"/>
<path d="M919.500 551.500h9M921 551.500l.7 9h5.600l.7-9M922.500 550h3" stroke="#c8c8c8" stroke-width="1.100" fill="none"/>
<rect x="940.00" y="109.00" width="18.00" height="456.00" fill="#f0f0f0" />
<path d="M940 109h4c6 0 12 4 12 10v105c0 5-4 8-8 8h-8" fill="#f8f8f8" stroke="#c4c4c4" stroke-width="1"/>
<path d="M940 233h8c4 0 8 3 8 8v96c0 5-4 8-8 8h-8" fill="#ececec" stroke="#c4c4c4" stroke-width="1"/>
<path d="M944 114.500h3M944 118h3M944 121.500h3" stroke="#335" stroke-width="0.900"/><path d="M949 115h4M949 118.500h4M949 122h4" stroke="#668" stroke-width="1.200" stroke-dasharray="1.500 1"/>
<text x="947.500" y="128" font-size="9.500" fill="#222" textLength="84" lengthAdjust="spacingAndGlyphs" style="writing-mode:vertical-rl">オブジェクト マネージャ</text>
<path d="M945 222.500l5.500 5.500M950.500 222.500l-5.500 5.500" stroke="#888" stroke-width="1.300"/>
<path d="M944 241l4.500-2l4 2v5l-4 2.500l-4.500-2.500z" fill="#c8c8dc" stroke="#556" stroke-width="0.800"/><path d="M942 243.500l3-1.500v3z" fill="#e8a020"/>
<text x="947.500" y="253.500" font-size="8.500" fill="#222" textLength="87" lengthAdjust="spacingAndGlyphs" style="writing-mode:vertical-rl">オブジェクトのプロパティ</text>
</g>
<g id="palette">
<rect x="958.00" y="92.00" width="42.00" height="473.00" fill="#f0f0f0" />
<path d="M961 95.500h36" stroke="#aaa" stroke-width="1.500" stroke-dasharray="1 1.500"/>
<rect x="959.50" y="99.10" width="12.40" height="12.33" fill="#fafafa" stroke="#999" stroke-width="0.8" />
<rect x="972.40" y="98.60" width="13.40" height="13.33" fill="#10163a" stroke="#7a7a7a" stroke-width="0.5" />
<rect x="985.80" y="98.60" width="13.40" height="13.33" fill="#666666" stroke="#7a7a7a" stroke-width="0.5" />
<rect x="959.50" y="112.43" width="12.40" height="12.33" fill="#fafafa" stroke="#999" stroke-width="0.8" />
<rect x="972.40" y="111.93" width="13.40" height="13.33" fill="#cdd5e8" stroke="#7a7a7a" stroke-width="0.5" />
<rect x="985.80" y="111.93" width="13.40" height="13.33" fill="#b8b8b8" stroke="#7a7a7a" stroke-width="0.5" />
<rect x="959.50" y="125.76" width="12.40" height="12.33" fill="#fafafa" stroke="#999" stroke-width="0.8" />
<rect x="972.40" y="125.26" width="13.40" height="13.33" fill="#eef1f8" stroke="#7a7a7a" stroke-width="0.5" />
<rect x="985.80" y="125.26" width="13.40" height="13.33" fill="#a8a8a8" stroke="#7a7a7a" stroke-width="0.5" />
<rect x="959.00" y="138.59" width="13.40" height="13.33" fill="#6fa596" stroke="#7a7a7a" stroke-width="0.5" />
<rect x="972.40" y="138.59" width="13.40" height="13.33" fill="#3e8a76" stroke="#7a7a7a" stroke-width="0.5" />
<rect x="985.80" y="138.59" width="13.40" height="13.33" fill="#b0b0b8" stroke="#7a7a7a" stroke-width="0.5" />
<rect x="959.00" y="151.92" width="13.40" height="13.33" fill="#0c5a48" stroke="#7a7a7a" stroke-width="0.5" />
<rect x="972.40" y="151.92" width="13.40" height="13.33" fill="#a87820" stroke="#7a7a7a" stroke-width="0.5" />
<rect x="985.80" y="151.92" width="13.40" height="13.33" fill="#5c5c70" stroke="#7a7a7a" stroke-width="0.5" />
<rect x="959.00" y="165.25" width="13.40" height="13.33" fill="#787688" stroke="#7a7a7a" stroke-width="0.5" />
<rect x="972.40" y="165.25" width="13.40" height="13.33" fill="#063c28" stroke="#7a7a7a" stroke-width="0.5" />
<rect x="985.80" y="165.25" width="13.40" height="13.33" fill="#f8f0e0" stroke="#7a7a7a" stroke-width="0.5" />
<rect x="959.00" y="178.58" width="13.40" height="13.33" fill="#fff080" stroke="#7a7a7a" stroke-width="0.5" />
<rect x="972.40" y="178.58" width="13.40" height="13.33" fill="#ffee00" stroke="#7a7a7a" stroke-width="0.5" />
<rect x="985.80" y="178.58" width="13.40" height="13.33" fill="#fff000" stroke="#7a7a7a" stroke-width="0.5" />
<rect x="959.00" y="191.91" width="13.40" height="13.33" fill="#a8b0d0" stroke="#7a7a7a" stroke-width="0.5" />
<rect x="972.40" y="191.91" width="13.40" height="13.33" fill="#dca818" stroke="#7a7a7a" stroke-width="0.5" />
<rect x="985.80" y="191.91" width="13.40" height="13.33" fill="#fde8b0" stroke="#7a7a7a" stroke-width="0.5" />
<rect x="959.00" y="205.24" width="13.40" height="13.33" fill="#98a4c8" stroke="#7a7a7a" stroke-width="0.5" />
<rect x="972.40" y="205.24" width="13.40" height="13.33" fill="#fff890" stroke="#7a7a7a" stroke-width="0.5" />
<rect x="985.80" y="205.24" width="13.40" height="13.33" fill="#584840" stroke="#7a7a7a" stroke-width="0.5" />
<rect x="959.00" y="218.57" width="13.40" height="13.33" fill="#ffec50" stroke="#7a7a7a" stroke-width="0.5" />
<rect x="972.40" y="218.57" width="13.40" height="13.33" fill="#f0d8a8" stroke="#7a7a7a" stroke-width="0.5" />
<rect x="985.80" y="218.57" width="13.40" height="13.33" fill="#fdece0" stroke="#7a7a7a" stroke-width="0.5" />
<rect x="959.00" y="231.90" width="13.40" height="13.33" fill="#2a7060" stroke="#7a7a7a" stroke-width="0.5" />
<rect x="972.40" y="231.90" width="13.40" height="13.33" fill="#d0d0d0" stroke="#7a7a7a" stroke-width="0.5" />
<rect x="985.80" y="231.90" width="13.40" height="13.33" fill="#f07850" stroke="#7a7a7a" stroke-width="0.5" />
<rect x="959.00" y="245.23" width="13.40" height="13.33" fill="#f0d490" stroke="#7a7a7a" stroke-width="0.5" />
<rect x="972.40" y="245.23" width="13.40" height="13.33" fill="#063828" stroke="#7a7a7a" stroke-width="0.5" />
<rect x="985.80" y="245.23" width="13.40" height="13.33" fill="#c86410" stroke="#7a7a7a" stroke-width="0.5" />
<rect x="959.00" y="258.56" width="13.40" height="13.33" fill="#d0e0dc" stroke="#7a7a7a" stroke-width="0.5" />
<rect x="972.40" y="258.56" width="13.40" height="13.33" fill="#c09870" stroke="#7a7a7a" stroke-width="0.5" />
<rect x="985.80" y="258.56" width="13.40" height="13.33" fill="#303030" stroke="#7a7a7a" stroke-width="0.5" />
<rect x="959.00" y="271.89" width="13.40" height="13.33" fill="#e8c000" stroke="#7a7a7a" stroke-width="0.5" />
<rect x="972.40" y="271.89" width="13.40" height="13.33" fill="#884420" stroke="#7a7a7a" stroke-width="0.5" />
<rect x="985.80" y="271.89" width="13.40" height="13.33" fill="#dca868" stroke="#7a7a7a" stroke-width="0.5" />
<rect x="959.00" y="285.22" width="13.40" height="13.33" fill="#f0d000" stroke="#7a7a7a" stroke-width="0.5" />
<rect x="972.40" y="285.22" width="13.40" height="13.33" fill="#dcaa60" stroke="#7a7a7a" stroke-width="0.5" />
<rect x="985.80" y="285.22" width="13.40" height="13.33" fill="#e4e4e4" stroke="#7a7a7a" stroke-width="0.5" />
<rect x="959.00" y="298.55" width="13.40" height="13.33" fill="#6c8c30" stroke="#7a7a7a" stroke-width="0.5" />
<rect x="972.40" y="298.55" width="13.40" height="13.33" fill="#3a302c" stroke="#7a7a7a" stroke-width="0.5" />
<rect x="985.80" y="298.55" width="13.40" height="13.33" fill="#fde4c4" stroke="#7a7a7a" stroke-width="0.5" />
<rect x="959.00" y="311.88" width="13.40" height="13.33" fill="#a0c818" stroke="#7a7a7a" stroke-width="0.5" />
<rect x="972.40" y="311.88" width="13.40" height="13.33" fill="#542414" stroke="#7a7a7a" stroke-width="0.5" />
<rect x="985.80" y="311.88" width="13.40" height="13.33" fill="#000000" stroke="#7a7a7a" stroke-width="0.5" />
<rect x="959.00" y="325.21" width="13.40" height="13.33" fill="#88a828" stroke="#7a7a7a" stroke-width="0.5" />
<rect x="972.40" y="325.21" width="13.40" height="13.33" fill="#7c4020" stroke="#7a7a7a" stroke-width="0.5" />
<rect x="985.80" y="325.21" width="13.40" height="13.33" fill="#e8d0b0" stroke="#7a7a7a" stroke-width="0.5" />
<rect x="959.00" y="338.54" width="13.40" height="13.33" fill="#d8e890" stroke="#7a7a7a" stroke-width="0.5" />
<rect x="972.40" y="338.54" width="13.40" height="13.33" fill="#d09c10" stroke="#7a7a7a" stroke-width="0.5" />
<rect x="985.80" y="338.54" width="13.40" height="13.33" fill="#5c2c18" stroke="#7a7a7a" stroke-width="0.5" />
<rect x="959.00" y="351.87" width="13.40" height="13.33" fill="#ffffff" stroke="#7a7a7a" stroke-width="0.5" />
<rect x="972.40" y="351.87" width="13.40" height="13.33" fill="#e83040" stroke="#7a7a7a" stroke-width="0.5" />
<rect x="985.80" y="351.87" width="13.40" height="13.33" fill="#f8e8c0" stroke="#7a7a7a" stroke-width="0.5" />
<rect x="959.00" y="365.20" width="13.40" height="13.33" fill="#504440" stroke="#7a7a7a" stroke-width="0.5" />
<rect x="972.40" y="365.20" width="13.40" height="13.33" fill="#d0e4dc" stroke="#7a7a7a" stroke-width="0.5" />
<rect x="985.80" y="365.20" width="13.40" height="13.33" fill="#4c2010" stroke="#7a7a7a" stroke-width="0.5" />
<rect x="959.00" y="378.53" width="13.40" height="13.33" fill="#e0dedc" stroke="#7a7a7a" stroke-width="0.5" />
<rect x="972.40" y="378.53" width="13.40" height="13.33" fill="#805828" stroke="#7a7a7a" stroke-width="0.5" />
<rect x="985.80" y="378.53" width="13.40" height="13.33" fill="#3c3c3c" stroke="#7a7a7a" stroke-width="0.5" />
<rect x="959.00" y="391.86" width="13.40" height="13.33" fill="#c0e0a0" stroke="#7a7a7a" stroke-width="0.5" />
<rect x="972.40" y="391.86" width="13.40" height="13.33" fill="#2c0c04" stroke="#7a7a7a" stroke-width="0.5" />
<rect x="985.80" y="391.86" width="13.40" height="13.33" fill="#888078" stroke="#7a7a7a" stroke-width="0.5" />
<rect x="959.00" y="405.19" width="13.40" height="13.33" fill="#c08020" stroke="#7a7a7a" stroke-width="0.5" />
<rect x="972.40" y="405.19" width="13.40" height="13.33" fill="#d0d0d0" stroke="#7a7a7a" stroke-width="0.5" />
<rect x="985.80" y="405.19" width="13.40" height="13.33" fill="#c0bcb8" stroke="#7a7a7a" stroke-width="0.5" />
<rect x="959.00" y="418.52" width="13.40" height="13.33" fill="#064838" stroke="#7a7a7a" stroke-width="0.5" />
<rect x="972.40" y="418.52" width="13.40" height="13.33" fill="#989898" stroke="#7a7a7a" stroke-width="0.5" />
<rect x="985.80" y="418.52" width="13.40" height="13.33" fill="#e0e0e0" stroke="#7a7a7a" stroke-width="0.5" />
<rect x="959.00" y="431.85" width="13.40" height="13.33" fill="#fde8c8" stroke="#7a7a7a" stroke-width="0.5" />
<rect x="972.40" y="431.85" width="13.40" height="13.33" fill="#68c4f0" stroke="#7a7a7a" stroke-width="0.5" />
<rect x="985.80" y="431.85" width="13.40" height="13.33" fill="#dcdcdc" stroke="#7a7a7a" stroke-width="0.5" />
<rect x="959.00" y="445.18" width="13.40" height="13.33" fill="#e0c078" stroke="#7a7a7a" stroke-width="0.5" />
<rect x="972.40" y="445.18" width="13.40" height="13.33" fill="#045888" stroke="#7a7a7a" stroke-width="0.5" />
<rect x="985.80" y="445.18" width="13.40" height="13.33" fill="#141c44" stroke="#7a7a7a" stroke-width="0.5" />
<rect x="959.00" y="458.51" width="13.40" height="13.33" fill="#281c18" stroke="#7a7a7a" stroke-width="0.5" />
<rect x="972.40" y="458.51" width="13.40" height="13.33" fill="#100804" stroke="#7a7a7a" stroke-width="0.5" />
<rect x="985.80" y="458.51" width="13.40" height="13.33" fill="#380404" stroke="#7a7a7a" stroke-width="0.5" />
<rect x="959.00" y="471.84" width="13.40" height="13.33" fill="#5c3c20" stroke="#7a7a7a" stroke-width="0.5" />
<rect x="972.40" y="471.84" width="13.40" height="13.33" fill="#fcdca8" stroke="#7a7a7a" stroke-width="0.5" />
<rect x="985.80" y="471.84" width="13.40" height="13.33" fill="#b85c18" stroke="#7a7a7a" stroke-width="0.5" />
<rect x="959.00" y="485.17" width="13.40" height="13.33" fill="#300404" stroke="#7a7a7a" stroke-width="0.5" />
<rect x="972.40" y="485.17" width="13.40" height="13.33" fill="#848484" stroke="#7a7a7a" stroke-width="0.5" />
<rect x="985.80" y="485.17" width="13.40" height="13.33" fill="#e87c08" stroke="#7a7a7a" stroke-width="0.5" />
<rect x="959.00" y="498.50" width="13.40" height="13.33" fill="#e0bc70" stroke="#7a7a7a" stroke-width="0.5" />
<rect x="972.40" y="498.50" width="13.40" height="13.33" fill="#707070" stroke="#7a7a7a" stroke-width="0.5" />
<rect x="985.80" y="498.50" width="13.40" height="13.33" fill="#d0e8f8" stroke="#7a7a7a" stroke-width="0.5" />
<rect x="959.00" y="511.83" width="13.40" height="13.33" fill="#404040" stroke="#7a7a7a" stroke-width="0.5" />
<rect x="972.40" y="511.83" width="13.40" height="13.33" fill="#f0e0b8" stroke="#7a7a7a" stroke-width="0.5" />
<rect x="985.80" y="511.83" width="13.40" height="13.33" fill="#f8f0dc" stroke="#7a7a7a" stroke-width="0.5" />
<rect x="959.00" y="525.16" width="13.40" height="13.33" fill="#f0f0f0" stroke="#7a7a7a" stroke-width="0.5" />
<rect x="972.40" y="525.16" width="13.40" height="13.33" fill="#d8d8d8" stroke="#7a7a7a" stroke-width="0.5" />
<rect x="985.80" y="525.16" width="13.40" height="13.33" fill="#fdf8f0" stroke="#7a7a7a" stroke-width="0.5" />
<rect x="959.00" y="538.49" width="13.40" height="13.33" fill="#202c58" stroke="#7a7a7a" stroke-width="0.5" />
<rect x="972.40" y="538.49" width="13.40" height="13.33" fill="#e8e8e8" stroke="#7a7a7a" stroke-width="0.5" />
<rect x="985.80" y="538.49" width="13.40" height="13.33" fill="#4c8c44" stroke="#7a7a7a" stroke-width="0.5" />
<path d="M963.500 102.1l5 3.200l-5 3.200z" fill="#111"/>
<path d="M969.500 113.92999999999999l-5 6.500" stroke="#345" stroke-width="1.800"/><path d="M967.500 113.42999999999999l3 3" stroke="#123" stroke-width="2.200"/><path d="M964 120.92999999999999l-1.500 2.500" stroke="#36a" stroke-width="1.200"/>
<path d="M960.500 126.75999999999999l10.500 10.500M971 126.75999999999999l-10.500 10.500" stroke="#222" stroke-width="0.900"/>
<rect x="959.00" y="552.00" width="41.00" height="12.50" fill="#f0f0f0" />
<path d="M967.500 555l-3.500 3l3.500 3z" fill="#222"/><path d="M990.500 555l3.500 3l-3.500 3z" fill="#222"/>
<rect x="974.00" y="552.50" width="10.50" height="11.50" fill="url(#gThumbH)" stroke="#aaa" stroke-width="0.8" rx="1.5" />
</g>
</g>
</svg>
</body>
</html>
